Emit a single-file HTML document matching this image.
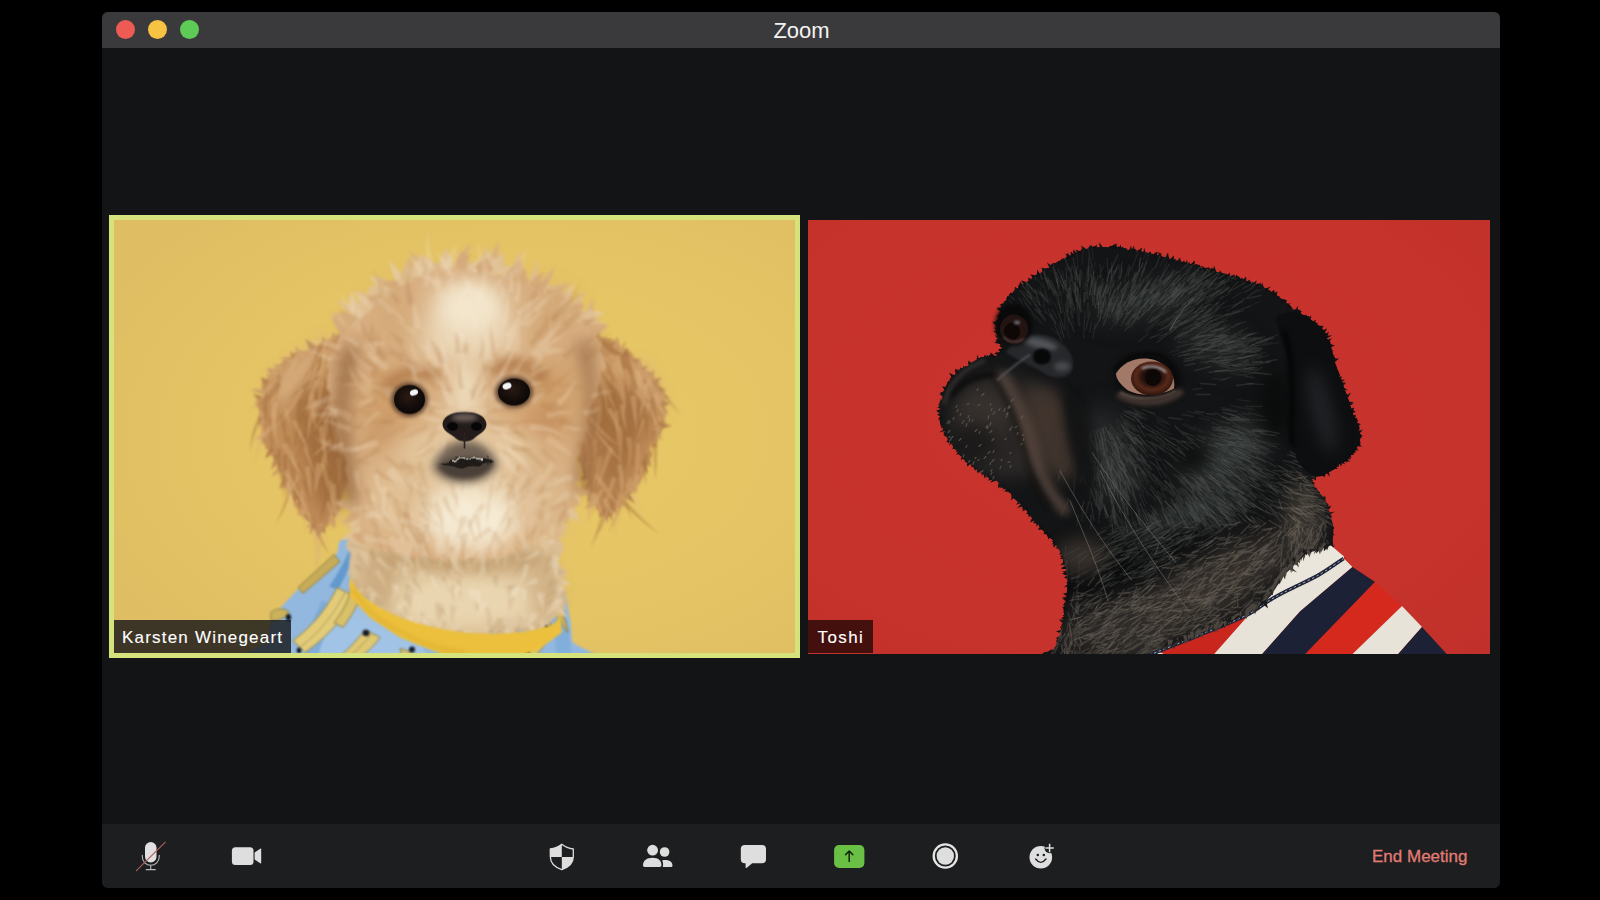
<!DOCTYPE html>
<html lang="en">
<head>
<meta charset="utf-8">
<title>Zoom</title>
<style>
*{margin:0;padding:0;box-sizing:border-box}
html,body{width:1600px;height:900px;overflow:hidden;background:#000}
body{font-family:"Liberation Sans",sans-serif;position:relative}
#win{position:absolute;left:102px;top:12px;width:1398px;height:876px;background:#131415;border-radius:6px;overflow:hidden}
#titlebar{position:absolute;left:0;top:0;width:100%;height:36px;background:#3a3a3c}
#titlebar .t{position:absolute;left:0;right:0;top:0;height:36px;line-height:37px;text-align:center;color:#f2f2f2;font-size:22px;padding-left:1px;}
.tl{position:absolute;top:8.2px;width:19px;height:19px;border-radius:50%}
#tile1{position:absolute;left:7px;top:202.5px;width:691px;height:443px;background:#d6e27c;}
#tile1 .ph{position:absolute;left:5px;top:5px;width:681px;height:433px;background:#e9c35b;overflow:hidden}
#tile2{position:absolute;left:706px;top:207.5px;width:682px;height:434px;background:#c8332c;overflow:hidden}
.nm{position:absolute;height:33px;line-height:35px;-webkit-text-stroke:0.12px #fff;color:#fff;font-size:17px;letter-spacing:1.2px;padding:0 8px 0 8px;white-space:nowrap}
#bar{position:absolute;left:0;top:812px;width:100%;height:64px;background:#1c1e1f}
#end{position:absolute;left:1270px;top:0;height:64px;line-height:66px;color:#e27c74;-webkit-text-stroke:0.3px #e27c74;font-size:17px;white-space:nowrap}
.ic{position:absolute;overflow:visible}
</style>
</head>
<body>
<div id="win">
  <div id="titlebar">
    <div class="tl" style="left:14px;background:#ee5b54"></div>
    <div class="tl" style="left:46px;background:#f6c343"></div>
    <div class="tl" style="left:78px;background:#5fcb57"></div>
    <div class="t">Zoom</div>
  </div>
  <div id="tile1">
    <div class="ph">
      <!--DOG1-START-->
<svg class="ic" style="left:0;top:0" width="681" height="433" viewBox="114 219.5 681 433">
  <defs>
    <radialGradient id="bg1" cx="60%" cy="50%" r="75%">
      <stop offset="0" stop-color="#e8c865"/>
      <stop offset="0.55" stop-color="#e5c465"/>
      <stop offset="1" stop-color="#debd63"/>
    </radialGradient>
    <filter id="fur" color-interpolation-filters="sRGB" filterUnits="userSpaceOnUse" x="114" y="219.5" width="681" height="433">
      <feTurbulence type="fractalNoise" baseFrequency="0.05 0.06" numOctaves="2" seed="7" result="n"/>
      <feDisplacementMap in="SourceGraphic" in2="n" scale="14" xChannelSelector="R" yChannelSelector="G" result="d"/>
      <feGaussianBlur in="d" stdDeviation="1.5"/>
    </filter>
    <filter id="furfine" color-interpolation-filters="sRGB" filterUnits="userSpaceOnUse" x="114" y="219.5" width="681" height="433">
      <feTurbulence type="fractalNoise" baseFrequency="0.09 0.12" numOctaves="2" seed="3" result="n"/>
      <feDisplacementMap in="SourceGraphic" in2="n" scale="10" xChannelSelector="R" yChannelSelector="G" result="d"/>
      <feGaussianBlur in="d" stdDeviation="0.7"/>
    </filter>
    <filter id="b05" color-interpolation-filters="sRGB" filterUnits="userSpaceOnUse" x="114" y="219.5" width="681" height="433"><feGaussianBlur stdDeviation="0.7"/></filter>
    <filter id="b15" color-interpolation-filters="sRGB" filterUnits="userSpaceOnUse" x="114" y="219.5" width="681" height="433"><feGaussianBlur stdDeviation="1.4"/></filter>
    <filter id="b1" color-interpolation-filters="sRGB" filterUnits="userSpaceOnUse" x="114" y="219.5" width="681" height="433"><feGaussianBlur stdDeviation="1"/></filter>
    <filter id="b2" color-interpolation-filters="sRGB" filterUnits="userSpaceOnUse" x="114" y="219.5" width="681" height="433"><feGaussianBlur stdDeviation="2"/></filter>
    <filter id="b4" color-interpolation-filters="sRGB" filterUnits="userSpaceOnUse" x="114" y="219.5" width="681" height="433"><feGaussianBlur stdDeviation="4"/></filter>
    <filter id="b8" color-interpolation-filters="sRGB" filterUnits="userSpaceOnUse" x="114" y="219.5" width="681" height="433"><feGaussianBlur stdDeviation="8"/></filter>
    <filter id="b14" color-interpolation-filters="sRGB" filterUnits="userSpaceOnUse" x="114" y="219.5" width="681" height="433"><feGaussianBlur stdDeviation="13"/></filter>
    <radialGradient id="eyeg" cx="45%" cy="40%" r="60%">
      <stop offset="0" stop-color="#2a1a12"/>
      <stop offset="0.7" stop-color="#120c0a"/>
      <stop offset="1" stop-color="#0a0706"/>
    </radialGradient>
    <clipPath id="c1"><rect x="114" y="219.5" width="681" height="433"/></clipPath>
  </defs>
  <rect x="114" y="219.5" width="681" height="433" fill="url(#bg1)"/>
  <g clip-path="url(#c1)">
  <!-- shirt -->
  <g filter="url(#b1)">
    <path d="M352.0 538.0 C331.2 537.2 343.3 547.2 335.0 555.0 C326.7 562.8 312.0 575.0 302.0 585.0 C292.0 595.0 280.8 605.8 275.0 615.0 C269.2 624.2 268.5 632.2 267.0 640.0 C265.5 647.8 214.8 658.3 266.0 662.0 C317.2 665.7 523.0 665.7 574.0 662.0 C625.0 658.3 572.7 647.3 572.0 640.0 C571.3 632.7 571.7 626.3 570.0 618.0 C568.3 609.7 567.0 597.2 562.0 590.0 C557.0 582.8 557.0 580.0 540.0 575.0 C523.0 570.0 491.3 566.2 460.0 560.0 C428.7 553.8 372.8 538.8 352.0 538.0 Z" fill="#93b8df"/>
    <path d="M300 640 C330 620 352 604 372 600 L420 640 L430 662 H290 Z" fill="#a4c5e7" opacity=".8"/>
    <path d="M353 541 C347 556 339 572 329 586 L338 589 C346 575 353 559 358 546 Z" fill="#6399cd"/>
    <path d="M322 600 C314 616 306 636 304 656 L318 656 C322 640 330 622 338 606 Z" fill="#79a8d8" opacity=".8"/>
    <path d="M560 596 C566 612 570 634 572 656 L556 656 C556 636 552 616 548 604 Z" fill="#7eabd9" opacity=".8"/>
    <g stroke="#8a8044" stroke-width="1">
      <path d="M334 554 C322 565 310 576 298 587 L303 593 C316 582 329 571 340 561 Z" fill="#c6ab58"/>
      <path d="M337 587 C329 604 315 624 293 640 L305 652 C328 636 347 614 355 596 Z" fill="#e3cb78"/>
      <path d="M352 586 C349 598 343 612 334 622 L343 627 C352 615 360 601 362 590 Z" fill="#d9c06a"/>
      <path d="M365 629 C358 639 349 648 340 656 L359 658 C368 651 376 643 380 637 Z" fill="#e0c873"/>
      <path d="M271 612 C276 608 283 607 289 611 C287 617 278 621 271 620 Z" fill="#cdb25c"/>
      <path d="M522 648 C530 638 540 628 548 624 C550 636 542 650 532 660 Z" fill="#dcc36c"/>
      <path d="M557 602 C562 610 566 620 568 632 C562 626 556 614 554 606 Z" fill="#cdb25c"/>
      <path d="M400 648 C408 650 416 654 422 660 L404 662 Z" fill="#d9c06a"/>
    </g>
    <g fill="none" stroke="#8a8044" stroke-width=".8" opacity=".8">
      <path d="M345 592 C336 610 322 630 301 646"/>
      <path d="M372 633 C365 642 357 650 349 656"/>
    </g>
    <g fill="#151b28">
      <ellipse cx="366" cy="632.5" rx="3.4" ry="3.2"/>
      <ellipse cx="288.5" cy="617" rx="2.6" ry="3.4"/>
      <ellipse cx="299" cy="650" rx="2.4" ry="3"/>
      <ellipse cx="548" cy="626" rx="3" ry="4"/>
      <ellipse cx="527" cy="651" rx="3" ry="3"/>
      <ellipse cx="412" cy="649" rx="3" ry="3"/>
    </g>
  </g>
  <!-- neck fur -->
  <path d="M356.0 535.0 C337.7 541.7 350.7 552.5 350.0 560.0 C349.3 567.5 348.3 573.0 352.0 580.0 C355.7 587.0 363.7 595.3 372.0 602.0 C380.3 608.7 391.5 615.3 402.0 620.0 C412.5 624.7 423.7 627.7 435.0 630.0 C446.3 632.3 457.5 633.5 470.0 634.0 C482.5 634.5 497.5 634.5 510.0 633.0 C522.5 631.5 536.7 628.8 545.0 625.0 C553.3 621.2 556.8 616.7 560.0 610.0 C563.2 603.3 564.0 593.3 564.0 585.0 C564.0 576.7 561.5 568.3 560.0 560.0 C558.5 551.7 571.7 541.7 555.0 535.0 C538.3 528.3 493.2 520.0 460.0 520.0 C426.8 520.0 374.3 528.3 356.0 535.0 Z" fill="#dcc097" filter="url(#fur)"/>
  <g filter="url(#b1)"><path d="M353 576Q351 578 351 583Q355 582 358 580ZM367 589Q363 589 359 590Q363 594 366 594ZM374 599Q373 603 375 609Q377 605 379 602ZM384 604Q380 607 377 611Q384 612 388 609ZM392 609Q387 613 382 617Q390 616 395 613ZM440 625Q435 628 432 634Q437 632 443 629ZM449 628Q448 632 449 637Q453 633 454 630ZM451 626Q448 629 446 633Q452 633 455 631ZM473 632Q476 636 480 640Q482 634 480 629ZM481 630Q481 636 481 641Q484 636 485 630ZM477 631Q480 634 482 637Q483 632 481 629ZM536 623Q537 628 539 633Q544 627 544 622ZM542 619Q541 622 541 627Q546 625 548 622ZM544 620Q546 625 551 629Q550 624 550 619ZM554 612Q561 615 568 617Q564 609 558 606ZM558 591Q562 594 566 597Q566 590 562 586Z" fill="#dcc097" opacity="0.95"/><path d="M362 587Q357 590 353 595Q359 593 364 590ZM396 614Q396 618 398 623Q403 619 404 615ZM401 616Q401 620 403 625Q406 621 406 617ZM413 621Q413 625 416 629Q418 625 419 621ZM422 624Q423 628 424 633Q427 628 426 623ZM464 629Q463 633 466 637Q467 634 468 630ZM505 629Q505 634 507 639Q508 634 509 629ZM511 630Q512 634 518 638Q518 632 517 627ZM529 624Q529 629 532 634Q535 630 536 626ZM555 610Q561 613 565 616Q563 608 558 606ZM559 584Q564 585 571 584Q566 580 561 578Z" fill="#e6d0aa" opacity="0.95"/><path d="M353 577Q352 581 354 586Q356 583 358 580ZM358 581Q353 583 348 586Q355 589 361 587ZM369 595Q367 600 369 606Q371 601 373 597ZM380 602Q377 604 374 606Q379 607 382 605ZM408 618Q405 623 403 631Q410 626 414 621ZM425 622Q422 626 422 630Q428 630 430 627ZM428 626Q431 631 439 634Q436 629 433 624ZM460 630Q460 635 459 641Q464 635 464 629ZM487 632Q492 634 497 633Q493 630 489 628ZM488 628Q484 634 482 640Q489 637 493 632ZM498 628Q496 633 498 640Q502 636 505 632ZM514 628Q515 633 516 637Q519 632 518 628ZM522 628Q525 633 529 637Q529 631 527 625ZM534 622Q534 626 535 629Q540 627 541 624ZM558 600Q565 603 572 603Q566 599 560 596ZM560 597Q563 596 567 592Q563 591 559 591ZM560 595Q564 594 567 592Q563 589 559 590ZM559 575Q563 573 567 571Q562 569 557 570Z" fill="#d2b58a" opacity="0.95"/></g>
  <ellipse cx="465" cy="600" rx="75" ry="26" fill="#e9d5b0" filter="url(#b8)"/>
  <ellipse cx="378" cy="585" rx="18" ry="26" fill="#c9a87c" filter="url(#b8)" opacity=".8"/>
  <ellipse cx="545" cy="590" rx="16" ry="30" fill="#d0b084" filter="url(#b8)" opacity=".8"/>
  <ellipse cx="460" cy="558" rx="92" ry="12" fill="#bd9868" filter="url(#b8)" opacity=".8"/>
  <g filter="url(#b15)"><path d="M402 617Q402 627 404 636Q405 627 405 617ZM515 583Q509 587 501 586Q511 590 517 587ZM549 556Q545 565 544 576Q550 568 555 559ZM498 617Q494 626 486 634Q500 629 504 619ZM508 618Q507 626 512 635Q513 627 515 619ZM443 576Q443 585 451 594Q446 585 446 576ZM517 626Q514 635 507 642Q518 637 522 628ZM391 615Q393 621 401 624Q398 619 396 614ZM437 523Q439 530 439 537Q443 529 441 522ZM420 612Q421 619 421 625Q424 618 424 612ZM550 579Q549 585 546 590Q555 586 556 580ZM410 579Q417 585 422 593Q420 582 413 575ZM422 553Q425 562 429 570Q431 560 429 552ZM399 612Q399 618 398 624Q405 618 405 612ZM519 615Q519 624 512 632Q523 625 524 616ZM514 536Q513 541 518 548Q517 542 518 537ZM435 603Q436 611 437 618Q441 610 439 602ZM365 549Q371 554 375 562Q375 550 369 545ZM457 556Q456 565 453 573Q459 565 461 557ZM466 632Q464 639 467 648Q467 640 470 633ZM354 565Q357 570 362 573Q361 568 359 563ZM483 561Q483 568 491 576Q488 568 488 561ZM456 543Q456 552 466 561Q461 552 460 542ZM455 629Q455 637 464 646Q460 637 461 629ZM443 620Q440 630 440 641Q443 631 446 621ZM402 595Q404 601 412 605Q408 600 407 593ZM399 608Q403 617 404 627Q409 615 406 606ZM406 584Q406 590 404 595Q411 590 411 584ZM440 608Q438 617 437 627Q441 618 444 609ZM441 576Q442 581 447 586Q445 581 446 575ZM493 575Q492 581 498 588Q497 582 498 575Z" fill="#a88458" opacity="0.25"/><path d="M355 558Q365 564 370 576Q368 559 359 553ZM537 557Q532 565 526 572Q534 566 540 558ZM473 528Q468 537 458 543Q471 539 476 530ZM348 545Q358 550 371 548Q359 547 350 542ZM385 560Q391 567 401 572Q395 564 389 557ZM487 613Q486 619 492 626Q490 620 491 614ZM406 586Q411 591 417 595Q413 589 408 583ZM406 593Q410 602 407 614Q415 600 411 591ZM451 584Q449 593 455 604Q453 594 455 585ZM508 585Q507 595 508 606Q511 596 513 585ZM368 549Q372 555 374 562Q376 552 373 546ZM443 553Q449 561 456 567Q451 559 445 551ZM474 603Q475 608 479 613Q479 608 479 603ZM486 607Q485 612 491 618Q489 613 490 608ZM502 622Q496 630 492 640Q500 633 507 627ZM554 587Q548 590 545 599Q550 595 556 593ZM473 563Q474 568 477 574Q479 568 479 562ZM438 605Q441 612 448 618Q445 610 442 603ZM387 572Q387 579 389 585Q390 578 390 572ZM504 536Q499 544 496 554Q504 547 510 539ZM552 598Q546 600 542 608Q548 605 554 603ZM488 618Q486 627 495 639Q490 628 492 618ZM455 579Q460 589 460 601Q464 587 460 577ZM431 630Q436 639 442 648Q440 637 436 628ZM451 604Q448 612 453 623Q453 614 457 607ZM521 554Q520 565 513 575Q526 566 528 555ZM511 596Q508 603 509 612Q512 605 515 597ZM476 551Q468 556 462 563Q472 561 479 556ZM427 542Q428 548 435 554Q432 548 432 541Z" fill="#b8946a" opacity="0.25"/><path d="M454 549Q452 555 451 561Q457 557 460 552ZM396 607Q401 614 408 620Q405 611 401 603ZM370 592Q369 600 370 608Q375 600 376 593ZM393 586Q396 591 398 595Q400 588 398 584ZM448 530Q449 540 450 549Q454 539 454 530ZM475 590Q475 600 482 610Q480 600 481 590ZM514 585Q512 593 505 600Q518 595 521 587ZM554 537Q548 541 542 545Q550 545 556 541ZM419 618Q423 624 432 628Q427 622 423 615ZM406 617Q407 625 411 633Q414 625 413 616ZM416 556Q415 565 422 576Q418 566 420 556ZM537 549Q530 556 519 560Q534 559 540 552ZM426 529Q429 535 435 539Q433 533 431 527ZM473 527Q473 534 473 540Q478 534 479 528ZM376 559Q382 566 392 570Q385 563 379 556ZM531 612Q530 620 524 627Q536 621 538 613ZM392 540Q395 544 404 544Q398 542 395 538ZM509 618Q507 627 510 638Q512 629 515 619ZM468 590Q470 595 472 600Q476 593 475 588ZM397 528Q403 535 406 544Q407 532 402 525ZM521 531Q519 541 525 552Q523 542 526 532ZM553 555Q551 561 547 567Q557 563 560 557ZM558 584Q557 590 558 596Q563 592 565 587ZM556 598Q553 607 544 615Q558 610 563 600ZM429 576Q432 584 439 592Q436 583 433 574ZM522 588Q521 595 525 603Q525 596 527 590ZM534 577Q531 581 526 584Q535 585 539 581ZM480 554Q483 562 481 572Q488 561 486 552ZM553 560Q551 570 560 581Q556 571 559 562ZM458 584Q455 588 453 593Q459 591 463 588ZM485 600Q478 607 476 618Q481 610 487 603ZM402 566Q402 572 407 578Q409 571 409 565ZM524 564Q524 574 518 585Q529 574 529 564ZM537 592Q537 601 545 610Q543 601 544 592Z" fill="#f7ecd4" opacity="0.35"/><path d="M435 621Q439 631 450 639Q444 630 441 619ZM523 611Q517 619 513 630Q522 623 529 615ZM445 606Q444 612 448 619Q448 613 449 607ZM469 632Q468 640 468 648Q472 641 474 633ZM416 607Q414 618 416 629Q420 619 423 609ZM457 620Q456 628 453 636Q461 629 463 621ZM451 559Q454 569 466 577Q459 568 458 557ZM378 534Q381 544 387 552Q386 542 384 533ZM418 570Q419 576 426 582Q426 576 426 570ZM485 626Q484 637 484 648Q488 638 490 627ZM453 563Q451 573 445 582Q455 574 458 565ZM466 630Q466 635 467 640Q472 635 472 630ZM427 608Q426 614 432 622Q432 616 434 610ZM385 536Q387 544 383 553Q391 543 390 535ZM561 595Q552 600 546 609Q555 604 564 600ZM483 566Q481 574 475 581Q485 575 487 567ZM443 581Q443 587 442 594Q450 587 450 581ZM499 545Q495 555 496 566Q501 557 506 548ZM392 584Q394 594 389 606Q400 593 398 582ZM440 554Q441 561 438 568Q446 561 445 554ZM361 551Q361 560 368 569Q369 560 369 551ZM376 534Q381 543 397 546Q387 540 381 530ZM433 529Q435 536 445 541Q442 534 441 527ZM376 605Q378 615 380 625Q382 615 381 605ZM419 570Q417 576 418 583Q421 578 424 572ZM404 552Q407 562 412 572Q413 560 410 550ZM512 533Q506 542 495 546Q511 545 518 537ZM365 589Q372 596 384 598Q376 592 370 585ZM397 561Q398 569 393 578Q402 569 402 561ZM414 598Q418 605 427 608Q422 602 418 595ZM541 619Q540 628 544 637Q544 628 545 620ZM459 526Q458 534 454 540Q464 535 466 528ZM452 624Q450 628 449 634Q456 632 459 628ZM410 576Q408 586 408 596Q411 587 414 577ZM374 572Q380 579 386 588Q384 576 378 568ZM501 535Q502 542 506 548Q506 541 506 535Z" fill="#ecdab8" opacity="0.35"/></g>
  <!-- collar -->
  <path d="M350.0 575.0 C351.3 577.5 353.0 584.7 358.0 590.0 C363.0 595.3 370.5 601.7 380.0 607.0 C389.5 612.3 400.8 617.8 415.0 622.0 C429.2 626.2 448.3 630.3 465.0 632.0 C481.7 633.7 500.5 633.3 515.0 632.0 C529.5 630.7 544.5 627.3 552.0 624.0 C559.5 620.7 558.7 614.0 560.0 612.0 L562.0 632.0 L540.0 648.0 L510.0 660.0 L465.0 662.0 L430.0 649.0 L400.0 637.0 L370.0 617.0 L350.0 596.0 Z" fill="#ecc03c" filter="url(#b1)"/>
  <path d="M352.0 588.0 C355.3 592.2 363.7 605.7 372.0 613.0 C380.3 620.3 392.0 626.7 402.0 632.0 C412.0 637.3 421.5 641.7 432.0 645.0 C442.5 648.3 459.5 650.8 465.0 652.0" stroke="#d9a92c" stroke-width="3" fill="none" filter="url(#b2)" opacity=".7"/>

  <!-- ears -->
  <g filter="url(#fur)">
    <path d="M344.7 332.4 C336.1 332.0 316.4 344.0 305.3 349.6 C294.2 355.2 285.7 358.9 278.2 365.9 C270.6 372.9 262.8 381.5 259.9 391.6 C257.0 401.6 258.5 414.6 260.9 426.1 C263.3 437.6 268.7 448.4 274.2 460.6 C279.7 472.8 287.9 488.6 293.9 499.1 C299.9 509.6 305.7 518.5 310.2 523.7 C314.7 529.0 317.0 532.1 321.1 530.7 C325.2 529.2 330.5 523.3 334.9 514.9 C339.2 506.5 343.5 493.5 347.2 480.3 C350.9 467.2 354.6 451.6 357.1 436.0 C359.5 420.3 362.0 400.6 362.0 386.6 C362.0 372.7 360.0 361.1 357.1 352.1 C354.2 343.1 353.4 332.8 344.7 332.4 Z" fill="#c08d59"/>
    <path d="M579.0 328.4 C587.7 323.7 609.4 341.2 621.0 348.2 C632.5 355.1 640.9 361.9 648.1 370.4 C655.3 378.8 662.3 388.8 664.4 399.0 C666.4 409.1 663.7 419.5 660.4 431.0 C657.1 442.5 650.6 456.7 644.6 468.0 C638.7 479.4 631.7 491.3 624.9 499.1 C618.1 506.9 609.4 515.1 603.7 514.9 C597.9 514.6 594.2 506.6 590.4 497.6 C586.5 488.6 583.6 473.4 580.5 460.6 C577.4 447.9 573.5 435.1 571.6 421.2 C569.7 407.2 567.9 392.2 569.2 376.8 C570.4 361.3 570.4 333.2 579.0 328.4 Z" fill="#c08d59"/>
  </g>
  <g filter="url(#b1)"><path d="M328 342Q326 339 322 336Q322 341 323 345ZM316 349Q313 344 307 341Q308 347 310 352ZM300 356Q298 354 295 351Q294 356 295 359ZM269 441Q266 443 265 449Q269 448 273 446ZM275 457Q272 462 271 469Q277 465 280 461ZM284 476Q280 482 279 489Q286 486 290 480ZM299 502Q299 506 300 509Q302 506 303 503ZM306 518Q309 522 315 524Q315 519 313 515ZM315 522Q311 524 306 526Q312 528 317 527ZM335 497Q336 501 338 505Q340 501 340 497Z" fill="#c08d59" opacity="0.95"/><path d="M317 348Q314 342 305 339Q309 344 311 351ZM298 357Q295 354 290 351Q291 356 294 360ZM270 381Q266 378 261 377Q262 383 266 386ZM263 396Q258 395 253 393Q257 400 262 401ZM271 446Q267 451 265 458Q271 455 275 450ZM272 454Q273 457 276 461Q279 457 279 454ZM293 496Q294 501 299 507Q300 501 300 495ZM305 514Q305 518 310 522Q311 518 311 514ZM313 522Q310 527 310 534Q313 529 317 525ZM317 526Q316 531 318 537Q322 532 323 527ZM318 528Q321 531 326 533Q325 529 323 525ZM330 513Q333 515 336 516Q336 513 334 510Z" fill="#b37f4e" opacity="0.95"/><path d="M337 338Q335 335 333 331Q331 336 332 340ZM305 353Q300 350 295 346Q297 354 301 358ZM293 359Q286 357 279 357Q285 360 292 363ZM283 365Q278 364 273 364Q277 369 282 370ZM278 369Q273 368 267 367Q271 373 277 375ZM278 369Q272 369 266 369Q271 375 277 376ZM274 377Q271 374 266 373Q268 377 269 380ZM265 390Q258 388 250 389Q257 392 264 394ZM261 411Q258 415 259 423Q262 418 265 414ZM262 418Q260 421 258 425Q263 424 266 422ZM266 432Q260 436 254 438Q263 439 268 436ZM279 465Q275 470 271 476Q279 473 284 468ZM286 480Q285 483 287 487Q289 485 291 483ZM291 484Q288 484 284 487Q288 489 292 489ZM296 497Q294 502 294 507Q298 504 300 500ZM304 508Q300 510 297 514Q304 515 307 513ZM327 517Q330 523 335 528Q336 520 333 514ZM334 506Q339 508 345 507Q341 503 336 501Z" fill="#cb9c68" opacity="0.95"/><path d="M605 344Q609 342 614 339Q607 337 602 339ZM634 364Q638 362 642 359Q636 357 632 359ZM646 379Q650 379 654 375Q651 372 647 371ZM652 380Q654 376 654 369Q650 373 647 377ZM657 393Q662 393 666 389Q661 386 657 386ZM659 405Q662 410 668 414Q666 408 663 403ZM650 445Q652 447 657 447Q656 443 654 441ZM646 452Q647 455 652 457Q651 453 651 450ZM643 460Q647 464 651 467Q651 459 648 455ZM629 487Q633 490 638 492Q635 487 631 484ZM626 493Q631 494 637 491Q632 489 627 488ZM603 511Q604 517 608 523Q608 517 608 510Z" fill="#c08d59" opacity="0.95"/><path d="M597 337Q599 332 599 325Q595 330 592 335ZM613 348Q616 344 618 338Q612 341 609 345ZM627 356Q628 352 628 347Q623 350 621 354ZM644 371Q646 368 648 365Q643 366 640 368ZM653 384Q658 382 662 377Q657 378 651 380ZM660 406Q665 407 670 403Q666 401 661 399ZM657 427Q663 429 672 425Q665 424 659 421ZM641 461Q642 468 648 474Q647 467 646 460ZM636 472Q637 479 639 485Q641 478 640 471ZM623 496Q629 499 635 503Q632 495 626 491ZM614 502Q616 505 619 507Q622 503 621 500ZM610 508Q613 511 617 512Q616 507 614 504ZM607 509Q609 515 612 521Q612 514 612 508ZM600 510Q599 513 599 517Q604 515 605 511ZM588 480Q586 484 587 489Q590 485 591 482ZM586 473Q583 476 579 479Q586 480 590 478Z" fill="#b37f4e" opacity="0.95"/><path d="M619 351Q621 344 617 336Q614 342 612 348ZM623 354Q625 347 626 340Q621 346 619 352ZM641 367Q641 362 640 358Q637 362 637 367ZM657 395Q662 399 670 398Q665 395 660 391ZM657 399Q659 401 662 402Q664 396 662 394ZM657 414Q655 420 652 425Q661 422 663 417ZM654 427Q656 431 658 435Q662 430 661 425ZM654 435Q657 438 662 439Q660 435 657 432ZM652 438Q653 441 658 443Q658 439 657 436ZM634 474Q634 480 636 485Q640 480 640 474ZM629 484Q633 488 638 489Q638 484 635 480ZM617 502Q621 506 629 507Q624 503 620 499ZM594 498Q589 504 584 508Q593 507 598 502ZM593 494Q589 496 587 501Q592 501 596 500ZM591 491Q588 496 587 502Q591 498 594 494ZM590 488Q587 491 583 493Q590 494 593 491Z" fill="#cb9c68" opacity="0.95"/></g>
  <g filter="url(#b8)" opacity=".9">
    <path d="M296 385 C296 440 310 485 326 520 C344 480 350 440 354 380 Z" fill="#9f6b3d"/>
    <path d="M592 375 C598 430 602 470 604 505 C624 480 642 440 654 395 Z" fill="#a26e40"/>
    <path d="M270 384 C286 364 310 347 334 334 C324 362 300 390 282 410 Z" fill="#d9b080"/>
    <path d="M640 360 C655 378 664 396 662 416 C650 400 640 384 630 372 Z" fill="#d7ac7c"/>
  </g>
  <g filter="url(#b1)"><path d="M343 470Q346 481 347 493Q349 480 346 469ZM298 399Q296 414 295 429Q300 415 303 399ZM318 446Q317 461 321 475Q321 461 322 447ZM290 478Q295 490 304 500Q299 488 295 476ZM279 415Q285 431 285 449Q288 430 283 414ZM355 417Q358 431 356 445Q361 430 359 416ZM313 445Q312 458 319 472Q315 458 316 445ZM289 484Q295 497 303 509Q299 495 292 483ZM336 412Q335 427 336 443Q337 428 339 412ZM259 416Q250 431 250 452Q253 433 262 418ZM314 412Q313 433 314 453Q316 433 317 413ZM339 462Q346 482 354 501Q349 481 343 461ZM316 411Q313 426 311 441Q318 427 322 412ZM308 517Q316 537 329 554Q320 535 313 516ZM341 391Q333 401 322 408Q336 404 345 394ZM328 482Q322 503 319 525Q326 504 333 484ZM298 410Q296 430 293 449Q301 430 304 411ZM306 408Q304 427 310 446Q310 427 312 409ZM321 355Q313 372 311 392Q316 374 324 357ZM285 436Q285 454 293 472Q290 454 290 436ZM277 448Q277 465 281 483Q281 465 281 448ZM276 381Q268 394 262 409Q272 397 281 384ZM269 417Q271 434 271 452Q275 434 274 417ZM320 341Q313 359 310 378Q317 360 324 342ZM334 478Q337 492 339 507Q341 491 337 477ZM343 477Q351 490 358 504Q355 488 347 474ZM348 347Q348 363 344 379Q353 363 353 347ZM325 466Q334 484 342 502Q336 482 328 465ZM283 454Q282 476 283 498Q286 476 287 454ZM330 446Q346 460 359 478Q349 457 333 442ZM308 428Q300 438 292 449Q302 440 311 430ZM314 420Q322 443 325 468Q325 442 318 419ZM264 392Q263 409 266 426Q267 409 268 392ZM295 464Q305 484 311 506Q309 482 299 462ZM321 372Q303 385 287 399Q305 387 323 375Z" fill="#9c6838" opacity="0.38"/><path d="M290 466Q291 487 296 507Q296 487 296 466ZM277 374Q276 389 275 403Q280 389 282 375ZM337 399Q332 417 337 439Q337 419 342 400ZM354 369Q345 383 331 394Q349 386 359 372ZM327 356Q318 367 310 379Q320 369 330 358ZM287 490Q284 507 275 524Q287 508 291 490ZM284 456Q286 476 285 497Q289 476 287 455ZM316 455Q322 470 334 483Q327 468 321 453ZM347 363Q337 383 332 405Q341 385 352 366ZM344 445Q341 457 345 472Q344 458 348 446ZM301 442Q296 455 291 468Q299 456 304 443ZM325 357Q317 378 318 402Q322 380 330 359ZM324 426Q329 450 346 471Q333 449 329 425ZM326 354Q325 377 334 401Q329 377 329 354ZM276 462Q282 477 295 490Q284 476 279 461ZM311 449Q326 469 346 484Q330 466 316 446ZM355 389Q347 402 337 413Q351 405 360 393ZM351 348Q352 366 351 384Q357 366 356 348ZM314 459Q304 475 303 498Q307 477 318 461ZM337 449Q341 464 354 477Q346 463 343 448ZM303 405Q304 420 311 434Q308 420 307 405ZM320 349Q314 369 309 389Q318 370 325 351ZM332 444Q329 456 326 468Q333 457 336 445ZM324 344Q310 361 302 382Q314 364 328 347ZM334 401Q335 417 334 433Q340 417 340 400Z" fill="#a9743f" opacity="0.38"/><path d="M583 467Q582 483 580 499Q586 483 587 467ZM637 415Q638 430 635 445Q641 430 641 414ZM613 366Q616 379 621 393Q622 378 618 364ZM644 454Q641 469 646 485Q645 470 648 455ZM595 400Q605 419 616 437Q609 416 601 397ZM627 428Q628 451 631 474Q632 451 631 428ZM587 434Q588 448 585 461Q590 448 591 434ZM592 355Q601 364 616 369Q605 361 596 351ZM576 406Q584 419 597 430Q587 417 579 404ZM595 344Q606 363 625 378Q610 361 599 341ZM573 378Q578 395 589 410Q581 394 578 377ZM617 434Q626 451 635 468Q631 449 622 432ZM589 393Q589 409 590 426Q592 409 592 393ZM648 399Q649 414 653 428Q653 413 652 399ZM595 393Q598 406 607 419Q603 405 600 391ZM596 410Q595 423 592 436Q599 424 600 411ZM599 420Q602 432 612 442Q607 431 604 419ZM590 478Q585 499 590 523Q587 499 593 479ZM604 508Q597 528 591 547Q601 529 608 510ZM622 426Q619 448 617 471Q623 449 627 426ZM642 380Q651 395 656 412Q655 393 645 378ZM624 458Q619 474 609 488Q622 475 627 459ZM610 379Q612 393 615 407Q615 393 614 379ZM618 353Q626 373 628 395Q629 372 621 352ZM587 464Q586 478 592 492Q589 478 591 465ZM583 468Q590 491 592 516Q595 490 588 466ZM614 494Q604 512 599 533Q608 514 618 496ZM644 415Q646 428 646 443Q650 428 648 414ZM623 353Q628 374 638 394Q633 373 628 352ZM600 343Q617 358 643 364Q620 355 603 339ZM621 501Q637 519 659 533Q640 517 624 498Z" fill="#9c6838" opacity="0.38"/><path d="M579 460Q584 476 594 492Q588 475 584 458ZM606 397Q614 412 618 429Q617 410 610 395ZM587 383Q600 402 614 419Q602 400 590 381ZM610 441Q617 455 626 469Q620 454 615 439ZM618 405Q620 418 630 430Q623 418 621 405ZM597 411Q607 428 626 441Q611 426 601 409ZM599 406Q601 425 597 445Q604 425 603 406ZM612 377Q621 387 633 394Q623 385 615 375ZM619 435Q604 449 588 461Q607 452 622 438ZM609 459Q608 483 618 508Q612 484 613 459ZM582 370Q577 393 584 418Q582 394 587 372ZM594 487Q599 504 606 520Q602 503 598 486ZM602 414Q610 437 629 457Q615 435 607 412ZM586 399Q590 411 601 421Q594 410 590 398ZM570 384Q584 402 607 413Q587 400 574 382ZM649 406Q657 422 662 440Q660 421 653 405ZM596 379Q598 396 606 412Q603 395 601 378ZM619 359Q627 370 638 378Q630 368 622 357ZM621 495Q626 507 632 520Q629 506 624 493ZM577 446Q576 461 571 475Q580 461 582 447ZM614 459Q612 475 619 492Q615 476 617 460ZM650 431Q654 455 655 480Q659 454 656 430ZM612 467Q610 492 604 516Q614 492 617 468ZM612 418Q604 434 595 449Q607 435 615 419ZM629 489Q622 504 611 517Q624 505 632 490ZM624 487Q617 510 609 532Q622 511 628 488ZM597 402Q595 418 593 435Q598 418 600 402ZM633 435Q630 450 631 465Q633 450 636 436ZM653 383Q666 400 681 415Q669 398 657 381Z" fill="#a9743f" opacity="0.38"/><path d="M292 421Q299 437 310 452Q303 436 296 419ZM337 395Q329 411 322 429Q332 413 340 396ZM326 502Q329 514 335 527Q332 514 329 501ZM345 345Q347 362 349 380Q352 362 351 345ZM343 425Q342 441 338 457Q347 442 349 426ZM303 447Q308 462 316 476Q311 461 306 446ZM316 462Q314 477 315 493Q320 478 321 463ZM330 345Q324 365 321 386Q328 366 334 347ZM312 400Q315 412 314 424Q319 411 317 399ZM331 483Q332 505 330 528Q337 505 336 483ZM282 472Q296 492 309 513Q300 490 287 469ZM323 453Q320 471 314 489Q324 472 327 454ZM314 379Q306 396 307 417Q311 398 320 381ZM331 341Q322 359 319 380Q326 361 336 344ZM323 361Q321 374 313 387Q325 375 327 362ZM311 406Q306 422 308 441Q310 424 316 408ZM330 406Q331 430 338 454Q334 430 333 406ZM286 481Q287 502 293 522Q292 502 292 481ZM282 444Q291 464 305 481Q296 462 287 442ZM284 408Q287 420 293 431Q289 419 287 408ZM323 345Q321 367 321 390Q324 368 326 346ZM305 466Q307 482 311 498Q311 482 310 466ZM328 361Q319 371 309 381Q322 374 331 364ZM295 354Q291 367 284 379Q295 368 299 356ZM272 401Q270 421 273 441Q275 422 278 402ZM331 510Q343 527 361 540Q348 524 336 506ZM306 513Q308 530 319 546Q312 529 310 513ZM316 363Q312 378 306 393Q315 379 319 363ZM318 426Q321 448 328 469Q326 447 324 425ZM273 422Q262 434 248 443Q265 437 277 425Z" fill="#e2bb8a" opacity="0.38"/><path d="M329 337Q317 357 303 375Q320 359 332 339ZM329 399Q322 419 308 436Q325 420 332 400ZM338 388Q337 403 335 418Q340 403 342 388ZM352 391Q343 408 341 430Q346 410 356 393ZM321 464Q325 486 336 507Q329 485 325 463ZM323 340Q321 363 318 386Q326 364 328 340ZM328 480Q328 493 334 507Q332 493 332 480ZM309 394Q308 412 317 432Q313 413 315 394ZM271 410Q270 429 280 450Q275 430 276 410ZM318 380Q317 397 318 413Q322 397 324 381ZM347 461Q348 483 345 505Q353 483 353 460ZM347 392Q336 410 326 429Q339 412 350 394ZM357 380Q358 396 366 411Q361 395 361 380ZM296 474Q292 485 288 497Q295 487 300 476ZM269 382Q261 399 246 413Q264 401 273 384ZM296 375Q283 390 267 403Q286 394 300 379ZM340 450Q340 463 339 477Q343 464 343 450ZM300 489Q301 513 305 537Q304 513 304 489ZM318 523Q318 548 315 573Q323 548 324 523ZM356 361Q354 379 349 397Q357 379 360 361ZM324 419Q325 433 323 448Q329 433 328 419ZM358 384Q356 403 354 421Q360 403 363 385ZM301 501Q310 524 329 542Q312 522 304 500ZM260 424Q259 444 253 465Q263 445 264 424ZM336 458Q339 473 338 488Q343 472 341 458ZM300 387Q290 409 274 428Q294 411 304 389ZM330 437Q320 447 311 457Q323 450 333 440ZM335 421Q337 437 333 453Q340 437 340 421ZM313 527Q315 545 315 563Q320 544 318 526ZM339 340Q335 355 336 371Q339 356 343 341Z" fill="#d9ae7a" opacity="0.38"/><path d="M582 435Q588 450 588 468Q592 449 586 433ZM573 411Q583 430 601 445Q585 429 576 409ZM583 414Q598 433 619 446Q602 430 587 411ZM579 461Q573 483 560 503Q576 484 583 462ZM634 390Q643 406 657 418Q647 404 638 388ZM595 372Q599 386 606 398Q603 384 600 371ZM635 372Q643 385 645 401Q645 384 638 370ZM602 499Q607 512 621 522Q611 511 607 497ZM600 488Q594 499 591 512Q598 501 604 490ZM590 341Q601 352 615 359Q604 349 593 338ZM607 506Q603 519 599 532Q606 520 610 507ZM615 356Q619 372 622 389Q624 371 620 354ZM576 343Q579 365 582 388Q584 364 582 342ZM600 346Q606 365 621 381Q609 364 604 345ZM620 404Q621 419 628 434Q624 419 625 404ZM647 403Q651 419 662 433Q655 418 650 402ZM617 464Q620 480 622 495Q625 479 622 464ZM652 393Q657 408 667 421Q661 406 657 392ZM578 337Q586 348 592 362Q590 346 582 334ZM611 364Q622 384 625 409Q627 382 616 362ZM636 370Q637 385 645 400Q640 385 640 370ZM644 383Q641 403 638 424Q645 404 649 383ZM568 402Q566 423 559 443Q571 423 573 402ZM630 396Q632 413 637 430Q637 413 636 395ZM594 476Q606 495 623 510Q610 492 598 473ZM593 431Q608 450 626 466Q611 448 596 429ZM612 476Q607 490 605 505Q612 492 617 478ZM629 488Q637 505 642 523Q640 504 633 487ZM607 409Q614 421 619 435Q618 419 611 407ZM593 437Q591 454 597 471Q595 454 597 438ZM591 492Q587 508 586 524Q592 509 597 493ZM616 361Q616 384 627 407Q619 384 619 361Z" fill="#e2bb8a" opacity="0.38"/><path d="M596 399Q599 412 599 426Q603 411 601 398ZM641 465Q636 485 631 506Q639 486 644 465ZM594 494Q596 509 606 522Q601 508 599 494ZM642 419Q638 432 634 446Q641 433 645 419ZM619 492Q612 513 615 539Q616 515 624 493ZM602 384Q605 401 608 419Q608 401 605 383ZM646 378Q649 396 647 416Q654 396 651 377ZM633 370Q636 385 642 399Q641 384 639 369ZM629 477Q626 495 624 513Q629 496 633 478ZM628 358Q640 379 653 399Q642 377 631 357ZM598 367Q613 386 630 404Q616 384 601 364ZM612 367Q614 389 627 411Q619 389 618 367ZM627 481Q621 502 617 523Q624 503 630 482ZM626 437Q629 452 629 468Q634 451 631 436ZM590 352Q601 364 608 379Q603 362 593 350ZM584 462Q586 480 590 498Q590 480 588 462ZM617 426Q620 446 619 467Q624 446 622 426ZM594 398Q595 416 598 434Q600 416 599 397ZM602 357Q615 371 636 379Q618 369 605 354ZM636 443Q637 468 632 493Q641 468 640 443ZM583 424Q588 439 599 452Q591 438 586 423ZM621 371Q626 381 629 393Q631 379 626 368ZM609 446Q600 469 595 494Q605 471 614 448ZM614 411Q617 431 618 450Q620 430 618 410ZM599 376Q606 395 617 412Q610 393 603 375ZM607 357Q620 371 630 388Q624 368 612 353ZM645 380Q647 393 644 407Q651 392 650 379ZM598 456Q597 472 591 488Q601 472 602 456Z" fill="#d9ae7a" opacity="0.38"/></g>
  <!-- head -->
  <path d="M453.3 263.3 C465.6 263.5 483.7 265.8 497.7 269.2 C511.6 272.7 525.6 278.0 537.1 284.0 C548.6 290.0 557.2 297.6 566.7 305.2 C576.2 312.9 587.7 320.5 593.8 329.9 C600.0 339.4 603.7 350.0 603.7 362.0 C603.7 373.9 597.1 389.1 593.8 401.4 C590.5 413.8 586.7 424.4 584.0 436.0 C581.3 447.5 580.0 459.0 577.6 470.5 C575.1 482.0 573.9 494.3 569.2 505.0 C564.5 515.7 560.5 526.4 549.4 534.6 C538.3 542.8 518.6 550.2 502.6 554.3 C486.6 558.4 469.7 559.3 453.3 559.3 C436.8 559.3 418.7 557.2 403.9 554.3 C389.1 551.5 373.1 549.4 364.5 542.0 C355.8 534.6 355.3 521.9 352.1 509.9 C349.0 498.0 348.2 482.8 345.7 470.5 C343.3 458.1 340.0 447.5 337.4 436.0 C334.7 424.4 331.6 413.8 330.0 401.4 C328.3 389.1 325.4 373.9 327.5 362.0 C329.5 350.0 335.7 339.4 342.3 329.9 C348.9 320.5 358.3 312.9 366.9 305.2 C375.6 297.6 384.6 290.2 394.1 284.0 C403.5 277.9 413.8 271.7 423.7 268.3 C433.5 264.8 440.9 263.2 453.3 263.3 Z" fill="#d9b083" filter="url(#fur)"/>
  <g filter="url(#b15)"><path d="M468 268Q467 258 457 249Q459 259 460 268ZM484 272Q487 263 487 253Q477 259 473 267ZM489 271Q489 257 487 244Q480 257 480 271ZM504 275Q506 263 502 250Q496 261 493 272ZM513 279Q520 265 522 248Q514 262 507 275ZM533 286Q538 273 539 259Q532 271 527 284ZM549 299Q558 292 566 285Q551 283 542 289ZM574 316Q581 304 585 290Q575 299 566 310ZM580 315Q578 306 569 298Q568 308 568 317ZM593 336Q600 330 606 322Q596 324 588 329ZM364 310Q350 304 335 299Q346 311 360 319ZM369 307Q357 302 346 295Q354 308 366 313ZM378 301Q369 292 353 290Q362 298 370 308ZM434 266Q426 259 418 253Q419 268 426 275ZM451 268Q451 258 446 248Q443 257 441 267Z" fill="#dfbe93" opacity="0.95"/><path d="M474 273Q486 266 493 251Q482 258 470 264ZM560 305Q569 295 576 283Q564 291 555 301ZM584 326Q593 318 605 312Q587 309 577 316ZM356 317Q344 315 331 314Q343 323 355 325ZM364 315Q357 303 351 291Q348 308 354 321ZM380 303Q381 293 375 281Q372 292 371 303ZM396 286Q386 277 369 276Q379 285 388 294ZM406 282Q399 270 389 259Q392 273 398 286Z" fill="#e6cba3" opacity="0.95"/><path d="M460 269Q466 255 473 242Q459 252 453 266ZM497 273Q498 257 499 241Q488 256 486 271ZM523 281Q525 270 521 259Q518 269 516 280ZM542 292Q551 281 555 266Q545 276 535 287ZM553 299Q561 289 573 282Q556 284 547 294ZM554 302Q563 295 567 281Q559 289 549 295ZM569 315Q577 310 586 305Q573 301 564 305ZM590 328Q595 314 593 297Q587 310 581 324ZM350 329Q344 320 330 315Q336 325 341 335ZM354 321Q344 315 332 311Q338 323 347 330ZM414 280Q413 266 412 253Q404 266 403 280ZM424 274Q421 264 416 254Q412 265 414 276ZM427 270Q417 261 410 249Q413 266 422 275ZM438 266Q432 259 423 254Q426 264 431 272Z" fill="#d8b080" opacity="0.95"/><path d="M467 269Q468 262 466 256Q456 261 454 267ZM480 272Q485 264 488 256Q479 260 474 267ZM498 271Q496 262 493 253Q485 263 485 273ZM559 305Q564 299 569 294Q557 292 551 297ZM563 308Q569 301 568 289Q561 295 555 301ZM573 312Q574 304 568 295Q564 303 562 310ZM577 323Q584 320 590 310Q581 309 573 311ZM584 326Q591 322 597 314Q588 315 580 319ZM595 336Q600 329 600 317Q591 320 585 327ZM569 495Q580 495 590 493Q580 487 570 486ZM550 526Q554 533 564 537Q564 528 561 521ZM545 529Q548 537 560 543Q559 534 558 526ZM553 529Q560 531 568 529Q563 521 557 518ZM532 540Q536 546 546 549Q544 542 541 536ZM363 537Q361 544 366 554Q371 548 374 542ZM361 531Q355 537 349 541Q360 542 366 538ZM357 519Q352 523 347 528Q356 530 362 528ZM356 500Q345 500 334 501Q344 510 355 511ZM353 322Q346 318 339 316Q340 328 346 333ZM364 314Q361 309 355 306Q353 314 355 319ZM384 298Q381 291 376 286Q374 295 376 301ZM397 283Q386 280 376 276Q382 290 392 295ZM411 282Q412 272 407 261Q401 271 400 281ZM414 279Q413 272 412 265Q405 273 405 280ZM416 274Q411 269 401 270Q404 277 409 282ZM433 274Q436 269 430 259Q425 263 422 268ZM442 271Q448 264 454 255Q443 258 435 265Z" fill="#dcb98d" opacity="0.95"/><path d="M469 272Q474 269 477 263Q471 262 466 264ZM493 275Q499 266 502 256Q489 259 483 267ZM507 278Q513 271 518 263Q506 265 499 271ZM501 272Q499 266 497 259Q492 267 493 274ZM540 293Q546 287 550 277Q541 280 534 284ZM549 295Q551 290 548 283Q540 285 538 290ZM568 308Q570 299 573 290Q560 296 557 305ZM591 329Q595 321 591 307Q585 315 580 322ZM567 505Q574 504 582 500Q575 492 568 491ZM561 515Q570 518 580 521Q575 507 566 502ZM549 536Q555 535 561 528Q555 524 549 523ZM537 536Q540 546 548 554Q549 543 547 533ZM358 526Q350 532 341 538Q356 541 365 536ZM354 512Q349 518 351 530Q356 524 361 519ZM370 312Q367 306 356 303Q355 310 357 316ZM373 306Q367 299 358 296Q359 305 364 312ZM375 301Q366 297 357 293Q362 306 370 311ZM388 288Q378 286 365 292Q374 297 384 301ZM391 288Q381 283 367 287Q376 292 386 298ZM421 276Q421 266 421 255Q412 265 412 276ZM425 270Q421 266 415 265Q413 274 416 278ZM436 267Q430 260 423 253Q424 265 429 272ZM452 265Q448 259 443 253Q438 263 441 270ZM453 267Q453 257 445 247Q445 257 444 267Z" fill="#e2c49a" opacity="0.95"/><path d="M462 271Q467 263 471 253Q459 257 453 264ZM467 269Q468 260 463 250Q456 258 453 266ZM487 272Q489 265 487 257Q478 261 475 268ZM494 271Q493 265 486 259Q483 266 483 272ZM513 280Q517 274 517 266Q510 269 506 274ZM516 280Q520 270 523 259Q511 265 505 275ZM520 281Q522 276 520 268Q514 272 511 277ZM526 283Q528 276 525 267Q521 273 518 280ZM530 281Q523 274 512 269Q517 279 524 286ZM536 288Q540 279 545 271Q533 276 529 285ZM542 293Q547 286 550 277Q540 280 534 285ZM549 302Q556 299 562 294Q553 288 546 289ZM557 302Q559 297 560 290Q550 290 546 294ZM556 306Q562 304 566 296Q560 295 554 296ZM578 319Q582 311 583 302Q573 306 568 312ZM587 328Q591 323 595 319Q585 317 580 321ZM592 337Q601 334 609 324Q598 323 588 325ZM568 492Q578 495 589 495Q581 486 572 482ZM564 502Q571 506 580 505Q577 497 571 492ZM562 505Q566 509 576 507Q574 501 571 497ZM560 515Q565 517 570 518Q568 510 564 508ZM557 518Q561 522 569 523Q567 517 564 512ZM366 531Q359 531 351 534Q358 543 365 544ZM355 510Q347 515 342 524Q351 522 359 518ZM349 329Q342 322 332 316Q335 328 342 336ZM358 318Q350 312 339 309Q342 321 349 328ZM381 295Q375 293 367 297Q370 304 375 307ZM399 281Q390 280 380 281Q389 289 398 290Z" fill="#d4aa7a" opacity="0.95"/></g>
  <!-- ear/face shadows -->
  <path d="M352 345 C338 400 340 450 352 505" stroke="#8a5a34" stroke-width="16" fill="none" filter="url(#b8)" opacity=".8"/>
  <path d="M582 340 C594 395 592 440 580 488" stroke="#90603a" stroke-width="15" fill="none" filter="url(#b8)" opacity=".75"/>
  <!-- forehead light -->
  <ellipse cx="466" cy="325" rx="52" ry="40" fill="#ecd8b8" filter="url(#b14)"/>
  <ellipse cx="470" cy="306" rx="30" ry="24" fill="#f3e6cc" filter="url(#b8)"/>
  <!-- darker zones -->
  <ellipse cx="384" cy="405" rx="26" ry="44" fill="#cf9f6b" filter="url(#b14)"/>
  <ellipse cx="556" cy="398" rx="24" ry="44" fill="#cf9f6b" filter="url(#b14)"/>
  <ellipse cx="412" cy="428" rx="30" ry="13" fill="#d3a06c" filter="url(#b8)" opacity=".85"/>
  <ellipse cx="522" cy="420" rx="30" ry="13" fill="#d3a06c" filter="url(#b8)" opacity=".85"/>
  <ellipse cx="398" cy="315" rx="26" ry="26" fill="#d3a876" filter="url(#b14)" opacity=".8"/>
  <ellipse cx="545" cy="315" rx="26" ry="26" fill="#d3a876" filter="url(#b14)" opacity=".8"/>
  <path d="M384 392 C396 372 420 366 440 378" stroke="#b57f4f" stroke-width="14" fill="none" filter="url(#b4)" opacity=".85"/>
  <path d="M490 372 C508 360 532 362 546 382" stroke="#b57f4f" stroke-width="14" fill="none" filter="url(#b4)" opacity=".85"/>
  <ellipse cx="545" cy="420" rx="18" ry="14" fill="#c48e5e" filter="url(#b8)" opacity=".7"/>
  <ellipse cx="385" cy="432" rx="16" ry="12" fill="#c9976a" filter="url(#b8)" opacity=".6"/>
  <!-- muzzle light -->
  <ellipse cx="466" cy="392" rx="17" ry="30" fill="#ecd8b8" filter="url(#b8)"/>
  <ellipse cx="465" cy="452" rx="70" ry="36" fill="#e4c79e" filter="url(#b14)"/>
  <!-- beard light -->
  <ellipse cx="468" cy="512" rx="56" ry="34" fill="#f0e1c3" filter="url(#b14)"/>
  <ellipse cx="470" cy="520" rx="38" ry="24" fill="#f6ecd6" filter="url(#b8)"/>
  <ellipse cx="392" cy="500" rx="22" ry="34" fill="#e2c398" filter="url(#b14)"/>
  <ellipse cx="546" cy="500" rx="18" ry="34" fill="#ddbc90" filter="url(#b14)"/>
  <g filter="url(#b15)"><path d="M374 471Q387 482 405 486Q390 479 377 468ZM387 356Q378 352 372 343Q376 357 385 361ZM376 398Q368 401 361 410Q369 406 377 404ZM566 505Q555 518 556 541Q558 521 569 508ZM373 340Q365 326 356 314Q361 329 368 342ZM559 422Q567 426 577 426Q570 420 562 416ZM513 432Q523 436 533 439Q524 433 515 428ZM412 414Q397 413 381 423Q397 416 412 417ZM493 535Q490 544 485 552Q493 545 497 537ZM352 363Q338 360 322 360Q337 365 351 369ZM517 465Q515 476 511 487Q518 477 521 465ZM510 450Q522 452 534 450Q523 447 512 444ZM420 501Q426 516 442 527Q429 515 423 500ZM344 410Q329 411 315 421Q330 415 345 414ZM467 519Q468 533 479 545Q472 532 471 519ZM482 358Q486 347 481 332Q483 346 479 357ZM400 301Q396 294 388 289Q392 295 396 303ZM381 364Q369 359 356 355Q366 365 378 370ZM490 483Q489 494 488 505Q493 494 493 483ZM445 362Q442 349 429 338Q436 350 439 363ZM455 450Q455 462 453 475Q460 462 460 449ZM414 364Q404 353 398 337Q402 355 412 366ZM433 503Q442 517 442 538Q446 515 437 501ZM461 352Q460 340 456 329Q455 341 455 353ZM418 532Q417 549 418 566Q423 549 425 532ZM405 342Q399 335 389 331Q395 338 400 345ZM482 273Q481 263 483 253Q477 264 478 273ZM532 346Q544 336 548 317Q541 333 529 341ZM361 378Q347 374 330 378Q345 380 359 384ZM562 311Q572 298 589 291Q569 296 559 309ZM372 503Q381 517 394 528Q384 514 376 501ZM502 367Q511 359 513 343Q508 356 499 365ZM487 424Q499 428 514 420Q501 422 489 418ZM459 535Q462 552 464 570Q466 552 463 534ZM444 406Q426 406 409 400Q426 409 444 409ZM340 399Q326 398 312 400Q326 403 339 404ZM604 357Q615 352 624 343Q613 349 602 353ZM587 343Q597 340 605 329Q596 337 586 339ZM537 338Q544 331 547 321Q541 328 534 334ZM586 361Q600 353 613 345Q598 350 584 357ZM555 322Q559 313 564 304Q555 311 550 319ZM516 466Q511 480 500 491Q514 480 519 467ZM524 393Q531 388 534 377Q528 383 521 388ZM542 485Q540 492 533 498Q544 494 547 486ZM487 413Q503 408 521 413Q501 403 485 406ZM492 532Q495 542 507 549Q499 541 497 531ZM503 452Q510 457 518 461Q512 455 505 449ZM508 516Q508 526 503 535Q511 526 512 517ZM528 479Q519 493 506 502Q524 496 533 483ZM379 371Q363 365 350 352Q361 371 376 378ZM400 386Q387 385 373 391Q386 389 399 390ZM461 460Q462 478 462 496Q465 478 464 460ZM593 358Q604 350 614 339Q601 345 589 352ZM475 422Q488 429 502 435Q490 425 477 418ZM384 494Q392 501 403 506Q396 497 388 490ZM489 526Q478 534 469 543Q481 538 492 530ZM362 510Q375 521 390 529Q377 518 364 507ZM365 425Q355 425 346 424Q355 429 365 429ZM453 389Q444 384 430 386Q441 388 450 393ZM386 351Q372 343 357 336Q370 345 384 354ZM542 336Q544 328 550 321Q541 327 539 335ZM441 555Q448 569 464 578Q452 567 445 553ZM364 488Q368 500 372 513Q372 499 369 487ZM402 513Q409 530 427 541Q415 527 408 510ZM536 398Q546 394 554 389Q544 388 534 391ZM341 352Q329 346 315 345Q327 349 339 356ZM355 410Q343 413 332 417Q345 419 356 416ZM450 546Q447 557 448 569Q451 558 454 547ZM539 406Q549 409 557 414Q551 404 542 401ZM421 535Q423 550 436 563Q427 549 425 534ZM412 532Q420 545 424 560Q425 543 418 529ZM385 458Q397 467 410 476Q399 464 387 455ZM496 356Q494 338 491 320Q489 338 491 356ZM378 446Q365 455 352 465Q367 459 381 451ZM377 340Q374 331 372 321Q368 332 371 342ZM376 364Q368 360 356 364Q366 364 374 368ZM473 400Q479 384 491 370Q476 383 470 398ZM404 353Q394 351 386 344Q393 356 403 359ZM432 437Q424 444 415 451Q426 447 435 440ZM576 445Q590 453 598 469Q593 449 580 440ZM424 524Q427 538 440 551Q431 538 429 523ZM566 328Q574 321 581 312Q571 316 562 323ZM394 418Q385 418 375 424Q384 422 393 424ZM548 330Q547 320 549 311Q543 321 543 330ZM364 382Q350 380 336 379Q350 385 364 387ZM503 379Q510 365 521 354Q507 364 500 377ZM464 456Q464 470 471 484Q468 470 469 457ZM418 369Q405 357 387 350Q401 361 414 373ZM524 484Q517 493 516 508Q521 497 529 489ZM468 354Q470 345 466 335Q464 343 462 352ZM335 411Q326 410 318 405Q325 414 334 416ZM487 379Q487 369 482 359Q484 369 484 379ZM415 303Q409 289 408 273Q403 291 409 306ZM394 467Q404 470 415 466Q405 466 396 463ZM450 480Q450 494 460 509Q454 494 455 480ZM464 388Q460 375 460 362Q456 377 460 389ZM419 513Q427 522 441 527Q429 520 421 510ZM566 359Q572 354 576 345Q569 349 562 354ZM442 497Q447 513 462 526Q451 512 446 496ZM545 390Q562 384 574 366Q560 380 544 386ZM435 408Q421 405 405 412Q420 410 434 413ZM536 382Q546 375 554 364Q544 371 533 378Z" fill="#a8733f" opacity="0.22"/><path d="M510 487Q505 495 508 507Q508 497 513 489ZM521 371Q527 363 534 354Q524 360 517 368ZM470 420Q481 422 492 413Q481 417 471 415ZM436 426Q426 436 424 454Q429 439 440 430ZM460 516Q459 529 454 541Q465 529 467 516ZM406 406Q392 410 380 421Q393 413 407 409ZM404 403Q387 399 373 386Q386 403 402 408ZM475 455Q481 463 489 469Q485 460 479 452ZM403 502Q407 517 410 533Q412 516 408 501ZM548 406Q557 410 569 408Q560 405 551 400ZM387 420Q371 418 353 429Q371 421 387 423ZM539 517Q534 529 524 540Q540 532 545 520ZM393 352Q378 351 363 356Q378 354 393 355ZM390 503Q405 513 417 528Q407 511 392 500ZM475 512Q476 529 484 547Q479 529 479 512ZM485 457Q481 468 479 480Q486 470 491 460ZM487 502Q486 513 487 525Q489 514 490 503ZM511 432Q523 436 531 447Q524 432 513 428ZM409 554Q405 562 404 571Q411 564 415 557ZM406 424Q391 431 377 441Q392 434 407 427ZM564 499Q551 506 540 515Q554 510 567 504ZM446 441Q444 451 449 462Q449 452 451 442ZM375 341Q365 333 350 333Q363 336 373 344ZM361 349Q352 344 342 339Q348 349 357 355ZM356 462Q364 466 375 463Q366 461 358 458ZM482 461Q479 472 473 482Q483 473 486 462ZM474 396Q482 386 482 369Q477 382 469 392ZM344 407Q329 408 315 416Q329 411 344 410ZM373 532Q378 545 385 559Q383 544 378 530ZM557 422Q567 428 575 439Q569 424 559 418ZM451 390Q447 381 446 370Q444 382 448 392ZM511 374Q517 367 524 361Q514 363 507 370ZM502 474Q500 484 493 492Q504 485 507 475ZM590 356Q601 343 612 330Q596 339 585 352ZM369 519Q376 531 383 544Q380 529 374 516ZM346 433Q337 439 327 444Q339 442 348 436ZM502 380Q513 367 526 355Q508 363 497 376ZM389 391Q374 387 359 383Q373 392 388 396ZM385 299Q384 283 372 268Q379 283 379 299ZM435 375Q423 367 411 359Q420 371 432 379ZM358 408Q348 409 338 413Q348 413 358 413ZM584 406Q597 403 609 392Q596 397 582 400ZM508 483Q508 494 519 506Q514 495 514 484ZM368 392Q352 394 336 391Q353 400 369 399ZM566 309Q577 297 581 279Q574 294 563 305ZM553 321Q567 311 581 301Q565 308 550 317ZM546 397Q556 389 563 376Q554 386 544 394ZM523 423Q539 424 555 423Q539 421 524 419ZM524 323Q525 313 526 303Q522 313 521 323ZM372 432Q361 442 347 447Q365 446 377 437ZM490 402Q495 387 508 374Q492 386 486 401ZM526 390Q541 388 555 381Q541 384 526 385ZM455 414Q444 416 434 424Q445 420 455 418ZM558 336Q566 328 577 323Q563 325 555 333ZM543 497Q537 510 527 520Q541 512 548 500ZM481 397Q489 386 494 373Q486 384 477 394ZM404 478Q407 486 413 494Q412 485 410 476ZM521 449Q533 461 549 470Q537 457 525 445ZM454 494Q456 504 454 514Q459 503 458 494ZM415 484Q419 497 427 508Q424 495 421 482ZM395 509Q400 522 404 534Q403 520 399 508ZM417 461Q418 477 431 493Q423 477 423 461ZM400 463Q411 471 427 471Q414 467 403 459ZM510 430Q518 428 525 418Q517 422 509 423ZM420 494Q427 508 441 518Q432 505 426 491ZM533 314Q538 301 550 291Q533 299 528 312ZM463 531Q460 547 462 564Q465 548 469 533ZM385 544Q392 553 393 565Q394 551 388 542ZM361 359Q353 353 345 347Q351 356 358 362ZM382 352Q381 339 378 327Q376 340 377 352ZM558 387Q572 385 588 391Q572 380 557 382ZM398 514Q409 525 424 533Q411 523 401 511ZM490 396Q494 388 491 376Q491 386 487 395ZM586 326Q594 320 601 314Q591 317 583 322ZM429 370Q422 361 410 355Q417 364 425 374ZM407 467Q412 483 408 502Q418 481 413 465ZM426 423Q413 430 400 439Q415 435 429 428ZM558 397Q567 393 575 387Q566 390 556 394ZM534 301Q538 293 540 283Q534 290 529 298ZM537 510Q540 527 536 545Q545 527 543 510ZM515 546Q512 554 512 563Q516 556 519 548ZM482 502Q471 514 468 531Q475 517 486 506ZM371 412Q355 405 337 403Q354 409 370 416ZM540 450Q546 459 558 463Q550 456 544 447ZM486 371Q494 359 509 353Q491 357 483 369ZM432 445Q425 453 415 458Q428 456 435 448ZM438 556Q445 568 452 581Q450 566 443 553ZM553 471Q549 484 544 497Q554 486 559 473ZM527 475Q524 485 529 497Q528 486 531 477ZM509 503Q504 517 497 530Q508 518 512 505ZM404 518Q408 533 422 544Q411 532 407 517ZM403 515Q403 525 401 534Q407 525 407 515ZM337 368Q329 364 322 358Q326 370 334 374ZM444 535Q447 548 444 561Q451 547 449 534ZM491 367Q496 354 506 343Q493 353 487 365ZM370 393Q359 385 346 381Q356 389 366 397ZM391 381Q378 370 366 359Q376 372 389 383ZM516 373Q527 367 540 364Q524 362 513 367Z" fill="#b88250" opacity="0.22"/><path d="M448 420Q441 426 432 430Q445 431 452 425ZM518 392Q530 386 545 382Q528 380 515 386ZM443 439Q439 456 433 472Q443 457 448 440ZM456 410Q443 410 429 407Q442 416 456 416ZM456 544Q450 561 459 583Q454 562 461 546ZM406 541Q405 560 400 578Q412 560 413 541ZM430 406Q420 402 409 398Q417 408 427 413ZM444 405Q429 401 414 394Q428 405 443 409ZM468 489Q473 504 480 519Q479 503 476 487ZM432 508Q431 524 424 540Q437 524 438 508ZM401 389Q390 386 379 386Q388 391 398 395ZM473 463Q466 477 458 490Q471 480 479 467ZM449 463Q449 478 456 493Q453 478 453 463ZM520 316Q533 303 549 293Q530 299 516 311ZM498 410Q510 404 518 390Q508 400 496 406ZM548 418Q561 412 576 412Q559 408 546 414ZM395 547Q407 558 416 571Q410 554 398 543ZM534 357Q547 346 553 325Q544 342 530 352ZM496 453Q503 467 521 477Q508 465 502 451ZM524 327Q534 310 549 296Q527 306 518 323ZM425 270Q419 261 409 255Q414 265 420 274ZM530 430Q550 429 569 438Q549 423 530 423ZM364 516Q376 519 391 515Q378 513 367 509ZM329 394Q315 401 301 410Q318 407 332 400ZM450 374Q448 355 439 336Q442 355 444 375ZM450 550Q452 562 459 574Q456 562 454 550ZM441 366Q436 351 417 342Q429 354 434 368ZM456 482Q451 501 457 523Q456 503 463 484ZM479 326Q477 312 464 299Q471 312 473 327ZM434 549Q438 558 449 565Q444 556 441 546ZM443 282Q431 273 414 272Q427 279 438 288ZM500 435Q511 445 532 445Q514 442 503 431ZM516 518Q506 533 497 548Q511 537 522 522ZM470 341Q462 329 449 322Q458 332 464 344ZM464 438Q468 450 478 460Q472 449 468 437ZM388 538Q394 551 406 562Q400 549 394 535ZM456 498Q451 513 443 527Q457 515 463 500ZM501 382Q511 366 514 345Q506 363 496 379ZM480 395Q481 380 492 367Q476 380 474 394ZM509 500Q505 509 502 518Q510 511 514 503ZM507 450Q522 463 536 477Q525 460 510 446ZM536 353Q553 346 567 331Q552 342 534 348ZM466 498Q455 515 453 537Q458 517 469 500ZM376 539Q388 548 408 548Q391 546 379 536ZM467 470Q463 489 463 509Q467 490 472 471ZM528 327Q537 318 545 308Q534 315 525 324ZM380 358Q373 352 364 348Q369 356 375 362ZM343 441Q333 445 325 453Q334 448 344 445ZM359 344Q353 337 340 335Q350 340 356 347ZM500 478Q502 488 502 497Q507 487 505 477ZM539 359Q546 349 555 341Q542 346 534 356ZM528 480Q520 496 508 508Q524 497 532 482ZM516 337Q520 326 521 314Q516 325 512 335ZM490 541Q490 551 497 561Q495 551 496 542ZM369 495Q379 511 381 532Q382 509 373 492ZM387 471Q397 482 409 490Q402 477 393 466ZM502 487Q499 496 495 504Q504 497 507 489ZM489 457Q491 470 487 485Q497 469 495 456ZM387 472Q392 484 408 493Q396 483 391 470ZM506 325Q511 307 508 286Q507 306 502 324ZM480 531Q480 550 481 568Q484 550 485 531ZM455 403Q448 393 441 382Q442 396 449 407ZM584 415Q593 414 602 407Q593 409 583 410ZM399 522Q411 525 423 527Q413 520 401 516ZM362 539Q375 543 388 544Q377 537 364 533ZM399 537Q404 549 407 561Q408 547 404 535ZM433 543Q440 554 449 565Q446 551 439 539ZM514 292Q515 281 510 269Q510 280 509 291ZM502 457Q511 466 520 477Q515 463 506 453ZM381 486Q383 503 382 519Q388 502 387 486ZM506 297Q505 287 497 277Q502 287 502 297ZM408 475Q411 484 420 491Q415 482 413 473ZM389 365Q379 359 367 355Q376 363 386 370ZM459 537Q462 556 473 574Q465 556 463 537ZM540 348Q554 339 562 319Q551 334 537 343ZM337 408Q323 412 310 415Q325 418 338 415ZM471 484Q473 504 478 522Q479 503 478 484ZM481 541Q470 553 457 562Q474 556 485 544ZM377 439Q362 443 349 452Q364 449 378 445ZM473 293Q473 283 462 271Q466 282 465 293ZM405 480Q412 489 427 492Q417 484 410 475ZM421 328Q419 313 413 298Q412 313 414 329ZM434 265Q428 249 428 230Q424 250 429 267ZM436 543Q447 554 455 567Q451 550 441 539ZM572 473Q557 477 544 490Q558 482 573 479ZM454 274Q450 262 436 252Q445 263 447 275ZM519 303Q523 289 518 273Q518 288 513 301ZM495 387Q510 377 533 378Q509 374 492 383ZM403 531Q415 542 419 561Q418 539 407 527ZM421 370Q414 362 400 361Q409 367 415 375ZM433 357Q429 347 428 335Q424 349 427 359ZM518 491Q503 504 491 520Q507 508 522 497ZM415 545Q421 558 431 570Q428 556 423 542ZM482 428Q499 430 516 431Q499 426 482 424ZM475 420Q486 426 499 429Q488 422 477 416ZM462 452Q464 463 461 474Q468 462 467 451ZM511 351Q518 334 520 314Q512 331 504 348ZM395 540Q399 553 407 564Q404 551 400 539ZM384 364Q377 358 368 354Q373 363 380 368ZM481 302Q482 293 485 284Q476 292 475 302ZM332 358Q320 351 305 349Q318 354 330 361ZM466 480Q461 494 452 507Q466 496 472 482ZM511 339Q520 326 522 308Q515 322 505 335ZM451 273Q450 256 460 240Q445 256 444 272ZM374 473Q373 485 384 497Q378 485 379 473ZM489 537Q485 546 484 557Q488 548 493 539ZM442 418Q429 417 415 413Q428 422 442 423ZM546 355Q555 352 565 350Q553 346 544 348ZM560 406Q571 394 577 377Q568 391 556 402ZM449 472Q453 491 454 510Q457 490 454 471ZM555 474Q549 482 543 490Q552 484 558 477ZM512 521Q517 538 531 553Q523 537 520 519Z" fill="#fbefd8" opacity="0.24"/><path d="M545 441Q559 449 574 457Q563 443 549 434ZM428 537Q437 545 441 558Q439 542 431 534ZM420 383Q415 372 412 361Q410 375 415 385ZM407 509Q411 526 419 542Q415 525 412 508ZM362 328Q359 316 359 302Q355 317 358 329ZM513 278Q516 269 522 261Q512 267 508 276ZM451 452Q453 466 461 479Q459 465 458 451ZM537 501Q530 516 530 535Q535 519 542 504ZM384 341Q371 341 359 348Q372 345 385 345ZM508 539Q510 553 524 566Q515 552 513 538ZM483 542Q478 558 465 572Q482 559 487 543ZM563 429Q575 430 586 430Q575 426 564 424ZM440 485Q441 502 434 520Q446 502 446 485ZM492 456Q484 471 474 484Q490 474 499 460ZM441 290Q440 276 435 263Q435 277 435 290ZM373 380Q362 374 355 363Q360 378 370 384ZM373 396Q364 397 356 407Q365 403 374 403ZM592 398Q604 393 616 390Q602 389 591 394ZM507 530Q494 538 477 542Q497 544 511 536ZM522 513Q520 525 525 539Q525 526 527 514ZM472 463Q470 476 462 487Q473 477 476 464ZM518 277Q525 264 527 248Q519 261 512 274ZM418 333Q409 323 392 321Q406 326 415 336ZM527 491Q525 504 526 518Q531 505 534 492ZM461 522Q464 531 468 540Q470 529 467 520ZM514 469Q509 477 502 485Q515 481 520 472ZM533 376Q542 369 555 365Q540 366 530 373ZM487 289Q489 274 486 259Q482 274 480 288ZM446 452Q448 468 458 482Q455 467 454 452ZM451 289Q452 278 461 267Q447 277 445 289ZM500 446Q509 455 518 464Q512 452 503 443ZM364 313Q349 304 337 290Q346 309 361 318ZM466 375Q468 356 455 335Q464 355 461 374ZM533 404Q541 398 547 390Q537 393 529 398ZM376 303Q364 296 352 290Q361 302 372 309ZM441 298Q441 287 441 275Q436 286 434 298ZM456 268Q457 258 456 248Q453 258 452 267ZM532 493Q528 510 529 529Q534 512 539 494ZM515 482Q513 497 519 513Q520 498 522 483ZM378 410Q365 419 357 435Q367 422 381 413ZM468 490Q471 499 479 508Q475 498 472 489ZM487 360Q493 343 498 325Q489 341 483 358ZM566 490Q558 496 552 506Q562 502 571 495ZM351 426Q336 422 321 417Q334 426 350 432ZM354 470Q353 481 361 492Q359 481 360 471ZM505 537Q501 554 506 573Q506 555 511 538ZM502 448Q516 460 535 466Q519 456 506 444ZM514 525Q507 538 509 556Q511 540 519 527ZM520 352Q521 340 520 327Q515 339 513 351ZM500 335Q491 320 488 303Q486 323 493 338ZM489 302Q496 285 509 271Q492 283 484 300ZM446 521Q451 536 449 552Q455 535 451 520ZM423 499Q433 512 448 521Q437 509 428 496ZM388 509Q393 520 392 532Q396 518 391 508ZM540 472Q532 485 520 496Q538 489 546 476ZM429 287Q430 277 430 267Q424 276 422 286ZM467 412Q463 401 460 389Q457 403 461 414ZM450 498Q451 513 460 527Q457 513 457 498ZM458 349Q451 335 439 324Q447 337 455 351ZM495 367Q496 348 482 328Q489 347 487 366ZM479 474Q477 487 481 502Q481 488 484 475ZM547 507Q542 516 546 529Q547 519 552 510ZM455 379Q452 370 444 362Q446 371 449 381ZM489 269Q482 256 478 242Q476 259 482 273ZM434 499Q441 518 450 536Q448 516 441 497ZM530 505Q529 516 527 527Q533 516 534 506ZM538 313Q546 299 561 290Q542 297 534 311ZM384 511Q393 528 406 543Q397 526 389 509ZM389 516Q398 528 403 544Q403 525 394 512ZM358 444Q344 448 331 450Q346 453 359 450ZM401 398Q387 387 365 384Q383 391 396 403ZM431 523Q429 534 426 544Q434 535 437 524ZM486 528Q484 540 477 550Q488 541 491 529ZM394 311Q385 301 374 293Q382 303 390 314ZM489 402Q501 394 515 389Q499 391 487 398ZM475 441Q486 448 496 456Q490 442 479 435ZM537 518Q535 532 535 545Q541 533 544 519ZM499 535Q495 549 489 562Q500 550 504 537ZM516 396Q524 388 531 379Q520 384 512 391ZM477 418Q492 411 506 400Q489 405 474 411ZM482 310Q477 299 473 288Q473 300 478 311ZM483 484Q487 493 487 504Q493 490 489 481ZM431 508Q433 528 421 549Q437 528 435 508ZM491 399Q504 385 505 361Q501 382 487 396ZM406 321Q395 305 373 296Q392 307 402 323ZM456 303Q459 283 444 261Q454 283 451 302ZM471 498Q474 514 487 529Q480 513 477 497ZM481 533Q481 552 473 570Q486 552 486 533ZM450 297Q442 285 427 278Q437 289 444 301ZM445 543Q452 556 453 572Q455 554 449 541ZM431 437Q423 446 416 456Q426 449 435 440ZM390 495Q389 510 389 524Q393 510 394 495ZM443 382Q436 369 421 360Q430 372 437 385ZM444 526Q445 541 450 556Q449 541 448 526ZM514 503Q507 515 499 526Q510 517 518 506ZM421 500Q431 508 443 512Q436 502 426 494ZM367 517Q381 523 393 532Q384 517 370 510ZM468 522Q472 535 469 550Q476 534 473 521ZM353 511Q366 510 378 504Q366 506 353 507ZM465 461Q462 474 465 488Q467 475 471 463ZM438 534Q439 545 437 556Q443 545 443 534ZM523 472Q517 484 509 495Q523 487 530 475ZM470 326Q473 316 477 307Q467 315 464 324ZM427 368Q417 355 409 340Q411 360 421 373ZM371 392Q355 381 347 360Q352 386 367 397ZM468 300Q474 291 472 275Q471 288 464 298ZM447 514Q451 533 461 550Q458 531 455 512ZM534 371Q541 363 546 352Q537 359 529 367ZM341 345Q323 338 301 342Q321 342 339 349ZM538 504Q530 513 530 530Q534 517 542 507ZM433 370Q425 360 408 357Q421 363 429 373ZM517 375Q522 362 532 350Q519 360 512 373ZM551 461Q544 470 542 483Q548 473 555 465ZM495 473Q493 488 503 504Q497 488 499 474ZM377 349Q371 342 364 335Q367 345 374 353ZM487 482Q488 494 491 506Q493 494 493 481ZM449 268Q442 260 439 249Q439 263 446 271ZM377 510Q386 519 396 527Q390 516 381 506ZM474 325Q480 316 488 308Q476 313 470 322ZM370 383Q359 381 347 383Q358 387 369 389ZM494 445Q502 451 515 451Q506 447 498 440ZM484 399Q493 393 500 386Q489 388 481 394ZM550 489Q532 498 513 505Q535 504 553 496ZM374 385Q359 379 339 385Q357 384 372 390ZM353 414Q338 405 316 406Q334 411 349 421ZM451 392Q444 381 427 376Q440 384 446 395ZM343 444Q327 444 311 434Q327 450 343 451ZM373 367Q358 359 347 341Q354 365 370 374Z" fill="#f1dfbf" opacity="0.24"/></g>

  <!-- mouth -->
  <path d="M432 466 C440 448 452 440 465 440 C480 440 492 448 498 464 C492 476 480 482 464 482 C450 482 438 478 432 466 Z" fill="#6e6053" filter="url(#b4)"/>
  <path d="M438 466 C448 456 480 454 494 462 C488 474 476 478 464 478 C452 478 444 474 438 466 Z" fill="#4a4038" filter="url(#b2)"/>
  <path d="M440 463 C452 457 478 455 492 459 C484 468 454 470 440 463 Z" fill="#1f1b19" filter="url(#furfine)"/>
  <path d="M452 460.5 C460 458.5 474 457.5 484 458.5" stroke="#d4cdc0" stroke-width="1.6" fill="none" filter="url(#furfine)"/>

  <!-- eyes -->
  <ellipse cx="409.5" cy="399" rx="18.5" ry="17" fill="#4f3423" filter="url(#b2)" opacity=".85"/>
  <ellipse cx="409.5" cy="399" rx="15.5" ry="14.5" fill="url(#eyeg)"/>
  <ellipse cx="414" cy="392" rx="4.2" ry="3" fill="#f4f4f4" transform="rotate(-20 414 392)"/>
  <ellipse cx="514" cy="391.5" rx="19" ry="16" fill="#4f3423" filter="url(#b2)" opacity=".85"/>
  <ellipse cx="514" cy="391.5" rx="16" ry="13.5" fill="url(#eyeg)"/>
  <ellipse cx="507" cy="385.5" rx="4.6" ry="3.2" fill="#f4f4f4" transform="rotate(-20 507 385.5)"/>

  <!-- nose -->
  <path d="M442.5 423 C444 414 454 411.5 464.5 411.5 C475 411.5 485 414 486.5 423 C487 431 478 434 474 438 C470 442 460 442 456 438 C452 434 442 431 442.5 423 Z" fill="#231c1b"/>
  <ellipse cx="464.5" cy="417" rx="13" ry="4" fill="#6a5c57" filter="url(#b2)"/>
  <ellipse cx="452.5" cy="426" rx="5.5" ry="4.2" fill="#070606" filter="url(#b05)"/>
  <ellipse cx="476.5" cy="426" rx="5.5" ry="4.2" fill="#070606" filter="url(#b05)"/>
  <path d="M464.5 432 V448" stroke="#2a2220" stroke-width="1.6"/>
  </g>
</svg>
<!--DOG1-END-->
      <div class="nm" style="left:0;top:400px;background:rgba(20,20,22,.8)">Karsten Winegeart</div>
    </div>
  </div>
  <div id="tile2">
    <!--DOG2-START-->
<svg class="ic" style="left:0;top:0" width="682" height="434" viewBox="808 219.5 682 434">
  <defs>
    <radialGradient id="bg2" cx="45%" cy="45%" r="80%">
      <stop offset="0" stop-color="#c9342d"/>
      <stop offset="0.7" stop-color="#c6322c"/>
      <stop offset="1" stop-color="#c0302a"/>
    </radialGradient>
    <filter id="pfur" color-interpolation-filters="sRGB" filterUnits="userSpaceOnUse" x="808" y="219.5" width="682" height="434">
      <feTurbulence type="fractalNoise" baseFrequency="0.16 0.18" numOctaves="2" seed="4" result="n"/>
      <feDisplacementMap in="SourceGraphic" in2="n" scale="4" xChannelSelector="R" yChannelSelector="G" result="d"/>
      <feGaussianBlur in="d" stdDeviation="0.7"/>
    </filter>
    <filter id="p05" color-interpolation-filters="sRGB" filterUnits="userSpaceOnUse" x="808" y="219.5" width="682" height="434"><feGaussianBlur stdDeviation="0.6"/></filter>
    <filter id="p1" color-interpolation-filters="sRGB" filterUnits="userSpaceOnUse" x="808" y="219.5" width="682" height="434"><feGaussianBlur stdDeviation="1"/></filter>
    <filter id="p2" color-interpolation-filters="sRGB" filterUnits="userSpaceOnUse" x="808" y="219.5" width="682" height="434"><feGaussianBlur stdDeviation="2"/></filter>
    <filter id="p4" color-interpolation-filters="sRGB" filterUnits="userSpaceOnUse" x="808" y="219.5" width="682" height="434"><feGaussianBlur stdDeviation="4"/></filter>
    <filter id="p8" color-interpolation-filters="sRGB" filterUnits="userSpaceOnUse" x="808" y="219.5" width="682" height="434"><feGaussianBlur stdDeviation="8"/></filter>
    <filter id="p14" color-interpolation-filters="sRGB" filterUnits="userSpaceOnUse" x="808" y="219.5" width="682" height="434"><feGaussianBlur stdDeviation="13"/></filter>
    <clipPath id="c2"><rect x="808" y="219.5" width="682" height="434"/></clipPath>
    <clipPath id="csil"><path d="M1002.0 306.0 C1005.2 299.3 1010.0 294.7 1015.0 290.0 C1020.0 285.3 1024.5 283.0 1032.0 278.0 C1039.5 273.0 1049.5 265.3 1060.0 260.0 C1070.5 254.7 1083.0 247.8 1095.0 246.0 C1107.0 244.2 1119.5 247.0 1132.0 249.0 C1144.5 251.0 1157.5 254.8 1170.0 258.0 C1182.5 261.2 1194.5 264.3 1207.0 268.0 C1219.5 271.7 1234.5 276.3 1245.0 280.0 C1255.5 283.7 1262.5 285.8 1270.0 290.0 C1277.5 294.2 1283.0 300.0 1290.0 305.0 C1297.0 310.0 1305.8 315.0 1312.0 320.0 C1318.2 325.0 1323.0 327.5 1327.0 335.0 C1331.0 342.5 1332.5 354.5 1336.0 365.0 C1339.5 375.5 1344.0 386.5 1348.0 398.0 C1352.0 409.5 1359.0 425.0 1360.0 434.0 C1361.0 443.0 1358.0 446.5 1354.0 452.0 C1350.0 457.5 1342.0 463.0 1336.0 467.0 C1330.0 471.0 1322.0 473.5 1318.0 476.0 C1314.0 478.5 1310.8 478.0 1312.0 482.0 C1313.2 486.0 1321.5 492.8 1325.0 500.0 C1328.5 507.2 1331.5 517.0 1333.0 525.0 C1334.5 533.0 1331.2 538.8 1334.0 548.0 C1336.8 557.2 1342.3 568.0 1350.0 580.0 C1357.7 592.0 1371.7 605.0 1380.0 620.0 C1388.3 635.0 1455.0 661.7 1400.0 670.0 C1345.0 678.3 1107.3 674.2 1050.0 670.0 C992.7 665.8 1053.8 653.3 1056.0 645.0 C1058.2 636.7 1061.2 629.2 1063.0 620.0 C1064.8 610.8 1066.5 598.3 1067.0 590.0 C1067.5 581.7 1067.3 576.8 1066.0 570.0 C1064.7 563.2 1063.2 556.0 1059.0 549.0 C1054.8 542.0 1047.5 535.5 1041.0 528.0 C1034.5 520.5 1027.0 511.5 1020.0 504.0 C1013.0 496.5 1006.5 489.0 999.0 483.0 C991.5 477.0 982.5 474.0 975.0 468.0 C967.5 462.0 959.5 454.0 954.0 447.0 C948.5 440.0 944.3 433.5 942.0 426.0 C939.7 418.5 938.5 410.0 940.0 402.0 C941.5 394.0 945.2 385.0 951.0 378.0 C956.8 371.0 966.8 364.5 975.0 360.0 C983.2 355.5 996.5 356.0 1000.0 351.0 C1003.5 346.0 995.7 337.5 996.0 330.0 C996.3 322.5 998.8 312.7 1002.0 306.0 Z"/></clipPath>
    <radialGradient id="iris" cx="50%" cy="45%" r="55%">
      <stop offset="0" stop-color="#140a08"/>
      <stop offset="0.4" stop-color="#24100b"/>
      <stop offset="0.7" stop-color="#57291a"/>
      <stop offset="1" stop-color="#2e140d"/>
    </radialGradient>
  </defs>
  <rect x="808" y="219.5" width="682" height="434" fill="url(#bg2)"/>
  <g clip-path="url(#c2)">
  <!-- body silhouette -->
  <path d="M1002.0 306.0 C1005.2 299.3 1010.0 294.7 1015.0 290.0 C1020.0 285.3 1024.5 283.0 1032.0 278.0 C1039.5 273.0 1049.5 265.3 1060.0 260.0 C1070.5 254.7 1083.0 247.8 1095.0 246.0 C1107.0 244.2 1119.5 247.0 1132.0 249.0 C1144.5 251.0 1157.5 254.8 1170.0 258.0 C1182.5 261.2 1194.5 264.3 1207.0 268.0 C1219.5 271.7 1234.5 276.3 1245.0 280.0 C1255.5 283.7 1262.5 285.8 1270.0 290.0 C1277.5 294.2 1283.0 300.0 1290.0 305.0 C1297.0 310.0 1305.8 315.0 1312.0 320.0 C1318.2 325.0 1323.0 327.5 1327.0 335.0 C1331.0 342.5 1332.5 354.5 1336.0 365.0 C1339.5 375.5 1344.0 386.5 1348.0 398.0 C1352.0 409.5 1359.0 425.0 1360.0 434.0 C1361.0 443.0 1358.0 446.5 1354.0 452.0 C1350.0 457.5 1342.0 463.0 1336.0 467.0 C1330.0 471.0 1322.0 473.5 1318.0 476.0 C1314.0 478.5 1310.8 478.0 1312.0 482.0 C1313.2 486.0 1321.5 492.8 1325.0 500.0 C1328.5 507.2 1331.5 517.0 1333.0 525.0 C1334.5 533.0 1331.2 538.8 1334.0 548.0 C1336.8 557.2 1342.3 568.0 1350.0 580.0 C1357.7 592.0 1371.7 605.0 1380.0 620.0 C1388.3 635.0 1455.0 661.7 1400.0 670.0 C1345.0 678.3 1107.3 674.2 1050.0 670.0 C992.7 665.8 1053.8 653.3 1056.0 645.0 C1058.2 636.7 1061.2 629.2 1063.0 620.0 C1064.8 610.8 1066.5 598.3 1067.0 590.0 C1067.5 581.7 1067.3 576.8 1066.0 570.0 C1064.7 563.2 1063.2 556.0 1059.0 549.0 C1054.8 542.0 1047.5 535.5 1041.0 528.0 C1034.5 520.5 1027.0 511.5 1020.0 504.0 C1013.0 496.5 1006.5 489.0 999.0 483.0 C991.5 477.0 982.5 474.0 975.0 468.0 C967.5 462.0 959.5 454.0 954.0 447.0 C948.5 440.0 944.3 433.5 942.0 426.0 C939.7 418.5 938.5 410.0 940.0 402.0 C941.5 394.0 945.2 385.0 951.0 378.0 C956.8 371.0 966.8 364.5 975.0 360.0 C983.2 355.5 996.5 356.0 1000.0 351.0 C1003.5 346.0 995.7 337.5 996.0 330.0 C996.3 322.5 998.8 312.7 1002.0 306.0 Z" fill="#131415" filter="url(#pfur)"/>
  <g filter="url(#p05)"><path d="M1005 305Q1003 303 1000 304Q1001 306 1003 308ZM1005 302Q1003 303 1000 304Q1003 305 1006 305ZM1016 292Q1015 291 1014 289Q1013 292 1014 294ZM1018 290Q1017 288 1015 286Q1014 290 1016 292ZM1024 286Q1022 283 1020 281Q1019 285 1021 288ZM1028 282Q1026 282 1024 284Q1026 285 1028 285ZM1032 280Q1031 278 1028 277Q1028 280 1030 282ZM1034 280Q1034 278 1033 275Q1031 278 1031 280ZM1044 272Q1044 270 1042 269Q1042 271 1042 273ZM1047 268Q1044 268 1041 267Q1043 271 1046 272ZM1047 268Q1045 269 1043 270Q1046 271 1048 271ZM1053 266Q1052 265 1049 264Q1050 266 1051 268ZM1052 266Q1050 264 1047 262Q1048 266 1051 268ZM1057 265Q1058 264 1058 262Q1056 262 1055 264ZM1067 260Q1068 258 1067 256Q1064 258 1064 259ZM1064 260Q1063 259 1061 258Q1061 260 1061 262ZM1071 256Q1069 254 1065 253Q1067 256 1069 258ZM1077 254Q1076 251 1073 249Q1073 252 1074 255ZM1087 250Q1085 247 1081 245Q1082 248 1084 251ZM1089 251Q1091 248 1092 244Q1089 246 1087 249ZM1094 246Q1091 246 1089 245Q1090 249 1093 250ZM1100 248Q1101 247 1102 245Q1099 246 1099 247ZM1103 247Q1101 244 1099 242Q1099 246 1101 248ZM1120 250Q1122 249 1123 247Q1119 246 1118 247ZM1125 249Q1125 248 1122 246Q1123 248 1123 250ZM1132 251Q1132 248 1131 245Q1130 248 1129 251ZM1140 253Q1142 251 1142 247Q1139 249 1137 251ZM1145 254Q1146 251 1144 247Q1144 250 1143 253ZM1151 255Q1151 253 1151 251Q1148 252 1147 254ZM1160 257Q1161 255 1159 251Q1158 254 1158 257ZM1162 257Q1161 254 1161 252Q1158 255 1158 257ZM1168 260Q1169 256 1168 252Q1166 255 1165 259ZM1170 259Q1169 257 1168 254Q1167 257 1168 260ZM1181 262Q1181 260 1180 257Q1177 260 1177 263ZM1180 262Q1180 260 1180 258Q1177 260 1176 262ZM1189 265Q1190 263 1190 261Q1189 262 1187 264ZM1206 269Q1204 266 1201 265Q1202 268 1204 270ZM1213 270Q1211 268 1208 267Q1208 270 1209 272ZM1216 272Q1216 269 1214 265Q1213 269 1213 272ZM1229 277Q1230 275 1230 272Q1228 274 1226 275ZM1238 279Q1237 276 1233 274Q1234 277 1235 280ZM1245 280Q1243 278 1241 277Q1240 281 1242 283ZM1245 283Q1247 281 1246 276Q1244 278 1242 281ZM1253 286Q1256 284 1257 280Q1254 282 1251 283ZM1264 288Q1263 286 1260 284Q1259 287 1260 289ZM1264 291Q1266 290 1268 288Q1266 288 1264 288ZM1264 289Q1264 286 1262 282Q1261 285 1260 288ZM1273 294Q1274 292 1274 289Q1272 291 1271 293ZM1285 304Q1286 302 1287 300Q1284 300 1282 302ZM1286 306Q1288 305 1291 303Q1288 303 1286 303ZM1297 312Q1298 309 1298 305Q1296 308 1295 311ZM1304 318Q1306 318 1308 317Q1306 315 1304 315ZM1308 318Q1308 316 1306 314Q1304 316 1304 318ZM1326 338Q1329 337 1332 335Q1328 335 1325 335ZM1329 352Q1330 353 1332 353Q1332 350 1331 349ZM1331 356Q1333 356 1335 355Q1333 354 1331 354ZM1334 363Q1335 362 1336 359Q1334 360 1332 361ZM1335 367Q1336 364 1335 361Q1334 363 1333 365ZM1337 374Q1339 374 1339 371Q1337 371 1336 371ZM1339 380Q1341 379 1342 376Q1339 376 1338 376ZM1342 386Q1344 385 1346 382Q1343 382 1340 383ZM1341 384Q1343 383 1344 382Q1341 381 1340 382ZM1346 398Q1348 398 1349 396Q1347 396 1345 396ZM1347 398Q1349 396 1351 392Q1347 394 1345 396ZM1348 404Q1351 403 1354 402Q1350 401 1347 401ZM1348 405Q1351 405 1354 403Q1351 402 1348 401ZM1351 413Q1353 413 1356 411Q1354 410 1351 410ZM1353 417Q1354 417 1356 416Q1354 414 1352 414ZM1354 418Q1356 417 1356 414Q1354 415 1352 417ZM1358 434Q1361 432 1363 429Q1360 430 1357 431ZM1358 444Q1359 444 1361 442Q1358 441 1357 441ZM1354 449Q1356 450 1359 450Q1357 448 1355 446ZM1351 454Q1353 453 1355 451Q1352 451 1350 452ZM1343 459Q1344 461 1347 462Q1347 459 1347 457ZM1346 457Q1349 459 1351 459Q1350 457 1348 455ZM1344 461Q1347 461 1350 461Q1348 458 1345 457ZM1339 461Q1339 463 1341 466Q1342 464 1342 462ZM1332 468Q1334 469 1338 468Q1336 467 1333 465ZM1313 487Q1314 485 1315 484Q1312 484 1311 485ZM1316 490Q1317 489 1317 487Q1315 488 1314 489ZM1322 499Q1324 499 1326 497Q1323 496 1321 496ZM1325 502Q1326 499 1325 495Q1323 498 1322 500ZM1326 506Q1327 506 1329 504Q1326 504 1325 504ZM1328 514Q1331 514 1335 511Q1331 512 1328 512ZM1061 638Q1060 637 1056 637Q1057 639 1058 641ZM1064 625Q1063 624 1061 624Q1062 626 1063 627ZM1065 621Q1063 621 1062 622Q1063 623 1065 623ZM1065 620Q1062 619 1059 619Q1061 622 1064 623ZM1067 615Q1066 613 1065 611Q1064 614 1065 616ZM1067 604Q1064 606 1063 609Q1066 608 1068 607ZM1067 600Q1064 602 1063 605Q1067 605 1069 603ZM1069 581Q1068 581 1066 582Q1068 583 1069 583ZM1069 575Q1066 575 1064 577Q1067 579 1069 578ZM1069 571Q1065 570 1062 571Q1065 572 1068 573ZM1066 562Q1064 563 1063 564Q1066 565 1067 564ZM1059 546Q1057 547 1055 547Q1058 549 1060 548ZM1038 522Q1037 523 1036 526Q1038 525 1040 523ZM1036 519Q1034 520 1033 523Q1035 522 1037 520ZM1034 516Q1031 518 1030 522Q1033 521 1036 519ZM1033 516Q1032 517 1032 519Q1034 519 1035 518ZM1028 512Q1028 514 1029 517Q1032 514 1031 511ZM1026 507Q1023 508 1022 511Q1024 510 1027 509ZM1022 503Q1020 504 1017 508Q1020 506 1023 506ZM1019 500Q1018 502 1016 504Q1019 504 1021 502ZM1013 496Q1014 498 1015 499Q1017 497 1016 495ZM1014 494Q1011 496 1011 500Q1013 498 1016 496ZM1014 493Q1012 494 1011 496Q1014 497 1015 497ZM1008 488Q1006 489 1004 491Q1007 491 1009 491ZM1005 486Q1004 487 1002 489Q1005 489 1007 487ZM999 481Q998 484 998 488Q1000 485 1002 483ZM999 481Q998 485 1000 488Q1001 485 1002 482ZM996 477Q993 478 990 482Q994 481 997 480ZM992 475Q990 477 988 480Q992 480 994 478ZM992 477Q992 479 995 481Q995 479 995 476ZM984 472Q983 475 985 478Q986 475 987 473ZM981 470Q981 472 982 475Q984 473 985 471ZM977 468Q977 470 977 473Q979 470 979 468ZM966 456Q964 456 962 457Q964 459 966 458ZM964 458Q965 460 967 462Q968 460 968 457ZM956 445Q954 446 952 448Q955 449 957 449ZM954 445Q953 446 954 448Q956 446 956 445ZM951 440Q950 442 949 445Q951 443 953 442ZM948 437Q947 439 948 443Q950 441 952 439ZM947 432Q945 433 943 434Q946 436 948 436ZM946 431Q945 431 943 432Q945 433 946 433ZM943 421Q941 421 940 423Q942 424 943 424ZM942 418Q940 418 939 420Q941 421 943 421ZM942 413Q939 413 937 414Q939 416 942 416ZM942 409Q939 409 936 410Q938 412 941 413ZM942 406Q940 406 937 407Q939 408 941 408ZM942 404Q940 404 938 406Q940 406 942 407ZM941 402Q940 403 938 404Q940 406 942 406ZM945 390Q943 391 941 393Q943 393 945 393ZM960 374Q960 372 959 369Q958 371 958 373ZM963 369Q960 369 957 369Q959 371 962 372ZM966 369Q965 367 963 365Q963 367 963 369ZM971 365Q970 362 968 360Q968 363 969 366ZM971 364Q970 363 968 363Q969 364 970 366ZM973 363Q971 362 969 360Q970 363 971 365ZM986 359Q987 357 985 354Q984 356 983 358ZM986 357Q983 356 980 357Q982 359 985 360ZM989 358Q989 356 987 354Q986 356 986 358ZM1002 340Q999 339 995 340Q998 343 1001 344ZM999 337Q997 338 996 340Q999 341 1001 340ZM998 330Q996 330 993 331Q995 332 998 332ZM999 328Q996 327 994 327Q996 331 998 331ZM999 319Q996 320 993 323Q996 323 999 323Z" fill="#141516" opacity="1"/><path d="M1010 300Q1009 297 1007 295Q1007 298 1007 300ZM1012 297Q1011 295 1010 294Q1008 296 1009 298ZM1014 292Q1013 292 1010 293Q1012 295 1013 295ZM1022 288Q1020 285 1019 283Q1018 286 1019 289ZM1027 283Q1026 281 1021 280Q1023 283 1025 285ZM1037 276Q1034 274 1030 274Q1033 277 1035 279ZM1040 276Q1040 272 1037 269Q1037 273 1037 276ZM1040 274Q1038 274 1036 275Q1037 277 1039 277ZM1046 270Q1045 269 1043 269Q1043 271 1044 272ZM1070 258Q1069 255 1068 252Q1066 255 1067 259ZM1074 255Q1073 253 1071 251Q1070 255 1072 257ZM1081 251Q1078 250 1075 249Q1077 252 1080 254ZM1084 251Q1083 249 1082 247Q1081 250 1081 252ZM1095 249Q1097 247 1097 244Q1095 246 1093 247ZM1114 249Q1116 246 1117 243Q1112 244 1111 247ZM1112 249Q1113 247 1113 245Q1110 245 1109 247ZM1118 248Q1117 246 1116 244Q1114 247 1114 249ZM1121 249Q1121 246 1121 244Q1119 246 1119 249ZM1135 251Q1134 248 1134 245Q1132 248 1132 251ZM1133 252Q1135 251 1135 249Q1133 249 1132 250ZM1142 252Q1141 251 1139 250Q1139 252 1140 253ZM1154 256Q1155 254 1157 251Q1154 253 1152 255ZM1156 257Q1157 254 1158 251Q1154 253 1153 256ZM1173 261Q1174 258 1174 255Q1171 257 1170 260ZM1174 261Q1174 259 1172 258Q1171 259 1171 261ZM1187 265Q1188 263 1187 259Q1186 262 1185 264ZM1186 263Q1185 262 1184 260Q1182 262 1182 264ZM1193 267Q1195 264 1195 260Q1192 262 1190 265ZM1199 268Q1200 267 1200 264Q1198 265 1197 267ZM1201 268Q1201 266 1199 265Q1198 266 1197 268ZM1204 270Q1207 269 1210 267Q1206 267 1203 268ZM1214 272Q1214 269 1212 267Q1210 269 1210 271ZM1216 272Q1216 270 1214 268Q1213 270 1213 272ZM1225 276Q1226 275 1226 273Q1224 273 1223 275ZM1222 274Q1222 272 1220 270Q1219 272 1219 274ZM1230 278Q1233 277 1235 274Q1232 275 1229 276ZM1241 279Q1239 276 1236 274Q1236 277 1237 281ZM1248 285Q1250 284 1251 282Q1249 281 1247 281ZM1248 284Q1250 282 1250 279Q1248 280 1246 282ZM1256 287Q1258 285 1260 283Q1256 283 1254 284ZM1259 287Q1261 285 1261 282Q1259 284 1257 286ZM1267 291Q1268 288 1271 286Q1267 287 1265 289ZM1273 294Q1274 293 1275 290Q1272 291 1270 292ZM1275 296Q1277 293 1278 291Q1274 292 1273 294ZM1278 299Q1279 298 1280 296Q1278 296 1277 296ZM1282 303Q1285 302 1287 300Q1284 298 1281 299ZM1292 307Q1291 305 1287 304Q1287 306 1288 308ZM1296 313Q1299 312 1302 311Q1298 308 1295 309ZM1301 314Q1301 312 1300 310Q1299 312 1299 314ZM1308 320Q1310 318 1312 316Q1309 317 1307 318ZM1310 321Q1311 318 1311 315Q1309 317 1307 319ZM1314 324Q1315 322 1316 319Q1314 320 1312 322ZM1318 325Q1317 323 1314 322Q1314 325 1315 327ZM1317 329Q1321 328 1324 326Q1321 325 1317 325ZM1321 330Q1323 328 1323 325Q1321 326 1319 328ZM1324 333Q1326 331 1327 328Q1324 329 1321 331ZM1326 337Q1328 335 1329 331Q1326 333 1324 335ZM1324 336Q1326 337 1328 337Q1327 335 1325 334ZM1327 337Q1328 335 1327 333Q1325 334 1324 336ZM1326 343Q1328 343 1331 343Q1330 340 1328 339ZM1328 342Q1330 340 1332 338Q1329 338 1327 340ZM1329 347Q1330 347 1332 346Q1331 345 1329 345ZM1328 347Q1331 347 1335 345Q1332 344 1329 343ZM1333 362Q1336 360 1338 359Q1334 357 1332 358ZM1333 362Q1336 361 1339 358Q1335 358 1332 358ZM1337 371Q1338 368 1335 364Q1335 367 1334 371ZM1340 382Q1343 381 1345 379Q1342 379 1339 380ZM1342 389Q1345 389 1348 390Q1345 387 1342 387ZM1352 413Q1354 411 1354 407Q1351 408 1349 410ZM1354 421Q1356 421 1357 418Q1355 418 1353 418ZM1355 425Q1358 425 1361 424Q1358 422 1355 422ZM1357 427Q1359 426 1360 423Q1357 423 1355 425ZM1359 430Q1360 428 1359 425Q1357 426 1355 429ZM1359 438Q1361 437 1363 435Q1360 434 1357 436ZM1357 441Q1359 443 1360 444Q1361 441 1359 439ZM1356 445Q1358 446 1362 446Q1360 444 1358 442ZM1352 452Q1354 452 1356 452Q1355 449 1353 449ZM1350 454Q1352 455 1354 454Q1353 452 1352 451ZM1347 457Q1350 457 1352 457Q1350 455 1348 455ZM1341 462Q1343 463 1345 464Q1344 461 1342 459ZM1336 465Q1337 466 1339 466Q1339 464 1339 463ZM1328 470Q1329 471 1331 471Q1331 469 1330 468ZM1326 470Q1326 473 1330 476Q1329 473 1328 469ZM1323 471Q1324 474 1325 476Q1326 473 1325 470ZM1320 473Q1322 475 1325 477Q1324 473 1323 471ZM1312 477Q1314 479 1316 480Q1316 477 1315 475ZM1309 483Q1311 484 1315 483Q1313 481 1311 480ZM1320 493Q1319 490 1315 488Q1316 491 1316 494ZM1323 502Q1325 502 1327 502Q1325 500 1323 500ZM1327 509Q1329 507 1328 504Q1327 506 1325 507ZM1327 510Q1330 509 1331 505Q1328 506 1326 508ZM1330 519Q1331 518 1332 515Q1330 515 1328 515ZM1061 635Q1059 635 1057 638Q1059 638 1061 638ZM1062 629Q1059 630 1056 631Q1060 633 1063 632ZM1066 616Q1063 616 1061 618Q1063 619 1065 619ZM1067 611Q1065 611 1063 611Q1064 613 1065 614ZM1068 608Q1065 607 1062 606Q1064 609 1066 611ZM1069 599Q1066 598 1062 598Q1065 600 1067 602ZM1069 596Q1066 596 1062 597Q1065 598 1068 599ZM1069 593Q1066 592 1063 593Q1065 595 1068 596ZM1070 586Q1069 584 1067 582Q1067 585 1068 587ZM1069 583Q1066 584 1064 587Q1067 586 1070 585ZM1069 571Q1065 571 1062 573Q1065 575 1068 575ZM1067 565Q1064 565 1061 568Q1064 569 1068 568ZM1065 560Q1063 562 1060 565Q1064 564 1067 563ZM1065 556Q1062 556 1060 558Q1063 559 1065 559ZM1064 554Q1062 554 1060 556Q1062 557 1065 557ZM1062 551Q1060 552 1059 554Q1062 554 1063 552ZM1055 541Q1053 543 1053 547Q1056 545 1057 543ZM1055 540Q1053 542 1052 544Q1054 543 1056 542ZM1053 536Q1050 535 1048 535Q1050 538 1052 539ZM1049 534Q1048 535 1048 539Q1050 537 1051 536ZM1047 531Q1045 532 1043 533Q1046 534 1048 534ZM1042 525Q1039 527 1038 529Q1041 530 1044 528ZM1044 527Q1042 527 1040 528Q1042 529 1044 529ZM1041 525Q1040 527 1040 529Q1042 529 1044 527ZM1030 511Q1028 512 1026 513Q1028 514 1030 513ZM1029 509Q1027 507 1025 506Q1026 509 1027 510ZM1023 505Q1022 507 1023 509Q1025 508 1026 506ZM1009 488Q1007 489 1005 490Q1008 492 1010 491ZM1003 484Q1002 485 1000 487Q1004 488 1006 486ZM988 473Q987 475 986 477Q989 477 990 475ZM979 468Q978 470 978 472Q981 472 982 471ZM975 466Q974 467 975 470Q977 469 978 467ZM971 464Q971 465 972 467Q975 465 975 464ZM968 460Q967 463 967 466Q970 464 972 462ZM971 461Q969 462 966 462Q969 464 972 463ZM963 454Q961 456 961 460Q963 458 965 456ZM959 450Q958 452 956 454Q960 454 961 452ZM951 439Q948 440 946 441Q949 442 952 441ZM945 428Q942 430 939 432Q943 431 946 430ZM941 415Q939 417 938 419Q941 419 943 418ZM942 399Q941 400 939 402Q941 402 942 402ZM945 393Q943 392 940 392Q941 395 943 396ZM945 392Q942 392 939 394Q942 394 945 394ZM948 387Q948 384 948 381Q946 384 946 388ZM947 387Q945 386 942 386Q944 389 946 390ZM951 382Q949 381 948 380Q948 383 949 384ZM953 379Q952 378 951 377Q950 379 951 381ZM955 375Q952 374 949 372Q951 377 954 379ZM960 373Q959 370 955 368Q955 371 956 374ZM964 369Q963 368 960 367Q960 369 961 371ZM979 361Q978 358 978 354Q976 358 977 361ZM995 356Q993 353 990 352Q991 355 992 358ZM999 355Q999 353 996 351Q996 353 997 355ZM1001 352Q998 351 994 353Q996 354 999 355ZM1003 348Q1000 348 998 349Q1000 352 1002 352ZM1003 345Q1001 345 999 345Q1001 347 1003 347ZM1001 340Q998 341 994 342Q999 344 1002 343ZM999 332Q998 331 995 331Q996 333 997 334ZM999 322Q996 322 992 321Q995 325 999 326ZM1001 314Q998 314 996 316Q999 316 1001 316ZM1003 309Q1000 308 996 308Q999 310 1002 312ZM1003 307Q1000 307 997 307Q1000 310 1003 311Z" fill="#0f1011" opacity="1"/></g>
  <g clip-path="url(#csil)">
    <!-- sheen highlights -->
    <ellipse cx="1225" cy="455" rx="50" ry="22" fill="#353938" filter="url(#p14)" transform="rotate(-35 1225 455)" opacity=".9"/>
    <ellipse cx="1185" cy="520" rx="70" ry="16" fill="#303433" filter="url(#p14)" transform="rotate(-30 1185 520)" opacity=".9"/>
    <ellipse cx="1150" cy="300" rx="60" ry="16" fill="#2a2d2d" filter="url(#p14)" transform="rotate(-12 1150 300)" opacity=".9"/>
    <ellipse cx="1215" cy="345" rx="40" ry="18" fill="#272a2a" filter="url(#p14)" transform="rotate(25 1215 345)" opacity=".9"/>
    <ellipse cx="1110" cy="455" rx="22" ry="50" fill="#2c2f2f" filter="url(#p14)" transform="rotate(-15 1110 455)" opacity=".9"/>
    <ellipse cx="1192" cy="456" rx="18" ry="13" fill="#0c0d0d" filter="url(#p8)" opacity=".9"/>
    <ellipse cx="1275" cy="405" rx="16" ry="34" fill="#0a0b0b" filter="url(#p8)" opacity=".9"/>
    <!-- neck brownish -->
    <ellipse cx="1200" cy="592" rx="110" ry="28" fill="#38332e" filter="url(#p14)" transform="rotate(-28 1200 592)" opacity=".95"/>
    <ellipse cx="1120" cy="632" rx="60" ry="26" fill="#2f2c29" filter="url(#p14)" opacity=".9"/>
    <ellipse cx="1302" cy="520" rx="20" ry="40" fill="#38342f" filter="url(#p8)" opacity=".9"/>
    <!-- dark band under jaw -->
    <ellipse cx="1130" cy="560" rx="90" ry="16" fill="#0b0c0d" filter="url(#p8)" transform="rotate(-20 1130 560)"/>
    <ellipse cx="1082" cy="556" rx="26" ry="18" fill="#3b332e" filter="url(#p8)" opacity=".9"/>
    <g fill="none" stroke-linecap="round" filter="url(#p05)"><path d="M1230 514l6 9M1200 481l14 12M1145 424l13 8M1121 497l2 11M1164 537l-7 4M1117 515l7 14M1146 300l8 -12M1213 494l10 8M1239 535l-16 11M1212 471l13 6M1227 484l9 5M1070 288l-1 -10M1160 542l-9 10M1194 501l11 14M1126 455l10 13M1165 513l9 16M1148 323l6 -7M1170 489l9 9M1064 283l-6 -15M1066 546l-1 10M1242 435l7 4M1209 315l15 -13M1232 298l9 -6M1167 553l-19 6M1161 488l5 10M1087 298l0 -18M1156 524l-16 12M1218 515l18 7M1196 282l12 -7M1139 341l9 -8M1241 505l13 7M1122 413l12 7M1086 445l2 9M1237 372l14 -5M1145 553l-8 6M1167 462l14 12M1245 352l9 -2M1262 478l17 9M1130 520l-7 4M1111 491l2 12M1167 507l8 16M1200 480l13 8M1127 555l-8 5M1080 306l-1 -10M1087 467l-4 11M1251 345l17 -6M1194 287l13 -7M1219 352l12 -6M1136 521l-12 5M1178 340l10 -7M1117 489l5 10M1088 291l-1 -11M1185 489l5 7M1128 518l4 10M1139 459l12 14M1192 307l12 -10M1122 498l6 9M1220 298l10 -5M1188 292l10 -8M1052 317l-4 -9M1171 307l7 -3M1107 281l3 -11M1147 491l9 9M1113 491l1 10M1157 490l6 6M1144 467l9 13M1107 293l0 -14M1225 461l8 2M1159 550l-10 5M1108 273l-1 -15M1103 297l3 -14M1276 490l17 8M1238 438l18 5M1123 426l6 5M1109 487l5 12M1130 528l-17 9M1099 465l2 9M1113 524l-11 4M1153 474l14 13M1255 451l11 3M1214 469l7 5M1098 308l6 -17M1128 543l-13 7M1107 530l-10 4M1161 325l14 -10M1221 503l8 6M1093 290l-2 -16M1189 354l15 -2M1215 456l18 6M1156 523l-8 4M1221 460l12 4M1177 543l-15 7M1201 502l13 11M1174 339l14 -7M1229 291l9 -10M1155 563l-16 4M1125 422l15 10M1243 352l18 -3M1110 482l3 8M1218 347l13 -5M1103 304l3 -8M1101 432l3 18M1215 329l10 -2M1219 440l17 6M1192 496l14 11M1191 501l12 13M1182 304l14 -8M1108 457l4 18M1114 314l5 -12M1202 487l14 12M1110 555l-15 7M1128 476l2 16M1222 358l15 -3M1122 323l6 -11M1204 289l12 -7M1113 298l3 -11M1178 532l-11 8M1159 545l-17 8M1199 503l12 14M1132 305l8 -13M1016 310l-7 -11M1101 464l4 12M1194 358l9 -2M1179 533l-13 6M1124 524l-12 7M1154 489l8 13M1099 443l3 12M1195 338l8 -2M1057 282l-2 -13M1178 284l16 -12M1138 464l7 9M1241 363l8 -1M1140 545l-13 7M1110 473l4 9M1112 474l6 15M1128 526l-9 2M1165 500l10 13M1097 472l-0 14M1232 360l8 -3M1216 336l13 -1M1137 277l6 -15M1089 439l1 17M1152 474l12 15M1255 372l17 2M1135 411l11 9M1249 476l8 4M1105 305l1 -9M1199 522l-15 13M1226 349l9 -1M1245 406l17 0M1227 503l8 10M1189 509l7 10M1134 529l-10 8M1115 273l4 -8M1235 487l15 9M1165 539l-16 8M1229 441l13 4M1082 311l-4 -19M1143 375l19 -3M1119 481l5 17M1242 357l20 -2M1111 278l1 -16M1112 476l3 14M1199 503l6 5M1169 531l-16 11M1126 479l4 14M1217 442l14 10M1139 266l2 -9M1228 457l8 4M1218 365l11 1M1222 416l8 2M1173 318l13 -10M1092 287l2 -15M1200 475l5 7M1209 474l7 5M1109 318l7 -15M1075 437l-0 11M1231 452l11 6M1176 347l16 -4M1243 447l16 4M1245 356l12 -2M1133 478l5 12M1194 474l11 8M1186 519l8 9M1251 464l16 10M1235 366l15 -2M1249 493l7 6M1110 311l4 -10M1049 304l-6 -10M1149 310l8 -13M1133 490l3 11M1179 497l14 12M1199 509l7 10M1243 496l12 8M1089 501l-3 12M1112 454l10 16M1118 307l8 -16M1156 544l-14 5M1215 497l16 12M1238 462l13 7M1193 281l14 -11M1069 498l-8 17M1335 457l17 4M1123 466l5 19M1030 309l-7 -11M1078 282l-6 -17M1245 376l9 1M1195 322l13 -8M1080 547l-13 7M1170 546l-13 6M1134 300l7 -9M1173 304l13 -14M1180 309l6 -6M1178 504l11 13M1208 450l11 5M1183 424l12 6M1107 485l3 11M1101 464l2 16M1189 280l10 -10M1196 529l-7 8M1150 301l9 -8M1110 578l-9 6M1263 481l14 6M1251 455l14 6M1159 552l-9 5M1197 492l11 15M1172 298l12 -9M1237 499l9 11M1221 457l10 7M1180 558l-13 10M1244 441l10 1M1190 329l10 -4M1092 294l2 -17M1256 364l15 -3M1111 511l3 12M1222 488l14 8M1250 351l8 -3M1175 560l-12 8M1268 445l8 1M1219 443l10 4M1224 350l13 -3M1255 438l13 6M1251 447l17 7M1157 468l5 9M1165 488l9 8M1065 330l-0 -17M1170 292l6 -6M1169 551l-12 10M1193 389l9 -1M1100 313l-2 -12M1116 433l7 11M1064 292l-2 -8M1157 299l6 -9M1113 507l10 16M1169 453l8 8M1075 294l-7 -18M1187 497l15 11M1104 507l5 10M1080 284l1 -14M1107 466l2 10M1151 534l-13 9M1127 432l5 7M1175 503l8 13M1057 318l-5 -9M1168 555l-18 8M1241 475l16 10M1098 477l4 19M1099 277l4 -11M1130 530l-8 4M1093 292l-0 -11M1190 560l-16 11M1126 313l8 -17M1221 366l18 3M1112 467l7 15M1203 516l8 13M1204 454l9 5M1192 494l9 8M1185 521l-10 4M1233 535l-8 4M1210 537l-13 9M1222 459l9 4M1198 500l10 10M1060 468l-2 10M1124 297l4 -14M1174 291l7 -6M1232 494l8 10M1170 482l10 12M1042 296l-4 -7M1058 282l-5 -19M1233 311l17 -5M1219 433l9 2M1099 513l0 9M1129 475l10 13M1110 581l-10 10M1094 452l1 11M1150 488l12 15M1164 559l-15 2M1222 436l14 3M1214 524l-15 9M1187 510l6 7M1226 344l8 -3M1121 538l-14 7M1062 341l-8 -18M1187 506l10 15M1201 477l13 8M1176 557l-7 5M1132 280l11 -15M1219 445l9 3M1144 300l9 -16M1166 474l10 15M1192 347l13 -4M1129 457l9 17M1304 441l19 4M1218 507l10 10M1160 526l-14 13M1206 475l13 9M1235 324l11 -3M1186 511l8 13M1129 434l8 14M1118 469l8 14M1201 490l13 10M1084 330l1 -19M1208 325l15 -4M1127 443l10 11M1208 518l12 12M1236 489l7 5M1114 443l5 10M1135 512l6 13M1157 419l13 5M1154 566l-9 8M1152 430l13 14M1094 294l4 -19M1251 439l9 3M1224 502l6 6M1136 574l-12 9M1252 516l8 6M1050 287l-8 -18M1218 351l15 -1M1150 338l13 -7M1141 297l8 -8M1247 297l11 -8M1039 294l-13 -12M1074 433l-3 12M1126 326l7 -12M1177 342l10 -1M1102 569l-9 7M1212 422l17 7M1211 321l11 -6M1037 302l-7 -10M1090 295l1 -14M1195 481l15 12M1206 511l12 10M1146 543l-19 7M1252 429l12 3M1175 312l7 -5M1121 467l4 8M1243 511l8 11M1231 441l12 5M1085 452l1 16M1159 338l16 -12M1107 462l2 8M1170 505l4 7M1266 480l15 4M1215 468l8 5M1094 467l1 12M1196 542l-9 5M1153 513l5 8M1226 463l10 6M1123 548l-15 6M1171 437l11 5M1252 503l15 10M1254 371l8 -4M1106 568l-10 2M1211 472l9 7M1111 494l3 9M1238 478l16 8M1271 491l7 5M1201 329l16 -5M1298 486l11 10M1258 358l10 -3M1149 551l-9 6M1112 305l3 -9M1224 284l8 -9M1217 362l10 -3M1105 461l3 20M1190 521l-14 7M1113 481l2 14M1184 355l9 -1M1066 311l0 -10M1097 304l1 -17M1209 275l10 -7M1079 325l-2 -18M1188 537l-10 5M1167 524l-13 7M1115 532l-11 7M1134 297l4 -7M1158 280l6 -6M1097 472l4 16M1165 516l6 10M1143 297l3 -11M1101 570l-10 5M1178 521l-7 7M1151 547l-9 4M1182 476l6 6M1171 498l5 10M1176 505l7 7M1216 363l12 -1M1130 476l6 12M1178 508l9 11M1139 473l4 8M1320 390l20 -3M1112 497l2 11M1318 469l16 8M1313 442l10 2M1173 540l-6 6M1155 480l10 10M1225 499l10 9M1163 288l8 -9M1151 285l8 -10M1241 467l15 10M1217 486l8 7M1076 279l1 -13M1146 433l12 8M1294 460l12 3M1190 512l9 10M1113 572l-9 7M1213 486l10 8M1235 452l15 6M1241 363l13 -6M1146 281l7 -13M1210 514l10 6M1181 473l10 10M1176 502l6 11M1219 285l6 -6M1248 466l7 7M1122 420l11 9M1213 459l14 9M1202 490l11 12M1169 298l10 -11M1243 349l16 0M1181 295l12 -10M1064 328l-6 -17M1084 338l0 -15M1231 336l12 -7M1175 521l-8 2M1221 539l-16 10M1068 298l1 -10M1101 277l-1 -13M1230 490l11 11M1162 536l-16 11M1226 432l13 3M1120 466l10 15M1140 570l-17 10M1249 412l14 4M1113 574l-12 5M1096 448l3 11M1134 448l11 12M1071 303l-3 -14M1114 534l-15 5M1169 329l11 -9M1196 507l6 6M1159 316l10 -9M1242 413l8 1M1079 304l-5 -15M1248 470l13 7M1189 283l14 -13M1170 352l9 -3M1139 493l6 13M1176 497l6 6M1213 458l14 6M1228 486l9 4M1130 459l8 17M1100 436l4 12M1322 467l19 3M1189 496l10 8M1246 383l18 1M1156 290l6 -8M1239 358l17 -3M1223 499l9 3M1238 352l10 -1M1181 505l11 6M1133 317l10 -11M1091 454l0 9M1135 410l9 4M1103 453l1 9M1287 454l18 5M1105 314l4 -11M1113 320l6 -9M1153 526l-8 4M1214 529l-13 6M1156 317l12 -9M1244 365l13 -2M1104 295l3 -13M1165 509l5 7M1207 286l14 -14M1218 502l11 10M1248 372l15 1M1193 358l12 -3M1220 344l14 -4M1076 465l-1 12M1088 317l0 -15M1170 534l-8 6M1232 474l15 8M1182 414l11 2M1142 315l5 -9M1148 552l-17 7M1107 458l5 12M1262 494l11 8M1177 508l5 9M1331 398l16 -3M1188 483l11 10M1112 310l2 -10M1138 301l7 -8M1112 445l7 10M1248 446l10 4M1191 344l10 -4M1123 546l-14 7M1174 492l9 11M1171 437l13 5M1181 319l15 -8M1201 294l12 -7M1120 415l14 14M1151 288l9 -8M1093 338l2 -15M1214 332l12 -8M1190 524l-16 10M1068 310l-1 -11M1141 471l8 11M1215 320l13 -7M1086 329l4 -18M1220 499l7 4M1256 462l13 8M1191 288l11 -9M1236 450l8 3M1140 453l6 8M1112 317l8 -16M1107 610l-15 5M1103 318l7 -16M1169 305l11 -12M1238 493l9 7M1244 445l15 4M1092 267l-4 -19M1213 541l-13 7M1238 429l11 10M1114 507l4 19M1192 527l-8 6M1213 437l8 4M1232 458l9 4M1158 433l10 7M1139 509l1 14M1216 524l-10 5M1135 442l10 10M1121 460l8 14M1194 338l10 -4M1151 514l11 14M1131 270l7 -18M1088 299l-1 -11M1138 298l12 -16M1218 499l6 7M1222 331l12 -5M1144 292l8 -15M1087 555l-8 7M1219 331l8 -5M1169 278l9 -7M1142 528l-17 9M1222 508l15 13M1097 301l3 -16M1220 343l17 -7M1148 512l8 18M1184 310l11 -11M1118 471l2 9M1145 509l6 13M1203 469l8 6M1216 483l7 5M1229 413l15 6M1220 354l19 -3M1135 562l-12 10M1212 343l9 -3M1236 461l17 6M1069 307l-3 -15M1049 285l-5 -8M1238 413l10 6M1112 465l5 10M1187 542l-9 7M1183 315l11 -7M1136 286l13 -12M1122 550l-11 8M1125 324l10 -11M1243 446l15 7M1220 421l10 2M1176 490l8 12M1232 503l7 7M1305 481l16 4M1230 420l11 7M1237 363l14 1M1200 362l16 -2M1141 425l13 8M1265 469l16 6M1237 338l18 -5M1221 364l16 1M1194 344l8 -1M1152 312l14 -11M1123 296l6 -16M1176 303l7 -9M1115 450l7 10M1179 272l9 -10M1141 448l7 9M1176 498l13 15M1134 311l5 -9M1178 517l9 10M1193 503l7 5M1233 425l17 7M1265 339l14 -5M1079 574l-3 8M1267 461l9 5M1104 450l6 17M1140 293l11 -14M1136 414l12 4M1216 537l-14 9M1232 338l9 -5M1108 291l0 -14M1266 473l11 6M1170 529l-8 3M1089 442l1 19M1141 522l-13 5M1151 485l10 13M1152 298l11 -10M1209 358l18 0M1122 296l4 -9M1236 430l16 5M1215 371l10 0M1202 350l17 -7M1198 488l8 5M1221 446l8 5M1244 447l8 1M1204 496l10 2M1130 444l8 10M1230 508l12 15M1207 346l16 -8M1244 500l11 7M1100 440l5 12M1077 302l-2 -19M1108 440l6 12M1219 483l5 8M1126 474l7 15M1172 297l12 -15M1081 302l-4 -15M1165 551l-17 4M1243 338l19 -1M1222 460l13 7M1192 285l6 -7M1144 305l5 -9M1111 500l3 18M1178 488l5 7M1175 337l8 -6M1259 471l15 4M1216 291l10 -6M1024 307l-5 -10M1085 292l0 -10M1203 337l12 -5M1218 515l12 14M1183 328l15 -6M1031 298l-8 -7M1205 289l8 -8M1266 489l10 6M1115 484l3 13M1191 347l13 -5M1100 320l1 -10M1091 479l3 11M1122 485l3 11M1090 332l1 -10M1123 487l5 17M1025 337l-8 -8M1076 451l-3 12M1051 288l-4 -10M1205 504l9 8M1074 479l-0 16M1214 340l17 -5M1130 298l6 -13M1185 267l14 -14M1118 545l-10 14M1003 339l-14 -5M1200 509l7 6M1220 294l9 -8M1181 523l-14 9M1080 287l-0 -18M1210 318l9 -11M1125 421l10 10M1234 450l15 10M1162 315l8 -6M1230 327l13 -5M1132 490l3 8M1243 478l12 9M1194 536l-8 3M1197 299l9 -6M1130 431l13 14M1224 466l15 11M1200 280l6 -7M1238 440l14 11M1096 491l3 18M1162 308l10 -8M1222 343l13 -8M1188 473l12 12M1095 441l5 12M1159 524l-13 7M1220 466l13 9M1252 365l11 -3M1093 451l3 12M1103 460l3 13" stroke="#626866" stroke-width="1.3" opacity="0.2"/><path d="M1136 507l4 8M1121 498l7 14M1056 323l-10 -12M1143 558l-11 3M1157 561l-8 3M1206 493l7 6M1202 319l13 -13M1124 483l10 13M1134 416l7 6M1171 327l10 -7M1231 337l17 -10M1095 567l-15 7M1242 309l18 -8M1102 303l2 -8M1173 547l-16 6M1195 502l9 5M1171 518l5 8M1157 431l16 8M1201 486l11 8M1248 461l12 5M1114 562l-9 4M1122 486l5 10M1125 470l9 16M1136 504l7 8M1189 495l12 11M1242 514l13 8M1218 453l17 8M1230 437l8 1M1181 324l14 -11M1119 473l8 14M1224 364l9 -1M1159 312l12 -9M1221 479l9 8M1101 448l8 14M1238 407l16 2M1224 489l13 9M1156 522l-7 4M1233 327l7 -4M1183 539l-17 9M1104 317l6 -16M1257 419l10 1M1150 557l-17 6M1225 541l-12 10M1214 526l-15 6M1213 484l10 9M1124 410l16 4M1175 306l8 -3M1107 430l4 9M1120 543l-12 9M1157 421l12 8M1219 451l9 8M1098 307l2 -15M1150 412l17 10M1213 519l7 9M1246 336l12 -4M1233 460l15 9M1136 317l7 -8M1127 530l-9 4M1092 272l4 -11M1111 427l11 9M1190 316l16 -8M1237 472l17 8M1200 523l-8 4M1222 319l17 -8M1202 468l8 4M1254 438l11 5M1131 300l6 -13M1130 561l-11 6M1097 302l3 -12M1043 287l-9 -14M1189 468l15 10M1198 533l-9 10M1105 315l7 -18M1174 307l7 -6M1221 517l5 6M1182 487l7 8M1172 451l14 9M1235 334l8 -3M1165 485l9 10M1202 436l16 4M1183 280l7 -10M1207 509l13 15M1117 319l4 -13M1097 304l6 -19M1086 570l-15 9M1173 355l12 -5M1118 457l2 12M1133 322l11 -17M1112 584l-16 8M1132 518l6 15M1193 502l7 6M1058 288l-1 -10M1060 285l-3 -8M1110 568l-10 3M1194 535l-11 5M1167 318l15 -10M1113 503l2 10M1167 563l-12 5M1117 303l6 -12M1079 284l-3 -17M1215 442l12 4M1098 485l2 16M1146 332l13 -12M1233 447l13 6M1248 449l11 6M1181 516l6 8M1194 517l10 17M1252 360l9 -4M1135 470l6 16M1172 278l6 -7M1041 306l-6 -10M1179 509l6 7M1190 508l10 15M1206 340l17 -3M1255 493l13 8M1120 442l5 13M1229 281l13 -9M1114 513l7 17M1093 471l2 9M1106 453l5 14M1195 496l9 10M1098 457l0 15M1130 438l14 13M1230 342l16 -5M1128 551l-7 4M1087 573l-17 5M1122 474l9 18M1087 286l3 -11M1174 509l7 17M1151 586l-8 3M1248 457l13 7M1217 498l9 6M1215 370l19 1M1160 428l11 6M1109 456l3 10M1159 520l-17 9M1130 469l7 15M1226 360l18 -6M1204 533l-11 4M1157 303l11 -10M1042 323l-12 -14M1129 538l-14 9M1257 466l17 6M1106 553l-15 7M1252 474l10 8M1162 282l10 -9M1187 411l15 3M1230 449l14 6M1123 446l4 13M1220 524l-17 9M1210 463l6 5M1153 560l-8 11M1164 300l9 -11M1121 301l5 -19M1141 296l6 -7M1215 339l14 -7M1265 441l15 8M1150 563l-12 12M1104 458l6 13M1133 551l-7 5M1162 274l5 -13M1100 477l6 16M1241 371l11 -3M1165 547l-10 9M1210 290l14 -8M1190 476l10 10M1113 464l5 13M1216 469l13 5M1146 559l-18 8M1172 527l-11 7M1116 457l10 12M1211 440l14 6M1159 551l-15 10M1094 294l1 -13M1251 293l17 -6M1231 462l15 7M1139 485l5 7M1089 298l6 -17M1242 484l11 2M1097 467l3 17M1231 305l12 -4M1155 425l9 7M1167 320l10 -8M1228 469l16 6M1092 576l-16 6M1194 300l17 -9M1192 559l-9 3M1252 344l15 -3M1171 502l7 6M1205 294l8 -6M1141 492l6 11M1230 474l16 5M1245 475l11 5M1164 549l-15 12M1093 460l1 11M1114 514l2 19M1265 485l13 6M1034 303l-6 -8M1125 319l5 -7M1091 487l-1 12M1144 549l-15 8M1231 405l13 3M1166 532l-11 7M1049 301l-6 -18M1112 310l3 -10M1217 324l10 -4M1090 432l-2 12M1241 351l8 -3M1110 515l-0 9M1183 489l11 12M1185 423l17 9M1110 479l2 9M1225 351l17 -1M1026 331l-6 -6M1118 437l6 15M1145 533l-12 9M1111 329l6 -11M1182 323l16 -5M1117 418l11 13M1315 393l10 1M1222 338l13 -2M1123 456l8 15M1072 569l-0 13M1136 552l-14 8M1246 478l16 12M1111 283l1 -17M1085 478l7 15M1150 486l6 11M1120 460l6 6M1104 475l1 15M1161 285l12 -14M1131 395l17 4M1171 555l-8 5M1258 483l12 5M1112 552l-13 8M1109 423l12 14M1110 428l7 11M1113 480l5 14M1090 448l1 14M1109 577l-9 5M1119 279l3 -11M1058 309l-8 -12M1152 321l7 -5M1085 443l-1 11M1115 298l6 -16M1115 271l3 -7M1112 445l5 16M1114 317l4 -10M1240 455l17 10M1116 301l7 -13M1087 280l1 -13M1080 326l-1 -19M1058 304l-3 -13M1121 311l4 -10M1158 574l-11 9M1153 509l4 8M1133 497l8 17M1037 305l-10 -14M1254 511l11 7M1095 306l9 -17M1125 472l5 18M1138 291l3 -8M1208 465l12 5M1129 406l13 9M1085 434l0 11M1221 447l14 9M1151 535l-12 11M1226 451l12 12M1193 303l8 -5M1184 497l6 12M1211 289l9 -5M1216 309l14 -4M1253 361l16 1M1257 477l10 9M1119 491l4 11M1251 492l10 5M1186 299l13 -14M1215 333l15 -9M1196 510l4 10M1153 524l-10 8M1133 586l-16 11M1145 330l15 -12M1231 441l15 5M1144 301l8 -10M1105 530l-8 5M1147 447l14 11M1117 568l-10 9M1270 464l7 3M1173 289l8 -5M1130 447l6 6M1169 323l9 -9M1116 574l-10 6M1192 349l9 -2M1246 431l12 6M1216 308l11 -8M1225 464l14 9M1058 334l-6 -6M1160 265l10 -14M1081 443l-1 15M1221 316l18 -6M1111 443l3 10M1214 530l-13 6M1154 566l-14 8M1169 548l-8 4M1121 547l-12 3M1103 314l1 -11M1215 479l13 9M1097 294l4 -19M1274 488l15 10M1231 468l9 6M1203 471l7 5M1175 499l10 11M1222 477l7 5M1254 486l9 10M1194 504l11 8M1197 498l7 10M1118 281l2 -16M1262 484l12 2M1113 429l7 14M1101 447l4 9M1193 317l12 -4M1230 434l12 2M1096 547l-16 8M1125 532l-14 10M1128 287l5 -8M1118 552l-7 5M1117 494l4 13M1130 435l12 15M1108 542l-10 9M1194 541l-10 5M1103 428l6 15M1150 292l7 -13M1224 512l6 11M1234 535l-12 5M1167 566l-17 9M1223 488l10 7M1230 348l11 -5M1128 518l3 12M1106 458l2 20M1135 436l12 11M1117 426l10 15M1133 303l4 -18M1231 373l16 2M1190 504l8 7M1221 407l10 2M1199 326l18 -8M1213 523l-8 5M1138 548l-11 6M1116 457l6 12M1092 456l1 11M1235 485l15 8M1127 307l4 -9M1136 473l9 16M1097 458l4 10M1216 499l6 8M1202 517l11 13M1240 361l10 0M1185 271l6 -6M1109 541l-13 7M1261 441l18 3M1237 399l13 2M1059 287l-2 -10M1220 436l11 3M1241 463l8 3M1189 531l-17 4M1119 458l8 13M1124 282l5 -18M1258 451l16 1M1229 428l16 6M1257 462l9 4M1172 304l9 -16M1116 553l-14 5M1118 462l5 7M1132 517l5 11M1132 487l6 18M1109 450l6 18M1111 476l9 16M1209 442l10 4M1158 300l9 -7M1213 361l12 -2M1215 521l-10 3M1269 501l9 7M1161 510l10 16M1124 470l9 13M1230 360l13 -3M1284 463l18 7M1247 450l9 2M1151 320l15 -13M1220 282l14 -9M1148 514l6 12M1101 312l-0 -13M1132 568l-9 3M1037 318l-12 -15M1167 531l-9 6M1135 512l8 14M1194 533l-10 3M1237 449l7 4M1205 343l12 -3M1064 313l-3 -15M1160 298l12 -10M1137 305l4 -7M1222 341l16 -3M1235 459l13 7M1218 506l8 8M1195 524l-14 7M1129 306l7 -15M1232 485l16 12M1083 462l1 11M1217 357l9 -1M1221 509l14 12M1080 308l1 -19M1147 559l-12 6M1272 471l8 5M1156 439l9 6M1213 378l13 1M1181 527l-14 5M1196 325l11 -6M1166 450l14 11M1116 520l1 12M1233 366l12 1M1205 348l17 -4M1114 466l6 14M1190 332l7 -4M1250 493l9 5M1202 359l12 -5M1228 279l7 -10M1200 483l10 5M1114 511l5 18M1186 329l14 -12M1212 325l14 -6M1206 463l7 5M1243 519l14 9M1077 435l-2 9M1155 508l7 16M1187 505l7 8M1171 330l13 -7M1155 320l8 -9M1280 483l17 7M1143 311l13 -15M1238 487l7 4M1087 278l2 -12M1217 468l9 4M1160 514l8 13M1170 509l10 13M1085 286l2 -16M1251 469l14 6M1117 304l2 -12M1226 486l7 4M1160 286l9 -15M1218 465l8 5M1189 294l12 -7M1203 518l6 11M1194 325l14 -6M1260 469l13 6M1196 475l17 9M1237 450l13 8M1218 285l7 -5M1247 463l8 3M1138 271l5 -8M1159 539l-17 7M1078 514l-1 11M1147 310l6 -6M1098 443l3 8M1080 287l2 -17M1206 300l15 -9M1074 325l-4 -14M1154 538l-15 6M1061 334l-3 -10M1159 547l-8 2M1088 282l4 -19M1030 316l-6 -8M1218 430l13 0M1223 451l17 7M1125 472l8 15M1249 469l17 8M1207 276l7 -6M1243 497l8 6M1258 452l16 8M1147 320l5 -7M1200 479l11 15M1165 533l-9 7M1141 472l7 13M1244 369l13 -2M1156 554l-14 7M1253 447l19 4M1124 526l-16 8M1090 468l3 12M1120 479l4 19M1052 305l-7 -12M1143 271l6 -19M1214 340l9 -6M1189 506l11 16M1232 418l12 2M1111 496l4 15M1152 306l8 -12M1148 471l10 16M1253 372l15 2M1202 415l17 5M1226 311l12 -8M1195 312l15 -9M1107 458l5 17M1164 287l16 -11M1083 443l0 16M1115 543l-11 5M1062 303l-1 -12M1241 468l16 7M1097 298l-0 -17M1128 306l5 -19M1133 475l7 10M1196 514l5 7M1167 440l10 6M1066 564l-5 11M1240 504l8 5M1089 281l3 -18M1194 426l12 6M1103 326l3 -19M1124 320l4 -7M1226 419l15 2M1046 313l-3 -9M1171 538l-10 8M1103 440l4 16M1191 473l14 10M1223 495l8 10M1165 545l-11 5M1200 295l17 -8M1126 463l5 7M1169 295l11 -12M1111 457l1 13M1094 293l-3 -19M1069 324l-3 -13M1218 523l-14 5M1171 296l14 -12M1145 513l5 13M1196 483l12 14M1159 457l8 12M1222 481l9 8M1184 358l16 -1M1227 436l16 3M1214 280l16 -8M1174 323l14 -9M1248 369l10 0M1171 549l-14 8M1102 294l2 -13M1129 496l3 19M1178 304l10 -6M1216 516l9 10M1151 556l-12 4M1093 260l-1 -13M1105 309l2 -9M1138 505l6 18M1158 538l-8 5M1082 454l-0 15M1143 426l14 8M1211 295l15 -8M1185 473l15 12M1106 316l6 -16M1190 503l8 6M1185 337l8 -4M1192 340l10 -10M1107 447l1 11M1135 285l3 -13M1188 536l-10 7M1151 449l9 9M1160 437l13 14M1170 303l14 -14M1195 332l12 -5M1112 445l8 18M1103 295l3 -9M1249 466l16 3M1194 289l10 -6M1128 422l8 4M1121 452l11 16M1154 513l8 12M1132 298l4 -17M1243 366l8 -2M1224 524l-18 6M1171 499l7 9M1261 344l11 -2M1113 322l5 -11M1234 448l17 6M1244 509l11 4M1132 365l15 -7M1091 472l1 14M1248 419l19 1M1095 457l0 11M1145 487l3 9M1199 417l11 3M1126 419l12 12M1183 313l12 -6M1145 304l7 -9M1148 534l-11 8M1195 341l17 -7M1083 505l-1 16M1086 550l-15 10M1220 478l14 9M1331 397l17 0M1269 495l8 5M1150 299l9 -9M1177 307l9 -11M1084 305l3 -14M1233 487l12 6M1083 289l-0 -14M1228 480l15 9M1170 290l6 -9M1105 505l2 12M1238 436l12 6M1237 493l9 7M1128 295l8 -14M1172 539l-18 7M1088 571l-16 7M1069 338l-2 -12M1078 267l-1 -13M1278 507l9 4M1197 516l12 16M1143 259l9 -17M1164 480l10 7M1118 525l-8 5M1216 304l7 -8M1029 323l-10 -13M1263 345l16 -3M1205 475l13 4M1221 517l6 6M1213 354l15 -4M1174 534l-8 5M1244 500l8 4M1202 336l15 -7M1195 353l14 -5M1196 514l11 9M1082 264l1 -14M1198 318l16 -11M1314 415l12 4M1122 296l4 -8M1101 454l2 10M1248 470l17 5M1117 295l1 -11M1139 553l-9 4M1195 500l14 9M1045 305l-5 -18M1116 419l7 15M1121 326l10 -17M1239 421l12 1M1174 338l9 -3M1136 398l18 4M1099 296l4 -14M1079 554l0 19M1259 500l13 7M1253 285l16 -8M1072 317l-7 -13M1133 407l13 8M1164 545l-7 6M1138 296l11 -14M1084 302l0 -10M1183 333l19 -6M1260 496l9 7M1230 434l14 4M1119 506l4 16M1305 468l15 8M1126 502l3 12M1046 319l-8 -10M1189 505l7 13M1208 514l10 10M1208 313l11 -10M1223 447l10 4M1170 437l9 4M1125 415l18 8M1085 567l-18 8M1125 511l6 16M1217 480l9 4M1212 290l16 -10M1108 317l3 -9M1176 319l12 -9M1205 532l-17 7M1157 549l-11 7M1321 433l12 -0M1186 492l12 12M1228 481l14 8M1155 569l-7 5M1191 481l9 8M1114 479l9 16M1238 457l9 3M1192 317l12 -7M1148 291l8 -11M1213 501l10 13M1116 524l-17 8M1225 357l8 -1M1207 430l9 5M1188 511l12 15M1172 295l7 -10M1153 474l13 15M1066 288l-4 -18M1250 481l8 5M1109 295l6 -15M1248 467l12 11M1181 300l14 -12M1177 332l15 -7M1232 494l9 7M1105 508l6 18M1204 510l5 7M1140 297l9 -16M1194 282l15 -13M1241 344l19 -6M1115 442l8 17M1112 566l-17 6M1048 301l-4 -10M1127 431l10 10M1185 329l11 -5M1207 512l7 6M1240 361l8 -2M1165 302l12 -13M1165 285l8 -17M1201 301l11 -6M1207 530l-10 7M1136 437l8 7M1160 286l7 -10M1062 312l-6 -16M1165 330l8 -6M1179 324l16 -11M1177 494l6 6M1107 451l4 16M1087 278l1 -13M1247 356l18 -4M1151 337l16 -4M1239 335l18 -3M1189 303l8 -6M1216 517l9 9M1256 487l12 5M1158 530l-9 12M1157 544l-13 6M1248 457l11 5M1172 442l11 7M1163 530l-17 9M1139 434l6 9M1231 417l8 -0M1166 511l4 14M1065 281l-3 -11M1177 448l9 9M1121 576l-17 5M1275 487l17 6M1208 477l13 9M1146 556l-8 1M1108 463l8 14M1130 328l9 -12M1239 375l18 -3M1035 319l-4 -7M1102 478l1 19M1108 557l-7 6M1219 509l12 13M1172 284l8 -6M1197 358l13 -3" stroke="#4e5352" stroke-width="1.3" opacity="0.2"/><path d="M1149 514l7 10M1121 443l9 11M1157 342l14 -11M1078 593l-0 19M1149 454l11 6M1221 462l8 5M1103 451l6 16M1119 315l9 -10M1165 531l-12 5M1244 372l9 -3M1221 363l9 -2M1213 445l12 6M1096 499l4 15M1152 511l6 12M1235 305l7 -4M1105 441l2 10M1195 512l11 14M1227 370l10 0M1185 520l-11 6M1056 323l-5 -9M1182 431l12 5M1252 442l14 5M1215 285l8 -5M1111 564l-18 8M1150 461l10 8M1232 278l11 -7M1150 434l8 4M1208 272l7 -9M1160 280l9 -16M1211 345l16 -7M1091 502l3 18M1140 503l8 17M1126 538l-16 5M1098 428l5 11M1211 434l10 3M1154 527l-10 7M1107 312l5 -9M1168 443l14 10M1101 463l3 9M1081 312l-5 -17M1085 434l1 11M1215 443l16 2M1169 303l12 -14M1211 278l15 -12M1203 286l12 -6M1138 425l7 11M1221 429l18 5M1112 459l-1 12M1101 312l2 -9M1246 459l9 6M1130 436l6 7M1235 343l16 -4M1247 298l14 -3M1096 300l4 -14M1178 356l11 -3M1070 301l-4 -16M1150 322l8 -6M1197 477l10 6M1172 299l12 -12M1107 564l-9 6M1151 302l9 -9M1142 293l7 -13M1096 430l6 19M1067 567l-0 18M1250 431l19 0M1240 344l8 -4M1301 442l17 10M1196 438l8 4M1206 297l13 -7M1178 336l8 -4M1139 271l1 -13M1185 365l10 -2M1174 474l12 9M1135 437l7 6M1104 549l-12 9M1098 595l-16 10M1150 307l8 -15M1228 292l17 -10M1219 344l10 -6M1214 337l15 -8M1223 347l18 -1M1131 477l9 13M1126 528l-18 6M1069 320l-2 -11M1143 514l6 14M1155 268l6 -15M1183 441l10 7M1147 539l-12 6M1123 467l8 18M1034 292l-11 -15M1138 572l-18 2M1199 291l8 -9M1202 320l18 -6M1156 460l10 17M1186 289l9 -10M1113 459l6 13M1181 292l6 -6M1233 499l14 12M1220 380l10 -3M1115 452l7 10M1107 280l3 -12M1108 461l3 15M1216 428l13 2M1094 300l1 -17M1260 429l19 4M1185 291l7 -5M1182 538l-11 6M1252 505l10 3M1192 483l10 7M1239 485l11 6M1256 468l14 9M1133 288l3 -10M1130 449l10 11M1142 409l13 4M1147 561l-15 12M1124 423l5 6M1160 578l-11 5M1163 528l-10 5M1179 536l-15 11M1182 306l12 -10M1187 498l8 16M1241 358l11 -3M1235 501l8 4M1195 312l8 -8M1236 385l17 -2M1205 312l13 -10M1157 496l7 13M1240 350l16 2M1161 542l-9 3M1138 456l12 10M1137 315l4 -8M1124 411l15 8M1215 412l13 7M1149 542l-12 7M1066 289l-1 -9M1131 304l6 -7M1216 474l14 9M1163 285l9 -10M1212 494l9 14M1212 516l9 9M1067 286l-1 -19M1131 306l5 -10M1178 477l13 14M1128 313l14 -14M1181 313l10 -7M1118 473l6 11M1111 437l11 13M1095 465l0 13M1210 474l11 11M1196 394l14 0M1162 329l13 -7M1216 501l16 8M1166 544l-9 4M1120 278l2 -8M1080 576l-8 2M1246 454l18 6M1110 488l7 15M1074 331l-5 -14M1165 501l11 11M1234 486l10 7M1067 560l-5 13M1171 324l12 -12M1125 518l3 16M1176 550l-14 9M1128 275l2 -9M1231 417l16 2M1189 299l14 -8M1238 506l8 6M1198 326l14 -9M1265 498l16 5M1161 304l14 -11M1150 292l6 -7M1213 362l18 -3M1117 319l2 -16M1237 505l10 11M1086 445l1 9M1244 292l9 -5M1165 290l9 -7M1065 430l-4 10M1231 414l9 3M1091 433l0 18M1099 294l4 -16M1213 429l19 4M1228 491l17 8M1088 463l1 19M1139 458l13 11M1125 483l4 17M1238 349l16 -5M1107 484l5 19M1129 410l12 7M1192 490l5 9M1114 592l-16 9M1172 301l11 -11M1103 484l4 11M1226 481l10 8M1083 471l-2 10M1078 433l0 20M1112 434l4 8M1165 438l10 7M1237 466l8 3M1117 442l2 11M1111 574l-14 9M1071 280l0 -13M1098 304l4 -19M1179 543l-17 6M1238 482l14 10M1040 305l-5 -16M1217 536l-10 9M1196 289l6 -7M1169 530l-7 6M1281 478l16 7M1197 528l-10 4M1157 305l12 -8M1171 299l12 -14M1072 307l-3 -19M1191 535l-12 12M1190 509l10 12M1233 448l17 10M1247 494l7 6M1127 430l12 6M1243 288l15 -8M1243 441l13 7M1076 301l-2 -19M1064 337l-4 -15M1207 350l18 -1M1171 325l8 -5M1225 506l10 10M1101 428l5 12M1154 521l-7 7M1228 443l15 4M1076 274l-3 -17M1204 332l15 -8M1119 562l-11 7M1126 431l8 12M1231 503l5 8M1294 460l18 7M1146 440l13 7M1202 505l6 6M1129 433l9 9M1221 510l12 5M1225 470l15 6M1140 529l-18 8M1119 310l4 -16M1184 322l14 -7M1105 546l-11 6M1317 456l8 1M1141 455l9 13M1240 457l15 6M1226 517l5 7M1116 548l-9 4M1063 465l-5 16M1159 330l15 -9M1188 537l-11 2M1181 488l10 15M1097 469l-0 11M1136 464l11 12M1138 606l-15 7M1171 332l9 -8M1236 447l14 6M1129 303l5 -7M1145 312l13 -12M1172 299l6 -11M1174 504l7 12M1202 340l12 -5M1093 305l-1 -12M1197 325l13 -10M1139 281l6 -13M1073 317l-4 -15M1158 324l10 -6M1054 295l-5 -15M1189 293l7 -5M1120 471l5 11M1141 274l6 -13M1212 343l9 -4M1128 451l6 9M1192 533l-15 11M1200 504l8 10M1303 405l10 2M1078 300l-1 -15M1137 548l-9 2M1190 339l17 -10M1210 478l10 3M1153 297l8 -10M1169 291l6 -7M1103 307l3 -17M1113 505l3 19M1231 497l14 12M1123 490l5 11M1163 304l8 -9M1123 311l10 -16M1161 520l-12 5M1231 434l19 6M1061 313l-3 -18M1219 278l9 -7M1229 419l20 1M1168 304l7 -8M1175 425l9 10M1145 526l-12 6M1150 442l7 7M1208 328l8 -2M1184 476l10 15M1180 481l12 10M1110 473l4 11M1157 561l-17 11M1251 468l12 8M1182 333l17 -7M1166 327l8 -7M1193 503l10 16M1119 569l-10 5M1107 557l-12 5M1099 498l1 13M1229 469l15 13M1183 520l6 8M1089 435l9 16M1184 323l11 -6M1230 489l9 8M1075 310l-4 -15M1232 521l-11 8M1240 481l11 8M1257 456l9 6M1186 435l8 5M1112 509l3 14M1195 411l9 1M1208 288l9 -11M1135 543l-7 4M1177 293l8 -11M1235 279l16 -11M1118 455l8 16M1216 490l9 9M1195 294l8 -5M1193 349l16 0M1210 476l14 14M1088 275l1 -18M1236 441l16 3M1193 286l13 -14M1153 568l-14 8M1084 501l-3 8M1237 343l19 -5M1097 467l3 19M1126 534l-11 4M1114 577l-12 5M1222 529l-12 5M1123 455l10 9M1116 313l6 -12M1209 511l11 16M1181 575l-12 6M1079 581l-3 14M1243 427l16 9M1260 340l13 -3M1175 530l-12 9M1108 304l7 -15M1204 350l16 -6M1273 470l20 1M1111 515l2 17M1240 444l15 2M1219 294l10 -6M1238 358l9 -2M1239 351l10 -4M1178 447l7 8M1226 526l-11 8M1281 471l9 5M1229 345l18 -1M1203 497l16 11M1151 441l13 8M1221 512l12 9M1228 485l8 5M1077 447l-3 19M1041 311l-6 -7M1113 286l0 -12M1171 293l9 -9M1252 286l12 -5M1078 307l-2 -12M1127 411l15 7M1215 336l10 -2M1169 514l6 15M1124 508l1 10M1200 318l11 -9M1116 540l-17 9M1084 301l1 -9M1253 430l18 1M1116 324l5 -16M1089 294l4 -17M1215 289l10 -8M1129 555l-14 11M1230 452l14 6M1224 342l13 -2M1201 308l10 -4M1101 314l0 -9M1250 484l14 7M1100 491l2 17M1042 279l-4 -12M1078 279l-3 -11M1126 310l5 -18M1159 528l-8 4M1080 285l-1 -11M1211 331l12 -3M1106 471l7 17M1248 473l8 6M1131 458l6 15M1029 293l-7 -9M1204 486l6 5M1058 295l-7 -15M1251 444l18 5M1090 457l1 16M1151 522l-10 3M1058 285l-5 -18M1186 273l10 -13M1188 349l18 -1M1252 362l10 -1M1112 453l11 12M1263 501l14 12M1058 296l-10 -16M1173 286l12 -13M1246 516l11 10M1064 288l-8 -16M1221 481l13 11M1119 464l10 16M1151 293l11 -13M1197 319l9 -4M1165 481l10 11M1076 290l-1 -14M1168 507l6 9M1256 428l9 3M1298 466l13 3M1222 456l6 6M1177 325l8 -3M1232 365l9 -1M1204 317l7 -4M1100 498l1 12M1244 458l12 5M1110 272l8 -18M1201 477l8 11M1197 489l10 16M1142 307l7 -9M1111 302l2 -9M1196 520l-13 7M1109 306l3 -9M1266 361l11 -2M1150 528l-16 7M1122 426l6 10M1206 282l13 -10M1036 280l-6 -12M1115 581l-15 7M1094 477l0 8M1174 327l7 -5M1031 304l-11 -14M1101 496l3 11M1214 297l15 -10M1069 270l-6 -19M1151 545l-10 4M1091 488l5 17M1101 304l-1 -18M1124 503l2 15M1113 277l4 -10M1101 461l3 10M1192 484l8 7M1256 476l15 9M1112 437l5 13M1230 276l10 -6M1169 287l11 -13M1176 558l-11 6M1134 437l13 14M1240 346l20 -1M1238 513l8 8M1071 301l-1 -15M1121 424l8 11M1190 512l9 9M1222 530l-12 7M1095 328l6 -12M1151 515l9 11M1195 534l-7 7M1140 537l-14 6M1190 284l5 -10M1186 359l14 -5M1199 534l-10 4M1196 482l5 7M1236 466l11 10M1219 438l16 6M1070 303l-1 -12M1226 345l12 -1M1196 344l12 -7M1186 501l9 14M1131 295l9 -11M1106 476l5 12M1167 556l-15 10M1092 281l2 -11M1125 488l3 12M1085 466l0 18M1139 288l5 -8M1074 286l-3 -10M1188 302l15 -10M1138 319l7 -7M1109 299l2 -14M1109 287l5 -17M1066 290l-5 -15M1190 506l7 7M1144 442l12 10M1124 432l10 10M1103 427l2 15M1186 535l-14 5M1187 437l12 10M1121 291l7 -9M1165 328l12 -12M1238 496l16 11M1250 469l10 6M1229 504l12 8M1118 320l5 -7M1184 361l10 -2M1225 343l15 -2M1200 383l16 1M1055 293l-7 -16M1191 329l9 -7M1231 454l11 8M1157 520l6 8M1187 281l13 -14M1222 409l15 2M1205 363l16 -7M1340 402l15 5M1199 345l16 -4M1163 309l7 -9M1163 537l-12 5M1137 547l-12 8M1088 281l1 -14M1180 310l14 -10M1122 498l4 17M1102 494l1 11M1114 452l11 13M1210 340l8 -2M1191 505l10 16M1077 305l1 -17M1198 435l7 4M1019 324l-10 -13M1198 283l12 -10M1309 435l10 2M1129 556l-12 8M1042 316l-7 -8M1172 538l-15 6M1321 363l14 -1M1110 431l7 16M1124 306l5 -11M1108 486l3 11M1222 474l10 11M1158 568l-16 8M1177 441l11 8M1203 327l9 -7M1177 313l9 -8M1238 369l16 -2M1162 508l7 17M1141 296l6 -7M1169 417l13 2M1179 325l15 -9M1107 293l3 -9M1150 303l9 -11M1174 298l6 -9M1182 440l10 3M1209 502l13 7M1206 413l9 1M1094 431l4 18M1182 552l-14 7M1127 507l1 9M1201 514l5 11M1073 278l-5 -13M1217 458l8 3M1096 489l5 14M1142 549l-13 12M1093 460l0 9M1114 496l6 16M1248 342l17 -6M1227 474l16 11M1193 317l9 -7M1299 477l19 6M1224 439l12 4M1119 558l-18 8M1132 285l5 -13M1170 548l-13 5M1131 443l7 13M1032 298l-7 -17M1200 343l13 -9M1096 295l-1 -18M1241 354l15 -7M1104 504l2 14M1246 347l16 1M1156 565l-14 8M1223 412l15 4M1197 304l8 -8M1181 516l6 11M1164 459l8 7M1208 507l9 8M1320 423l18 5M1091 514l0 14M1134 530l-15 10M1193 515l6 16M1181 296l6 -9M1198 353l17 -9M1112 312l6 -16M1060 295l-2 -11M1097 466l4 12M1108 463l3 11M1208 300l11 -6M1266 484l17 8M1123 557l-8 5M1257 474l16 4M1178 335l13 -5M1126 542l-17 6M1108 431l8 10M1256 342l17 -4M1137 546l-10 5M1159 301l9 -7M1225 315l18 -5M1213 339l14 -4M1152 525l-10 7M1113 483l2 8M1171 328l15 -8M1120 481l1 20M1125 330l13 -14M1118 312l7 -11M1284 485l11 9M1168 299l9 -11M1175 327l14 -6M1095 487l2 19M1233 307l12 -9M1117 461l6 15M1162 533l-15 7M1172 536l-14 9M1180 480l14 14M1209 372l19 -3M1160 304l9 -8M1112 472l5 15M1210 513l10 12M1151 561l-7 6M1138 435l8 9M1128 324l6 -9M1047 301l-7 -9M1102 438l3 17M1014 299l-11 -10M1182 352l16 -4M1151 505l6 9M1098 317l1 -15M1203 285l5 -6M1131 448l7 12M1121 270l1 -8M1211 296l11 -7M1136 513l4 11M1202 311l6 -6M1127 453l9 9M1252 465l10 4M1232 484l11 9M1123 443l8 8M1074 312l-7 -17M1049 289l-5 -19M1104 324l4 -11M1234 342l18 -9M1120 448l8 14M1154 443l12 9M1045 320l-7 -10M1196 324l10 -4M1181 516l6 9M1218 473l11 8M1072 306l-1 -18M1218 469l13 6M1128 451l3 13M1176 427l11 8M1159 302l8 -12M1203 287l8 -8M1205 303l9 -4M1102 600l-7 10M1096 308l-3 -11M1283 460l10 2M1195 370l16 -4M1179 475l15 13M1105 426l6 13M1246 467l10 8M1206 350l11 0M1117 559l-12 7M1311 400l13 -0M1102 297l5 -12M1187 280l12 -13M1117 436l5 12M1229 443l13 4M1133 591l-8 2M1117 289l4 -7M1226 486l15 10M1209 340l17 -4M1235 341l11 -3M1193 339l11 -4M1138 551l-17 4M1180 532l-7 4M1163 284l6 -8M1189 482l14 13M1102 311l1 -9M1250 352l10 -2M1110 456l3 8M1134 317l6 -6M1245 486l11 11M1161 540l-10 6M1135 548l-16 4M1131 310l7 -10M1122 549l-9 5M1195 295l9 -6M1217 503l13 11M1198 484l14 7M1120 560l-18 6M1113 550l-8 6M1179 548l-15 5M1238 492l9 8M1126 528l-17 11M1131 291l4 -19M1165 480l8 8M1134 315l8 -16M1127 496l2 9M1135 416l9 11M1296 499l17 7M1144 307l10 -14M1212 463l13 10M1231 436l10 3M1196 336l19 -2M1105 507l3 9M1175 321l7 -7M1217 496l9 7M1160 444l14 8M1195 302l8 -10M1069 457l-5 14M1208 444l9 2M1111 464l10 16M1193 477l9 8M1125 483l4 16M1135 542l-7 4M1260 433l16 2M1212 427l10 -0M1234 435l13 4M1115 476l3 10M1163 282l12 -12M1179 318l14 -8M1259 501l14 11M1132 459l5 9M1237 347l11 -4M1115 443l5 14M1219 351l12 -3M1188 535l-12 8M1111 441l6 7M1225 426l18 7M1261 476l8 3" stroke="#7c817d" stroke-width="1.3" opacity="0.2"/><path d="M1197 591l-13 7M1203 582l-9 8M1136 631l-14 5M1168 651l-6 5M1288 555l-3 7M1249 592l-9 7M1203 557l-10 7M1289 506l10 8M1172 641l-13 9M1172 606l-13 4M1142 617l-10 7M1200 609l-8 3M1322 544l-5 13M1227 650l-10 7M1139 591l-10 3M1261 557l-15 3M1279 551l-9 10M1139 671l-9 -0M1097 606l-7 10M1188 567l-11 8M1108 651l-10 3M1299 509l6 5M1101 616l-7 2M1304 485l14 0M1159 664l-7 4M1306 496l7 3M1299 561l-10 11M1109 621l-7 13M1189 570l-10 8M1076 633l-2 7M1295 618l-4 14M1161 637l-11 6M1160 617l-8 2M1216 599l-15 4M1273 589l-14 3M1236 634l-15 6M1101 637l-9 10M1089 648l-7 3M1161 638l-14 4M1066 653l-4 13M1259 556l-7 3M1312 580l-3 11M1161 644l-9 9M1271 590l-12 3M1083 655l-8 6M1059 643l-4 9M1317 544l-6 5M1298 524l2 12M1228 584l-10 6M1195 557l-9 -1M1297 508l11 1M1063 656l0 7M1097 658l-8 1M1121 618l-14 5M1281 501l7 3M1166 653l-10 6M1134 630l-7 8M1039 668l3 7M1109 630l-11 10M1299 499l6 6M1164 537l-10 -0M1182 568l-7 2M1143 642l-11 7M1301 542l2 8M1079 626l-0 8M1215 599l-9 -1M1061 635l-7 14M1200 588l-7 8M1124 649l-11 6M1329 542l-5 6M1266 522l-10 8M1056 667l-1 12M1314 564l-2 16M1059 662l0 16M1148 624l-5 5M1184 617l-11 9M1181 602l-10 6M1238 575l-8 4M1295 577l-2 7M1103 632l-14 5M1121 604l-7 4M1065 650l-1 11M1152 643l-10 11M1082 616l-13 4M1136 668l-7 7M1107 629l-8 8M1240 537l-12 -0M1139 627l-8 5M1238 501l12 6M1303 514l14 7M1125 636l-7 4M1276 527l-14 2M1309 457l14 2M1311 539l-1 15M1227 637l-12 5M1209 621l-7 4M1307 576l-5 8M1250 477l10 9M1264 546l-12 9M1149 651l-13 5M1071 639l-3 10M1161 624l-3 15M1317 508l12 4M1136 646l-13 5M1230 564l-9 11M1312 543l-11 10M1285 559l-1 14M1203 541l-8 2M1162 618l-7 5M1305 462l8 2M1070 668l-2 14M1206 545l-14 7M1111 617l-9 7M1143 666l-9 2M1205 571l-10 4M1110 669l-11 9M1246 544l-7 2M1091 605l-11 5M1245 551l-12 7M1318 511l10 7M1161 664l-9 1M1313 502l9 5M1099 660l-13 7M1248 572l-12 4M1137 616l-12 6M1076 626l-1 14M1081 619l-5 9M1116 606l-9 0M1068 622l-1 9M1237 621l-15 4M1125 658l-8 6M1260 579l-10 10M1066 669l-3 9M1177 647l-5 6M1070 603l9 11M1075 653l-4 12M1185 596l-13 6M1211 603l-2 7M1290 565l-4 8M1150 652l-9 1M1172 595l-11 10M1242 593l-8 1M1258 529l-7 4M1320 526l3 11M1245 568l-14 6M1250 502l7 4M1187 564l-14 3M1258 561l-5 7M1110 621l-12 9M1059 637l-2 9M1089 624l-9 0M1220 613l-9 8M1307 489l15 2M1164 612l-8 4M1231 561l-11 6M1074 592l-3 13M1298 497l11 6M1326 516l7 3M1297 566l-4 14M1283 487l10 10M1267 554l-8 7M1083 624l-12 6M1317 551l2 13M1070 650l-5 8M1214 555l-7 3M1326 551l-4 12M1180 602l-10 4M1281 553l-7 9M1139 603l-13 7M1210 660l-8 7M1230 532l-5 13M1076 634l-2 16M1312 519l6 4M1156 634l-11 9M1287 551l4 12M1118 657l-5 11M1296 546l-1 11M1091 639l-10 -2M1143 648l-12 10M1285 521l-0 11M1111 597l-11 10M1206 599l-14 6M1112 626l-10 5M1309 528l-3 7M1067 644l-4 7M1245 587l-10 5M1299 506l13 -0M1070 629l-6 12M1120 641l-7 12M1094 626l-11 4M1310 499l15 5M1180 642l-9 10M1321 535l-5 12M1162 627l-9 7M1121 602l-8 1M1311 511l8 -1M1074 660l1 8M1259 508l14 6M1149 635l-13 0M1314 606l-4 15M1301 565l-9 9M1120 612l-12 8M1068 612l3 9M1263 563l-9 3M1259 575l-10 12M1086 619l-8 7M1116 612l-8 -3M1159 593l-8 5M1144 595l-10 7M1038 656l-4 10M1206 618l-11 4M1134 570l-10 5M1312 497l11 4M1255 627l-10 8M1147 639l-12 7M1301 473l9 11M1212 540l-13 6M1241 562l-7 4M1087 669l-12 1M1186 627l-8 5M1082 623l-7 2M1288 507l9 5M1055 670l2 12M1202 641l-8 4M1163 617l-15 1M1240 499l7 6M1215 607l-12 5M1302 538l-5 14M1190 578l-10 11M1091 669l-14 6M1150 597l-6 3M1154 626l-12 -2M1206 621l-14 8M1217 592l-4 6M1318 503l12 1M1186 642l-7 7M1199 616l-7 8M1152 642l-9 7M1255 552l-7 9M1072 638l-1 7M1287 472l14 6M1318 598l0 12M1262 598l-7 0M1314 598l-7 14M1119 630l-11 4M1180 589l-7 5M1286 599l-2 8M1297 530l-7 6M1106 622l-15 5M1248 518l7 4M1195 625l-11 6M1070 622l-0 15M1212 579l-4 8M1145 582l-10 2M1296 533l4 16M1086 627l-5 7M1184 606l-7 5M1031 663l-2 10M1182 670l-8 4M1176 646l-14 4M1309 516l7 11M1111 604l-14 6M1212 643l-8 -3M1218 568l-9 13M1194 573l-6 4M1111 659l-5 9M1304 545l-3 9M1112 659l-8 1M1270 616l-7 -3M1112 654l-8 5M1176 621l-15 -2M1151 600l-13 3M1052 652l2 8M1143 608l-7 3M1326 533l-4 14M1062 629l-6 14M1173 618l-12 11M1226 562l-9 7M1202 596l-15 1M1093 634l-9 1M1094 662l-4 11M1196 663l-4 6M1229 557l-10 2M1109 608l-12 6M1252 599l-9 6M1150 648l-8 3M1272 528l-5 5M1280 554l-8 11M1308 531l3 15M1144 596l-9 1M1155 585l-7 5M1182 583l-12 7M1170 610l-6 8M1220 567l-8 3M1213 599l-7 5M1217 572l-11 0M1280 514l8 8M1063 663l3 13M1292 462l9 4M1118 624l-12 6M1218 588l-11 7M1209 596l-5 7M1130 657l-9 8M1105 629l-14 8M1238 554l-9 3M1320 533l-4 8M1317 529l-5 6M1312 502l12 6M1237 525l-14 -1M1245 597l-14 5M1156 604l-8 4M1246 571l-11 4M1196 650l-7 3M1243 570l-5 7M1105 574l-10 12M1197 671l-8 3M1186 609l-12 2M1311 466l7 4M1297 471l6 5M1114 637l-11 3M1179 653l-9 3M1278 610l-9 3M1299 522l-5 11M1293 539l-5 7M1249 612l-13 4M1087 634l-14 6M1239 521l-10 8M1180 608l-15 3M1186 627l-15 3M1119 634l-9 11M1300 482l1 9M1308 519l13 8M1144 606l-12 4M1272 549l-11 8M1098 615l-14 3M1312 492l12 2M1271 532l-13 8M1260 557l-8 7M1180 631l-12 3M1229 552l-10 3M1234 583l-7 11M1069 656l-1 9M1197 651l-10 7M1090 663l-5 11M1220 520l5 6M1251 516l6 7M1085 628l-7 2M1202 566l-7 2M1321 401l7 -2M1272 540l-9 10M1159 609l-8 6M1295 533l2 11M1215 583l-7 4M1293 552l-4 12M1081 667l-9 8M1200 637l-12 8M1098 600l-7 8M1138 592l-9 8M1147 607l-7 4M1107 637l-6 5M1091 616l-7 1M1320 499l8 5M1298 520l8 4M1081 628l-10 7M1142 608l-8 5M1115 626l-5 5M1127 600l-11 5M1066 651l2 11M1069 619l4 6M1084 580l-10 8M1298 552l-8 10M1128 633l-5 11M1187 639l-13 8M1102 654l-13 3M1308 458l10 6M1154 641l-9 3M1236 576l-14 3M1273 548l-13 5M1226 633l-12 8M1134 648l-13 5M1170 640l-6 9M1090 628l-10 4M1141 603l-9 2M1291 530l-1 14M1307 528l2 9M1081 627l-5 6M1265 524l-9 3M1234 552l-13 3M1154 580l-8 8M1161 608l-14 3M1290 451l12 7M1127 614l-9 8M1279 545l-8 3M1156 641l-12 8M1195 642l-10 9M1132 607l-10 4M1319 516l8 11M1330 456l9 1M1198 551l-9 4M1202 659l-4 9M1266 550l-12 9M1177 628l-14 2M1295 492l10 5M1295 555l-3 13M1291 517l8 5M1108 644l-15 -3M1246 546l-8 0M1278 585l-10 3M1113 621l-10 1M1119 581l-9 5M1286 528l-8 8M1098 667l-8 -2M1304 559l1 16M1208 577l-10 2M1148 671l-9 11M1305 506l11 8M1248 586l-11 1M1184 617l-12 -0M1204 587l-9 9M1303 527l-2 13M1160 601l-8 5M1311 572l-5 13M1097 672l-7 -0M1167 642l-10 6M1122 628l-12 2M1124 650l-12 2M1162 653l-10 2M1301 564l2 14M1077 617l1 7M1263 586l-11 3M1034 664l2 15M1286 572l-4 9M1191 618l-9 9M1306 497l7 4M1220 614l-10 7M1205 618l-11 9M1180 659l-9 4M1251 605l-10 11M1157 591l-7 4M1216 592l-14 3M1236 573l-14 1M1291 546l-4 8M1303 480l14 6M1207 566l-10 4M1205 612l-11 7M1180 612l-7 4M1075 639l5 10M1196 589l-10 1M1201 597l-11 4M1294 534l-2 9M1254 575l-9 -1M1307 561l-2 10M1206 577l-12 6M1157 653l-8 6M1291 523l-3 13M1283 587l-10 12M1293 570l-4 13M1277 507l11 1M1185 567l-12 -1M1167 604l-12 3M1301 586l1 13M1262 575l-7 2M1113 656l-7 10M1250 568l-10 7M1133 657l-9 12M1325 555l2 10M1252 581l-6 7M1190 571l-14 3M1057 669l-3 12M1141 588l-8 5M1259 525l-10 2M1156 633l-7 4M1296 547l-4 10M1196 636l-13 8M1244 545l-9 2M1291 503l6 6M1317 531l1 9M1226 594l-9 1M1081 626l-13 9M1240 553l-9 8M1293 530l-7 5M1266 544l-8 11M1227 595l-10 9M1326 521l-2 9M1145 604l-12 6M1305 550l-11 10M1322 518l10 7M1302 456l9 -3M1166 623l-10 6M1114 642l-7 7M1092 595l-15 -3M1314 527l-7 6M1193 624l-11 6M1300 513l14 4M1278 595l-12 3M1200 599l-8 3M1210 623l-13 7M1120 667l-12 8M1319 538l-6 8M1113 590l-5 6M1184 667l-9 8M1301 498l14 1M1178 557l-11 -1M1066 662l-4 11M1216 626l-8 8M1155 649l-12 3" stroke="#7c7268" stroke-width="1.3" opacity="0.28"/><path d="M1236 576l-10 3M1302 522l-6 11M1295 576l-7 13M1119 639l-11 9M1177 617l-14 5M1176 593l-11 3M1140 615l-10 4M1101 633l-9 5M1149 584l-9 11M1233 549l-6 3M1302 495l14 1M1277 555l-8 6M1188 609l-9 2M1215 598l-8 9M1157 666l-4 6M1238 579l-8 9M1153 605l-9 6M1089 623l-12 4M1200 583l-9 5M1296 531l-4 15M1288 567l-5 9M1233 623l-10 4M1273 561l-8 12M1167 594l-11 7M1062 660l-4 15M1126 659l-6 5M1141 634l-7 8M1223 599l-6 3M1071 636l2 9M1197 564l-8 8M1087 663l-4 7M1091 625l-6 5M1154 627l-13 7M1152 648l-6 4M1261 599l-6 12M1177 548l-7 6M1235 551l-7 3M1079 638l4 6M1250 578l-12 10M1110 621l-8 9M1302 479l11 10M1156 624l-8 6M1301 532l-6 14M1281 551l-10 10M1215 559l-9 7M1103 613l-16 -0M1067 648l-0 8M1119 663l-3 8M1216 589l-8 10M1208 599l-9 -1M1054 648l-0 8M1321 543l-3 9M1313 533l1 14M1189 611l-5 5M1084 650l-6 7M1323 518l8 5M1183 621l-12 3M1181 557l-9 2M1168 592l-8 5M1225 596l-11 5M1186 620l-8 3M1228 567l-10 5M1136 586l-8 3M1244 613l-8 11M1228 548l-11 0M1121 610l-11 5M1255 589l-3 13M1191 584l-14 5M1274 560l-10 2M1311 524l-2 11M1310 556l-2 7M1185 580l-12 9M1289 573l-9 11M1096 623l-12 6M1116 631l-12 3M1233 635l-12 3M1303 508l10 8M1292 519l9 2M1141 617l-12 10M1323 523l-8 13M1302 569l-5 8M1284 507l8 3M1078 670l-5 12M1257 517l8 6M1198 578l-13 8M1309 510l6 4M1285 491l8 2M1141 594l-9 2M1263 530l-6 5M1298 539l-0 15M1291 507l13 2M1199 624l-6 5M1189 606l-9 6M1126 597l-9 1M1124 593l-10 7M1194 576l-12 10M1105 661l-10 3M1131 598l-15 2M1202 633l-9 9M1182 588l-8 7M1304 526l-7 13M1193 609l-8 2M1304 499l8 2M1250 575l-11 5M1198 651l-7 1M1312 534l0 14M1295 453l8 7M1090 606l-9 10M1171 656l-6 6M1127 620l-11 11M1145 608l-13 5M1254 584l-7 3M1214 617l-12 3M1098 611l-12 5M1263 583l-8 10M1250 603l-8 4M1281 611l-8 13M1252 617l-10 4M1091 603l-6 9M1306 519l11 7M1319 499l10 3M1164 635l-11 2M1266 623l-9 4M1255 585l-11 10M1281 591l-1 10M1115 607l-11 7M1263 560l-10 5M1278 512l11 9M1207 629l-9 7M1223 563l-15 2M1290 490l12 -1M1243 590l-9 4M1297 524l1 9M1290 516l11 2M1143 613l-11 11M1132 627l-6 6M1088 598l-10 8M1289 535l-1 9M1207 600l-5 12M1084 595l-12 3M1303 538l-4 6M1080 624l-6 7M1199 665l-7 4M1310 572l-2 9M1291 508l14 2M1173 612l-8 5M1214 602l-8 7M1312 581l-4 9M1249 541l-10 3M1091 668l-12 5M1080 649l-1 8M1138 643l-13 8M1178 579l-12 3M1303 550l1 13M1322 533l-9 13M1278 587l-4 5M1271 575l-10 5M1138 638l-9 8M1146 647l-9 7M1324 553l-3 10M1087 604l-6 7M1228 588l-11 1M1293 491l7 2M1294 478l6 9M1189 563l-13 2M1241 621l-9 7M1196 607l-12 7M1133 600l-9 6M1286 514l2 14M1230 539l-11 0M1171 619l-12 8M1224 565l-6 4M1084 663l-11 3M1280 525l-0 10M1296 544l-1 15M1227 627l-7 4M1217 599l-7 7M1217 621l-7 8M1112 641l-7 14M1118 645l-8 12M1119 666l-8 6M1099 653l-7 13M1215 595l-5 8M1132 613l-12 5M1102 667l-11 2M1225 580l-9 9M1137 628l-7 -0M1100 617l-10 6M1170 664l-11 7M1319 564l-2 7M1086 641l-10 4M1173 629l-14 3M1116 638l-13 7M1199 561l-7 13M1211 599l-8 4M1157 607l-12 5M1228 565l-4 12M1271 555l-8 5M1325 524l1 12M1310 525l-5 9M1163 593l-15 4M1198 584l-13 -2M1140 606l-13 6M1082 658l-6 5M1210 627l-10 12M1107 644l-10 8M1253 535l-14 4M1236 600l-7 5M1113 625l-12 2M1273 513l8 8M1202 624l-15 2M1169 606l-10 9M1325 506l12 1M1147 666l-13 2M1190 654l-14 -1M1186 640l-3 15M1151 600l-9 8M1095 667l-4 8M1287 522l-6 10M1065 662l-3 15M1206 588l-15 5M1138 625l-6 8M1270 603l-12 7M1222 562l-10 9M1209 561l-8 12M1201 558l-6 3M1155 608l-8 10M1283 623l-3 9M1139 626l-9 5M1282 524l-2 8M1262 585l-7 9M1132 659l-12 4M1275 532l-12 9M1180 643l-6 6M1122 647l-14 5M1189 638l-9 7M1305 553l3 14M1312 507l13 6M1249 564l-11 7M1149 636l-7 4M1116 664l-6 4M1173 582l-10 10M1215 590l-8 9M1192 611l-12 10M1201 572l-14 8M1270 504l11 3M1154 605l-11 3M1281 528l-4 6M1276 564l-12 8M1072 605l3 15M1294 514l10 11M1288 586l-0 12M1218 647l-13 4M1206 599l-13 8M1282 508l10 4M1074 628l0 13M1221 573l-9 1M1075 602l2 12M1158 616l-16 -0M1212 545l-12 7M1313 513l10 4M1234 589l-6 4M1168 594l-10 8M1063 642l-1 11M1070 647l2 15M1149 582l-6 5M1139 596l-10 1M1291 541l1 16M1269 550l-9 0M1065 633l0 13M1290 519l10 10M1311 532l-1 11M1236 602l-8 9M1152 574l-7 3M1298 505l9 1M1285 561l-8 8M1146 606l-9 8M1102 592l-15 4M1080 649l-7 13M1236 579l-7 11M1226 585l-10 8M1325 578l-7 13M1313 516l14 6M1056 660l-4 12M1106 612l-11 3M1132 639l-8 9M1068 651l-4 11M1100 652l-10 5M1161 614l-15 5M1123 612l-14 8M1171 589l-11 -0M1279 548l-11 8M1290 454l10 5M1257 600l-11 6M1097 617l-11 4M1167 589l-11 9M1243 551l-9 5M1129 596l-10 12M1129 670l-12 -1M1290 481l13 5M1296 620l-6 6M1129 557l-11 3M1057 647l-7 8M1252 545l-14 7M1198 570l-12 1M1114 665l-6 6M1139 643l-7 6M1277 482l15 -0M1126 629l-13 6M1195 596l-8 2M1162 586l-14 -1M1250 572l-12 8M1218 509l13 10M1170 633l-13 2M1238 605l-8 6M1223 658l-6 4M1101 664l-10 7M1205 581l-4 8M1143 658l-11 2M1174 626l-9 6M1125 668l-9 3M1273 546l-13 6M1178 603l-14 -2M1176 614l-11 6M1078 633l-3 12M1208 568l-15 4M1171 587l-14 5M1087 628l-11 9M1304 549l-3 12M1124 599l-8 4M1115 624l-12 4M1153 578l-8 7M1314 528l-2 14M1316 591l1 10M1084 652l-14 -1M1284 544l-5 11M1278 533l-12 6M1324 502l9 2M1297 608l-0 7M1176 601l-7 9M1266 509l4 6M1182 584l-9 7M1156 570l-11 11M1276 588l-6 7M1286 603l-3 7M1099 619l-10 8M1303 512l11 6M1078 631l-3 15M1260 565l-5 7M1034 659l-6 11M1112 570l-12 9M1256 553l-10 -2M1297 549l-2 8M1188 657l-6 8M1269 505l9 11M1260 523l-10 7M1076 653l3 8M1161 669l-10 0M1135 601l-10 11M1137 639l-13 6M1314 544l-3 11M1076 649l6 12M1192 539l-6 6M1193 582l-8 2M1304 488l8 9M1202 612l-8 5M1156 544l-8 2M1109 625l-6 8M1320 501l7 4M1105 650l-6 6M1225 628l-9 5M1211 592l-9 7M1320 521l0 11M1288 514l13 7M1307 528l-3 7M1158 622l-15 3M1143 576l-14 2M1203 598l-11 5M1149 634l-9 10M1155 666l-12 1M1215 618l-9 9M1313 523l-15 4M1185 582l-2 13M1290 472l11 -0M1223 599l-13 4M1221 619l-9 4M1218 578l-10 5M1298 509l11 7M1238 540l-10 2M1309 512l9 8M1127 651l-8 6M1196 603l-13 5M1134 661l-10 5M1184 584l-11 -0M1255 565l-9 9M1080 643l0 8M1134 632l-10 5M1300 503l16 2M1226 614l-10 6M1219 564l-13 4M1125 602l-13 -1M1291 466l7 6M1159 630l-6 8M1246 534l-13 8M1216 637l-7 1M1300 454l10 8M1229 591l-11 10M1272 575l-4 8M1227 576l-6 5M1290 510l13 4M1086 626l-8 7M1103 668l-11 2M1181 598l-9 6M1329 545l-5 7M1238 556l-9 7M1214 643l-13 1M1279 477l10 5M1201 578l-5 4M1260 619l-8 5M1196 527l-12 -0M1305 577l-4 10M1104 670l-7 3M1295 571l-8 13M1293 518l13 8M1104 641l-11 2M1235 572l-12 0M1134 667l-15 5M1311 530l-1 10M1167 560l-7 3M1306 504l12 8M1195 556l-8 5M1164 634l-3 7M1070 635l-1 7M1133 657l-16 1M1307 533l2 16M1102 619l-12 3M1279 544l-8 4M1153 646l-7 3M1092 628l-8 2M1226 563l-8 3M1209 609l-10 9M1324 559l-3 9M1198 575l-11 2M1122 609l-11 3M1161 655l-8 8M1255 566l-9 5M1229 579l-8 9" stroke="#665d55" stroke-width="1.3" opacity="0.28"/><path d="M1339 465l15 1M1085 653l-10 9M1229 631l-13 3M1253 549l-8 4M1315 539l-3 15M1286 473l11 7M1069 633l-5 12M1202 568l-11 10M1083 658l-15 2M1137 597l-12 8M1110 646l-7 4M1149 586l-13 9M1337 626l-3 9M1256 547l-8 4M1327 515l8 7M1081 667l-10 1M1254 549l-12 3M1318 538l-7 11M1145 629l-7 3M1229 595l-9 5M1316 505l8 2M1221 588l-12 5M1132 660l-14 7M1094 577l-6 8M1214 631l-11 11M1083 595l-8 1M1308 538l-4 14M1295 525l-3 10M1252 541l-12 3M1302 507l12 -1M1307 594l-4 10M1267 546l-7 7M1091 659l-16 2M1063 663l-1 10M1118 609l-8 9M1119 634l-11 5M1162 619l-8 5M1207 584l-10 5M1154 662l-7 4M1104 630l-14 6M1106 593l-8 3M1138 605l-11 -1M1154 599l-9 11M1268 544l-12 8M1279 530l-8 7M1229 558l-7 4M1248 569l-11 10M1291 582l1 10M1197 555l-15 -1M1151 627l-13 9M1262 567l-12 3M1172 606l-9 4M1156 658l-8 3M1207 577l-8 8M1178 601l-6 4M1158 577l-13 4M1269 520l12 7M1322 608l-6 6M1239 566l-8 8M1226 555l-12 7M1153 604l-11 9M1292 479l15 -3M1238 587l-12 8M1248 571l-10 7M1228 568l-8 1M1295 533l-1 9M1241 554l-7 2M1231 668l-12 6M1141 587l-8 4M1312 561l-1 9M1299 544l-5 12M1117 605l-6 6M1329 554l10 9M1235 600l-12 8M1098 615l-7 7M1150 602l-6 12M1299 562l-4 12M1241 539l-7 7M1127 617l-13 7M1141 601l-8 12M1267 550l-7 5M1278 465l9 5M1126 627l-9 3M1164 645l-14 7M1282 495l12 4M1282 563l-2 8M1203 599l-13 1M1151 595l-13 6M1213 562l-6 4M1115 658l-11 5M1099 632l-8 5M1237 583l-6 4M1229 558l-12 1M1263 560l-13 3M1285 486l12 8M1148 626l-12 6M1118 618l-8 6M1190 600l-9 4M1246 549l-8 2M1114 601l-12 3M1301 627l-4 7M1250 524l-9 9M1249 566l-5 8M1281 557l0 11M1147 636l-8 3M1270 590l-14 2M1282 550l-1 8M1105 634l-10 4M1251 551l-10 1M1293 515l7 8M1215 608l-11 11M1293 591l-3 14M1298 524l-9 11M1154 597l-12 -0M1080 617l-9 2M1189 615l-4 6M1167 638l-12 3M1315 552l-6 10M1304 486l9 8M1067 646l1 10M1169 591l-7 4M1114 612l-10 7M1214 540l-8 5M1135 592l-4 14M1257 553l-4 8M1322 523l-4 6M1135 664l-9 4M1158 642l-7 3M1116 607l-10 8M1105 664l-6 5M1299 513l8 8M1106 644l-10 2M1263 609l-8 0M1152 588l-10 8M1215 618l-9 6M1139 607l-8 1M1310 548l-0 8M1295 559l-9 8M1161 606l-11 2M1291 508l7 5M1327 540l-2 14M1112 650l-10 5M1119 631l-7 5M1179 588l-9 2M1231 542l-14 2M1188 623l-8 7M1061 652l-5 14M1275 560l-9 5M1133 634l-9 7M1230 642l-11 9M1324 521l-6 15M1294 569l-1 13M1273 559l-10 9M1209 601l-6 5M1183 636l-6 9M1218 607l-11 6M1164 637l-12 4M1225 537l-10 1M1237 611l-12 2M1105 650l-9 6M1071 641l-3 13M1241 665l-11 6M1170 656l-6 4M1243 553l-7 4M1281 544l-3 6M1211 602l-10 7M1218 596l-11 3M1221 617l-12 6M1215 585l-8 9M1296 530l-5 7M1305 541l-5 6M1297 507l11 11M1126 609l-10 4M1127 579l-6 3M1320 509l14 0M1252 600l-11 11M1224 559l-7 4M1212 596l-13 4M1083 619l-7 5M1061 644l2 7M1139 601l-8 4M1241 607l-9 -0M1303 573l-9 11M1284 536l-3 13M1237 593l1 13M1286 564l-2 15M1144 599l-12 2M1123 609l-7 -0M1094 588l-13 6M1302 510l10 3M1170 601l-8 3M1295 558l-2 14M1229 539l-5 5M1163 643l-6 4M1101 597l-5 11M1305 546l-3 13M1240 612l-5 5M1281 558l-5 8M1285 575l-5 7M1159 624l-14 6M1189 571l-7 9M1265 586l-6 6M1117 667l-5 10M1322 467l11 4M1244 550l-14 6M1322 560l-0 12M1241 578l-7 10M1171 621l-6 4M1110 656l-12 3M1311 563l-1 13M1157 633l-15 6M1072 650l2 16M1199 624l-10 9M1229 609l-12 0M1298 522l7 11M1100 648l-12 6M1309 468l9 7M1165 649l-7 3M1105 648l-9 4M1123 598l-7 5M1106 625l-9 8M1181 588l-8 2M1093 634l-9 5M1205 584l-7 4M1169 611l-14 7M1293 571l-2 9M1219 585l-7 -2M1218 562l-13 1M1181 599l-7 5M1281 531l-6 14M1069 623l3 14M1306 559l-2 13M1272 528l-8 2M1283 474l15 6M1301 559l-4 15M1191 645l-10 7M1077 602l-1 10M1292 506l9 5M1234 641l-11 0M1224 583l-11 4M1239 555l-8 7M1181 595l-8 4M1202 605l-9 13M1299 525l-1 9M1241 587l-14 1M1218 592l-11 6M1065 633l-5 8M1181 592l-15 4M1168 594l-11 4M1158 612l-7 5M1172 569l-4 9M1225 561l-9 6M1125 639l-5 5M1191 584l-8 5M1318 533l-6 13M1225 578l-8 9M1099 595l-13 9M1206 560l-7 11M1075 652l-0 7M1121 606l-6 4M1288 599l-3 7M1116 630l-6 8M1276 539l-11 9M1196 598l-8 4M1088 635l-13 4M1100 636l-9 7M1163 565l-14 4M1145 606l-8 4M1293 625l-2 11M1138 594l-7 9M1294 573l1 9M1230 611l-7 6M1114 641l-11 10M1101 606l-7 6M1305 513l9 1M1116 621l-13 4M1170 563l-10 3M1244 588l-13 5M1209 599l-13 8M1154 628l-7 4M1252 564l-6 6M1245 550l-10 10M1300 483l15 3M1331 550l-10 11M1091 650l-8 6M1182 612l-5 7M1288 513l6 6M1251 567l-9 7M1206 555l-6 5M1327 548l-6 8M1173 552l-4 7M1160 621l-13 -1M1072 642l-5 13M1181 611l-11 -1M1291 583l2 14M1193 571l-11 6M1291 573l-4 14M1141 621l-11 11M1140 659l-7 4M1279 534l-9 7M1222 555l-16 3M1124 589l-5 8M1211 600l-11 5M1151 602l-8 4M1275 559l-11 9M1131 643l-6 4M1309 536l-7 9M1199 671l-7 2M1176 615l-9 4M1263 600l-8 3M1061 630l0 10M1245 560l-15 4M1239 596l-7 3M1221 574l-8 7M1298 474l7 4M1346 437l9 2M1101 612l-7 1M1145 665l-6 12M1168 657l-6 4M1236 581l-8 4M1152 642l-7 4M1162 608l-8 2M1214 606l-10 3M1138 600l-10 5M1163 627l-9 8M1198 674l-12 8M1205 616l-10 3M1174 568l-12 -1M1158 546l-3 8M1222 608l-12 8M1159 642l-6 4M1312 476l10 5M1282 611l-3 13M1312 528l-1 11M1300 521l-9 8M1317 577l-2 13M1238 626l-15 -3M1137 586l-4 10M1217 622l-12 4M1292 541l-1 9M1240 580l-9 2M1270 486l8 7M1234 580l-13 7M1264 578l-13 8M1065 648l-1 8M1145 605l-5 6M1190 599l-13 0M1207 660l-12 4M1291 528l-9 10M1194 609l-9 1M1279 499l3 10M1162 634l-11 6M1294 518l4 9M1310 503l14 8M1071 663l-5 10M1293 509l10 5M1260 631l-7 3M1260 540l-12 8M1298 525l-10 10M1128 609l-11 -1M1297 560l-5 12M1147 650l-9 5M1140 655l-11 2M1246 618l-9 5M1254 573l-11 1M1307 541l-1 8M1229 595l-12 8M1256 553l-8 5M1284 558l-1 8M1082 598l-12 2M1197 613l-12 6M1078 606l-6 13M1312 556l-3 14M1155 583l-8 10M1267 616l-8 10M1163 601l-12 4M1117 636l-12 1M1194 619l-7 3M1215 594l-7 7M1097 602l-12 3M1115 625l-9 -1M1106 648l-12 5M1280 484l12 5M1324 551l-4 10M1232 627l-9 5M1199 550l-7 2M1107 609l-8 7M1113 612l-9 11M1219 615l-10 9M1261 562l-8 3M1216 573l-6 8M1219 619l-3 7M1313 525l-4 11M1240 593l-6 4M1217 630l-8 1M1129 601l-13 9M1218 615l-9 0M1093 637l-13 8M1097 631l-10 3M1094 646l-9 11M1273 541l-10 10M1080 604l-2 7M1235 589l-9 2M1263 562l-9 11M1118 608l-8 3M1309 495l9 2M1079 636l3 9M1146 626l-9 7M1278 550l-13 5M1130 592l-12 1M1106 659l-9 5M1199 594l-9 10M1066 641l1 12M1262 611l-9 4M1199 568l-11 8M1204 599l-6 4M1118 648l-12 3M1163 640l-9 7M1268 543l-5 9M1221 569l-11 10M1131 654l-8 6M1066 658l-1 9M1240 522l-9 2M1186 639l-12 4M1301 556l-7 14M1311 455l14 2M1235 550l-6 7M1115 663l-15 4M1217 548l-9 5M1297 493l15 3M1143 652l-9 5M1178 616l-10 5M1140 597l-8 9M1185 632l-12 3M1195 586l-7 11M1206 573l-7 14M1300 531l-6 12M1336 572l-2 9M1199 606l-8 4M1143 613l-13 6M1097 633l-11 2M1104 647l-7 -0M1263 536l-11 11M1092 617l-13 8M1193 594l-9 8M1108 610l-12 5M1299 586l-7 13" stroke="#94887b" stroke-width="1.3" opacity="0.28"/></g>
    <!-- muzzle -->
    <ellipse cx="1005" cy="425" rx="58" ry="52" fill="#2a2726" filter="url(#p8)" transform="rotate(30 1005 425)"/>
    <ellipse cx="983" cy="418" rx="24" ry="28" fill="#38322f" filter="url(#p8)"/>
    <ellipse cx="1052" cy="432" rx="26" ry="50" fill="#43372f" filter="url(#p8)" transform="rotate(-20 1052 432)" opacity=".9"/>
    <ellipse cx="1080" cy="440" rx="12" ry="52" fill="#121314" filter="url(#p4)" transform="rotate(-12 1080 440)" opacity=".95"/>
    <path d="M950 396 C962 380 982 372 1000 374" stroke="#0e0e0e" stroke-width="6" fill="none" filter="url(#p2)"/>
    <path d="M1000 372 C1014 392 1026 420 1034 452 C1042 480 1054 500 1068 512" stroke="#56463e" stroke-width="10" fill="none" filter="url(#p4)" opacity=".95"/>
    <path d="M994 378 C1008 398 1018 426 1026 456 C1032 478 1040 494 1050 506" stroke="#15130f" stroke-width="3" fill="none" filter="url(#p2)" opacity=".9"/>
    <ellipse cx="972" cy="442" rx="26" ry="20" fill="#191818" filter="url(#p8)" opacity=".85"/>
    <path d="M991 462l-1 2M1011 452l-1 1M950 421l-1 2M989 415l-1 3M1006 438l-1 1M992 469l-1 2M949 420l-2 3M979 459l-1 1M994 476l-1 2M970 460l-2 2M994 438l-2 2M1023 415l-2 3M995 411l-2 3M977 429l-2 2M1008 414l-2 3M994 450l-1 2M980 404l-2 1M957 405l-1 2M1011 465l-1 2M1000 408l-1 2M961 413l-1 2M980 431l-1 2M1010 407l-2 1M978 388l-1 2M983 470l-2 2M1024 438l-1 2M973 419l-1 2M991 403l-1 2M1011 428l-1 2M992 430l-2 2M986 456l-2 2M990 451l-2 2M1022 443l-1 1M950 436l-1 1M1001 466l-1 2M953 436l-2 2M970 418l-1 3M976 457l-1 1M1008 412l-2 2M992 408l-1 2M958 409l-1 2M964 420l-2 3M1013 399l-2 2M991 422l-1 3M961 438l-2 2M974 461l-1 3M981 444l-2 2M1012 426l-2 3M1010 461l-2 1M969 403l-2 1M988 426l-1 2M954 417l-1 2M1024 434l-2 1M1002 459l-1 1M1017 426l-2 1M981 471l-2 2M951 439l-2 2M988 425l-2 2M1010 405l-2 2M967 445l-1 2M964 454l-1 3M988 427l-1 1M967 423l-1 3M1005 408l-1 3M1018 432l-1 2M950 430l-2 2M984 393l-2 2M969 415l-1 2M994 459l-2 2M992 472l-1 2" stroke="#6b645d" stroke-width="1.1" fill="none" stroke-linecap="round" opacity=".7"/>
    <path d="M944 404 C948 384 962 368 985 360" stroke="#4a4441" stroke-width="3" fill="none" filter="url(#p2)" opacity=".8"/>
  </g>
  <g fill="none" stroke="#77736d" stroke-width=".8" opacity=".75" filter="url(#p05)">
    <path d="M1092 452 C1110 480 1140 520 1176 562"/>
    <path d="M1100 470 C1120 510 1150 560 1190 612"/>
    <path d="M1070 500 C1082 530 1096 560 1108 600"/>
    <path d="M1060 470 C1076 500 1100 540 1132 580"/>
    <path d="M1170 330 C1176 318 1184 306 1194 298"/>
  </g>
  <!-- ear -->
  <path d="M1276.0 318.0 C1277.7 311.7 1290.0 311.7 1296.0 312.0 C1302.0 312.3 1306.8 316.2 1312.0 320.0 C1317.2 323.8 1323.0 327.5 1327.0 335.0 C1331.0 342.5 1332.5 354.5 1336.0 365.0 C1339.5 375.5 1344.0 386.5 1348.0 398.0 C1352.0 409.5 1359.0 425.0 1360.0 434.0 C1361.0 443.0 1358.0 446.5 1354.0 452.0 C1350.0 457.5 1342.0 463.0 1336.0 467.0 C1330.0 471.0 1324.0 476.5 1318.0 476.0 C1312.0 475.5 1304.5 470.0 1300.0 464.0 C1295.5 458.0 1292.8 449.0 1291.0 440.0 C1289.2 431.0 1288.5 420.0 1289.0 410.0 C1289.5 400.0 1294.5 390.0 1294.0 380.0 C1293.5 370.0 1289.0 360.3 1286.0 350.0 C1283.0 339.7 1274.3 324.3 1276.0 318.0 Z" fill="#0d0e10" filter="url(#pfur)"/>
  <ellipse cx="1322" cy="410" rx="10" ry="45" fill="#26292c" filter="url(#p8)" transform="rotate(-14 1322 410)" opacity=".8"/>
  <path d="M1284 330 C1296 370 1290 410 1292 445" stroke="#050506" stroke-width="5" fill="none" filter="url(#p2)"/>

  <!-- nose -->
  <path d="M1006 352 C1012 340 1030 332 1046 335 C1062 339 1074 352 1073 366 C1071 378 1058 380 1046 374 C1034 366 1018 360 1006 352 Z" fill="#27282b" filter="url(#p1)"/>
  <ellipse cx="1040" cy="343" rx="18" ry="5" fill="#515357" filter="url(#p2)" transform="rotate(14 1040 343)"/>
  <ellipse cx="1042" cy="356" rx="9" ry="8" fill="#070808" filter="url(#p1)"/>
  <ellipse cx="1062" cy="366" rx="8" ry="5" fill="#46484c" filter="url(#p2)"/>
  <path d="M1030 354 C1018 362 1006 372 997 380" stroke="#5a5c60" stroke-width="2" fill="none" filter="url(#p1)" opacity=".8"/>

  <!-- far eye -->
  <ellipse cx="1014" cy="324" rx="19" ry="21" fill="#09090a" filter="url(#p2)"/>
  <ellipse cx="1014" cy="329" rx="14" ry="15" fill="#231411"/>
  <ellipse cx="1012" cy="331" rx="8" ry="9" fill="#0e0706"/>
  <path d="M1004 336 C1008 342 1018 343 1024 338" stroke="#6a5550" stroke-width="1.5" fill="none" filter="url(#p1)" opacity=".8"/>
  <ellipse cx="1017" cy="322" rx="3" ry="2" fill="#7f8890" filter="url(#p1)" opacity=".7"/>
  <!-- near eye -->
  <ellipse cx="1148" cy="377" rx="34" ry="24" fill="#0a0a0b" filter="url(#p4)" transform="rotate(12 1148 377)"/>
  <path d="M1116 373 C1124 360 1140 355 1156 360 C1170 366 1176 378 1174 388 C1160 396 1140 396 1128 390 C1120 384 1116 378 1116 373 Z" fill="#a27868"/>
  <ellipse cx="1152" cy="378" rx="21" ry="17" fill="url(#iris)"/>
  <ellipse cx="1153" cy="377" rx="8" ry="8.5" fill="#0d0706"/>
  <path d="M1142 368 C1150 364 1160 366 1166 372" stroke="#b9c4d0" stroke-width="2" fill="none" filter="url(#p1)" opacity=".8"/>
  <path d="M1114 370 C1124 356 1142 350 1160 355 C1172 360 1178 372 1177 384" stroke="#0a0a0a" stroke-width="3" fill="none" filter="url(#p1)"/>
  <path d="M1118 393 C1135 405 1164 405 1182 390" stroke="#4d3d37" stroke-width="7" fill="none" filter="url(#p2)" opacity=".85"/>
  <path d="M1120 392 C1135 400 1160 400 1176 390" stroke="#5f5048" stroke-width="2" fill="none" filter="url(#p1)"/>

  <!-- shirt -->
  <g filter="url(#p05)">
    <path d="M1343.6 558.0 L1318.8 574.4 L1291.3 588.1 L1270.7 599.1 L1250.0 612.9 L1222.5 625.3 L1201.9 633.5 L1181.3 641.8 L1160.6 650.0 L1146.0 656.0 L1460 670 L1448 655 L1375 581.5 L1352.5 566.5 L1344 556 Z" fill="#c9261d"/>
    <path d="M1343.6 558.0 L1318.8 574.4 L1291.3 588.1 L1270.7 599.1 L1250.0 612.9 L1212 656 L1260 656 L1300 611 L1352.5 566.5 L1345 559 Z" fill="#e8e3d8"/>
    <path d="M1352.5 566.5 L1375 581.5 L1303 656 L1260 656 L1300 611 Z" fill="#1d2136"/>
    <path d="M1375 581.5 L1402 605.5 L1350 656 L1303 656 Z" fill="#d6291e"/>
    <path d="M1402 605.5 L1422 626.5 L1396 656 L1350 656 Z" fill="#e8e3d8"/>
    <path d="M1422 626.5 L1449 656 L1396 656 Z" fill="#1d2136"/>
    <!-- collar band -->
    <path d="M1331.0 545.0 L1305.0 553.8 L1284.4 574.4 L1270.7 595.0 L1262.0 604.0 L1270.7 599.1 L1291.3 588.1 L1318.8 574.4 L1343.6 558.0 L1344 556 Z" fill="#ebe6dc"/>
    <path d="M1140 657 L1158 651 L1172 657 Z" fill="#e8e3d8"/>
  </g>
  <path d="M1343.6 558.0 C1339.5 560.7 1327.5 569.4 1318.8 574.4 C1310.1 579.4 1299.3 584.0 1291.3 588.1 C1283.3 592.2 1277.6 595.0 1270.7 599.1 C1263.8 603.2 1258.0 608.5 1250.0 612.9 C1242.0 617.3 1230.5 621.9 1222.5 625.3 C1214.5 628.7 1208.8 630.8 1201.9 633.5 C1195.0 636.2 1188.2 639.0 1181.3 641.8 C1174.4 644.5 1166.5 647.6 1160.6 650.0 C1154.7 652.4 1148.4 655.0 1146.0 656.0" stroke="#1f2439" stroke-width="3.6" fill="none"/>
  <path d="M1343.6 558.0 C1339.5 560.7 1327.5 569.4 1318.8 574.4 C1310.1 579.4 1299.3 584.0 1291.3 588.1 C1283.3 592.2 1277.6 595.0 1270.7 599.1 C1263.8 603.2 1258.0 608.5 1250.0 612.9 C1242.0 617.3 1230.5 621.9 1222.5 625.3 C1214.5 628.7 1208.8 630.8 1201.9 633.5 C1195.0 636.2 1188.2 639.0 1181.3 641.8 C1174.4 644.5 1166.5 647.6 1160.6 650.0 C1154.7 652.4 1148.4 655.0 1146.0 656.0" stroke="#c9cdd6" stroke-width="1" stroke-dasharray="2.5 2.5" fill="none" opacity=".8"/>
  <!-- fur over collar -->
  <g filter="url(#p05)"><path d="M1326 541Q1326 546 1327 550Q1329 546 1329 542ZM1320 544Q1318 548 1315 551Q1320 550 1323 546ZM1315 545Q1314 547 1312 550Q1316 550 1318 548ZM1315 547Q1313 548 1311 550Q1314 551 1316 549ZM1313 544Q1310 547 1308 551Q1312 550 1315 547ZM1310 547Q1309 550 1309 553Q1311 550 1312 548ZM1310 547Q1308 550 1308 555Q1310 552 1312 549ZM1301 550Q1298 553 1298 558Q1300 555 1303 552ZM1299 551Q1298 554 1299 558Q1300 555 1302 552ZM1300 552Q1299 556 1301 561Q1302 557 1303 552ZM1297 554Q1294 556 1292 560Q1295 558 1298 557ZM1294 557Q1293 559 1292 562Q1294 560 1296 558ZM1287 562Q1284 566 1280 570Q1285 567 1288 564ZM1287 566Q1291 570 1297 572Q1293 569 1290 564ZM1274 582Q1270 585 1268 589Q1272 587 1275 584ZM1273 581Q1272 584 1271 588Q1275 585 1276 582ZM1270 589Q1270 592 1273 595Q1273 592 1273 590ZM1270 588Q1268 591 1268 595Q1272 593 1273 590ZM1270 590Q1269 594 1268 598Q1272 595 1274 591ZM1268 592Q1266 596 1267 601Q1268 597 1270 593ZM1267 594Q1265 597 1264 602Q1267 599 1270 596ZM1266 597Q1263 599 1260 602Q1264 601 1268 599ZM1264 597Q1263 601 1265 605Q1266 602 1267 598ZM1257 599Q1256 602 1256 605Q1258 603 1260 602ZM1256 604Q1253 608 1255 614Q1256 610 1259 606ZM1244 609Q1243 612 1241 615Q1245 613 1247 610ZM1245 610Q1244 613 1243 616Q1246 614 1248 611ZM1240 612Q1239 615 1239 618Q1242 616 1243 613ZM1236 613Q1235 616 1234 619Q1237 617 1238 615ZM1229 616Q1228 620 1229 625Q1231 621 1232 616ZM1232 615Q1228 618 1224 621Q1230 621 1234 618ZM1220 619Q1219 622 1221 626Q1222 623 1223 620ZM1218 621Q1216 625 1214 629Q1219 627 1221 622ZM1218 623Q1218 625 1220 628Q1221 625 1221 623ZM1212 624Q1213 628 1215 632Q1216 628 1215 623ZM1215 622Q1212 625 1209 628Q1214 628 1217 625ZM1208 625Q1205 627 1202 630Q1207 629 1210 627ZM1212 622Q1209 626 1209 632Q1211 628 1214 624ZM1201 628Q1200 631 1199 633Q1203 632 1204 630ZM1207 624Q1207 629 1206 634Q1209 629 1209 624ZM1192 630Q1191 635 1189 639Q1194 635 1195 631ZM1198 628Q1195 631 1194 636Q1197 633 1200 630ZM1194 631Q1193 634 1191 636Q1195 635 1196 633ZM1194 632Q1193 637 1190 641Q1196 637 1197 632ZM1194 630Q1193 633 1195 638Q1195 634 1197 630ZM1189 631Q1188 635 1186 638Q1190 636 1192 633ZM1182 636Q1185 639 1189 640Q1188 636 1186 634ZM1174 639Q1172 643 1174 649Q1175 644 1177 640ZM1173 638Q1172 640 1172 643Q1173 641 1175 639ZM1167 641Q1164 643 1161 646Q1166 646 1169 644ZM1165 641Q1164 643 1163 646Q1165 645 1167 643ZM1166 641Q1166 645 1165 649Q1169 646 1170 643ZM1161 643Q1160 647 1159 650Q1163 647 1164 643ZM1161 643Q1159 645 1158 648Q1162 647 1164 645Z" fill="#2a2724" opacity="1"/><path d="M1316 545Q1315 549 1314 554Q1317 550 1318 546ZM1304 551Q1303 556 1303 561Q1305 557 1306 552ZM1298 554Q1298 557 1299 561Q1302 558 1302 554ZM1294 560Q1295 564 1299 567Q1298 563 1297 559ZM1295 558Q1296 561 1300 563Q1300 560 1299 556ZM1294 557Q1295 561 1296 565Q1297 561 1296 556ZM1290 562Q1291 567 1292 572Q1294 567 1293 562ZM1292 559Q1293 563 1293 566Q1295 562 1294 559ZM1287 564Q1288 567 1291 570Q1290 567 1290 564ZM1287 564Q1286 567 1288 571Q1289 568 1291 565ZM1284 568Q1282 571 1282 575Q1284 572 1286 569ZM1282 572Q1283 575 1285 579Q1286 575 1285 571ZM1279 573Q1279 576 1280 579Q1281 576 1282 574ZM1278 576Q1278 579 1279 582Q1281 579 1281 576ZM1275 579Q1274 583 1275 587Q1276 583 1277 579ZM1275 579Q1273 584 1275 590Q1275 585 1277 580ZM1272 585Q1269 589 1266 592Q1271 590 1274 587ZM1267 591Q1265 594 1263 598Q1267 596 1270 593ZM1264 595Q1263 599 1264 603Q1266 600 1268 597ZM1262 598Q1260 603 1258 607Q1262 604 1264 599ZM1264 598Q1263 600 1263 603Q1265 601 1266 599ZM1261 599Q1259 602 1257 605Q1262 604 1264 601ZM1261 601Q1258 603 1256 608Q1259 605 1262 603ZM1257 601Q1253 603 1249 605Q1255 606 1259 604ZM1256 605Q1255 608 1254 611Q1257 609 1258 605ZM1256 602Q1254 604 1255 608Q1257 606 1259 605ZM1253 605Q1253 608 1255 612Q1255 609 1256 605ZM1248 609Q1246 611 1246 614Q1248 612 1249 610ZM1238 614Q1238 617 1237 621Q1240 618 1241 614ZM1240 611Q1239 613 1240 617Q1241 614 1243 612ZM1234 613Q1231 617 1228 621Q1234 619 1237 615ZM1231 615Q1227 617 1225 622Q1229 620 1232 618ZM1228 618Q1228 621 1228 623Q1230 621 1230 619ZM1225 617Q1223 619 1223 622Q1225 621 1227 619ZM1221 619Q1220 624 1220 628Q1223 624 1225 620ZM1216 623Q1215 627 1217 632Q1218 628 1219 624ZM1206 625Q1206 628 1206 632Q1208 629 1209 626ZM1198 627Q1196 630 1196 634Q1199 632 1201 629ZM1199 629Q1196 631 1195 635Q1198 633 1201 631ZM1191 632Q1191 635 1195 637Q1193 634 1193 631ZM1181 634Q1180 637 1180 641Q1182 638 1183 635ZM1183 635Q1180 638 1178 641Q1182 639 1185 636ZM1182 634Q1179 637 1179 643Q1182 640 1185 637ZM1177 637Q1175 642 1173 646Q1177 643 1179 638ZM1171 639Q1169 640 1167 644Q1170 643 1172 641ZM1174 639Q1171 640 1168 642Q1172 642 1175 641ZM1170 640Q1167 642 1165 645Q1169 645 1172 643ZM1159 645Q1158 648 1157 651Q1161 649 1163 646ZM1161 646Q1163 648 1166 650Q1166 645 1164 643Z" fill="#3a3632" opacity="1"/><path d="M1327 543Q1325 546 1326 550Q1327 547 1329 544ZM1325 543Q1323 546 1324 551Q1326 548 1328 545ZM1318 545Q1316 549 1316 553Q1319 551 1321 547ZM1318 545Q1317 548 1317 552Q1320 550 1321 547ZM1314 545Q1311 547 1308 550Q1313 550 1316 548ZM1312 545Q1310 550 1310 555Q1312 550 1314 546ZM1306 548Q1304 551 1303 556Q1306 553 1309 550ZM1308 549Q1307 551 1306 554Q1309 552 1310 549ZM1306 548Q1306 551 1306 555Q1309 552 1310 549ZM1303 548Q1302 551 1302 555Q1305 553 1306 550ZM1303 551Q1302 555 1301 559Q1304 556 1306 551ZM1299 555Q1297 557 1294 559Q1298 558 1300 556ZM1293 557Q1292 560 1292 564Q1295 562 1297 559ZM1288 562Q1287 566 1287 569Q1290 567 1292 564ZM1284 566Q1283 570 1285 574Q1286 571 1287 567ZM1278 576Q1277 579 1276 582Q1280 580 1281 577ZM1278 578Q1278 581 1280 584Q1280 581 1280 578ZM1279 576Q1279 578 1281 581Q1282 578 1281 575ZM1277 579Q1275 583 1273 588Q1277 584 1279 580ZM1270 588Q1267 591 1265 594Q1269 593 1272 590ZM1265 595Q1261 597 1259 602Q1263 600 1267 598ZM1263 595Q1261 599 1262 605Q1264 601 1266 597ZM1261 597Q1260 600 1260 603Q1262 601 1264 599ZM1262 601Q1263 604 1268 608Q1267 604 1266 600ZM1261 599Q1258 602 1258 607Q1261 604 1264 601ZM1257 603Q1257 606 1258 610Q1260 607 1261 603ZM1252 606Q1248 609 1244 611Q1249 611 1253 608ZM1241 612Q1240 616 1240 620Q1241 616 1243 613ZM1240 612Q1237 614 1234 616Q1239 617 1242 615ZM1241 611Q1239 615 1237 618Q1241 616 1244 613ZM1234 614Q1232 618 1229 622Q1235 620 1238 616ZM1232 614Q1232 618 1231 621Q1235 618 1235 615ZM1229 616Q1228 620 1227 624Q1231 620 1232 616ZM1224 619Q1222 623 1221 628Q1225 625 1227 621ZM1225 618Q1224 623 1224 628Q1227 624 1228 619ZM1222 619Q1220 622 1220 626Q1222 623 1224 620ZM1210 622Q1208 625 1207 627Q1210 626 1212 624ZM1210 624Q1210 627 1210 630Q1212 627 1212 624ZM1203 626Q1202 629 1205 634Q1205 630 1206 627ZM1202 628Q1200 632 1201 636Q1202 633 1204 629ZM1191 631Q1189 635 1191 640Q1191 636 1193 631ZM1191 630Q1189 635 1187 640Q1192 636 1194 632ZM1185 633Q1182 636 1179 639Q1183 638 1187 635ZM1176 639Q1174 641 1173 644Q1176 642 1178 640ZM1174 637Q1172 640 1172 644Q1174 642 1177 639ZM1180 636Q1181 639 1184 642Q1184 638 1183 635ZM1179 636Q1178 639 1180 643Q1181 640 1182 637ZM1171 640Q1170 643 1172 647Q1173 644 1174 641ZM1168 641Q1164 645 1161 648Q1166 646 1170 643Z" fill="#1a1918" opacity="1"/><path d="M1324 542Q1322 544 1323 547Q1324 545 1326 543ZM1323 545Q1320 547 1317 550Q1321 549 1324 546ZM1319 546Q1318 550 1320 554Q1321 550 1322 547ZM1322 545Q1321 548 1321 552Q1323 549 1324 546ZM1324 542Q1322 544 1322 548Q1324 546 1326 544ZM1314 545Q1310 546 1307 549Q1311 549 1315 548ZM1313 544Q1310 546 1306 548Q1311 549 1314 547ZM1306 550Q1307 553 1310 557Q1310 552 1309 548ZM1301 551Q1300 555 1299 558Q1303 556 1304 553ZM1296 554Q1295 559 1296 565Q1298 560 1300 555ZM1297 556Q1295 560 1295 565Q1297 561 1300 557ZM1293 560Q1291 563 1290 567Q1292 564 1294 561ZM1289 563Q1287 567 1285 572Q1289 568 1291 564ZM1290 564Q1290 568 1291 573Q1292 569 1293 564ZM1290 563Q1288 566 1287 570Q1290 567 1292 564ZM1286 566Q1282 568 1280 573Q1284 571 1288 569ZM1282 568Q1283 572 1286 576Q1287 571 1286 567ZM1280 572Q1278 576 1277 580Q1280 577 1283 574ZM1282 570Q1281 574 1278 578Q1283 575 1284 571ZM1283 570Q1281 573 1280 576Q1284 575 1286 572ZM1281 571Q1279 575 1280 581Q1281 576 1284 572ZM1281 573Q1279 577 1280 583Q1282 579 1284 575ZM1278 575Q1276 578 1275 582Q1279 580 1281 577ZM1275 578Q1273 582 1274 588Q1277 584 1279 579ZM1277 580Q1273 583 1270 588Q1274 584 1278 582ZM1273 584Q1271 587 1272 592Q1273 589 1275 585ZM1272 585Q1271 588 1272 592Q1274 589 1275 585ZM1271 586Q1267 589 1263 592Q1268 591 1272 588ZM1270 587Q1267 590 1266 594Q1269 591 1271 588ZM1268 591Q1268 593 1268 596Q1270 593 1271 591ZM1267 591Q1264 594 1262 599Q1265 595 1268 593ZM1266 595Q1264 598 1261 601Q1266 600 1268 596ZM1259 601Q1257 604 1257 610Q1258 606 1261 602ZM1253 603Q1252 607 1253 613Q1254 609 1257 605ZM1253 605Q1250 608 1248 613Q1251 610 1255 607ZM1253 603Q1250 605 1246 608Q1250 607 1254 606ZM1251 605Q1249 610 1245 613Q1250 610 1252 606ZM1248 607Q1246 610 1244 612Q1248 611 1250 609ZM1249 607Q1246 610 1245 615Q1249 613 1252 610ZM1246 608Q1245 613 1245 618Q1247 613 1248 609ZM1247 610Q1245 614 1246 619Q1248 615 1250 611ZM1240 611Q1239 614 1240 617Q1242 614 1242 612ZM1238 612Q1235 615 1231 618Q1236 617 1240 614ZM1236 614Q1233 616 1231 617Q1234 617 1237 616ZM1233 615Q1232 617 1231 620Q1235 619 1236 617ZM1224 620Q1223 623 1225 627Q1226 624 1227 621ZM1222 620Q1219 624 1217 629Q1222 626 1224 622ZM1216 622Q1215 626 1216 631Q1217 627 1218 622ZM1217 620Q1216 624 1215 629Q1219 625 1220 621ZM1214 623Q1213 626 1214 629Q1216 627 1216 624ZM1211 624Q1210 627 1210 630Q1212 628 1213 625ZM1205 627Q1201 630 1199 633Q1203 632 1207 629ZM1207 625Q1206 629 1204 633Q1208 630 1210 625ZM1196 630Q1195 635 1194 640Q1198 636 1199 631ZM1199 630Q1199 634 1203 638Q1202 634 1201 630ZM1197 629Q1197 632 1199 635Q1201 632 1201 629ZM1188 634Q1188 636 1188 639Q1191 638 1192 635ZM1191 633Q1191 636 1192 639Q1194 636 1194 633ZM1190 631Q1190 634 1191 637Q1193 634 1194 631ZM1183 635Q1185 639 1186 644Q1188 638 1186 634ZM1171 639Q1170 642 1171 646Q1172 643 1173 640ZM1168 639Q1167 642 1169 646Q1170 643 1171 640Z" fill="#4a453f" opacity="1"/></g>
  </g>
</svg>
<!--DOG2-END-->
    <div class="nm" style="left:0;top:400.5px;background:rgba(8,2,2,.68);letter-spacing:1.4px;padding:0 8.5px 0 9.5px">Toshi</div>
  </div>
  <div id="bar">
    <!--ICONS-START-->
<svg class="ic" style="left:0;top:0" width="1398" height="64" viewBox="102 824 1398 64">
  <!-- mic (muted) -->
  <g fill="none" stroke="#b9b9b9" stroke-width="1.1" stroke-linecap="round">
    <rect x="145" y="842" width="11.5" height="20.5" rx="5.75" fill="#e0e0e2" stroke="none"/>
    <path d="M142.3 855.3 v1.5 a8.45 8.45 0 0 0 16.9 0 v-1.5"/>
    <path d="M150.75 865.4 v4.1 M146.2 869.6 h9.2"/>
    <path d="M136.4 870.6 L165.3 842.2" stroke="#ad5f59" stroke-width="1.15"/>
  </g>
  <!-- camera -->
  <g fill="#dededf">
    <rect x="231.9" y="847.2" width="21.6" height="17.8" rx="3.5"/>
    <path d="M254.6 852.4 L260.2 848.7 Q261.2 848.2 261.2 849.4 V862.6 Q261.2 863.8 260.2 863.3 L254.6 859.6 Z"/>
  </g>
  <!-- shield -->
  <g>
    <path d="M561.8 844.2 C565 846.8 569.4 848.5 573.3 849 V856.5 C573.3 862.6 568.5 867.4 561.8 869.6 C555.1 867.4 550.3 862.6 550.3 856.5 V849 C554.2 848.5 558.6 846.8 561.8 844.2 Z" fill="#1c1e1f" stroke="#dededf" stroke-width="1.3" stroke-linejoin="round"/>
    <path d="M561.8 844.2 C558.6 846.8 554.2 848.5 550.3 849 V857 H561.8 Z" fill="#dededf"/>
    <path d="M561.8 857 H573.3 C573 862.8 568.4 867.4 561.8 869.6 Z" fill="#dededf"/>
  </g>
  <!-- participants -->
  <g fill="#dededf">
    <circle cx="652.6" cy="850.2" r="5.4"/>
    <circle cx="664.6" cy="852" r="4.8"/>
    <path d="M643 865.2 C643 860.5 647 857.8 652.6 857.8 C658.2 857.8 661.4 860.5 661.4 865.2 Q661.4 867 659.6 867 H644.8 Q643 867 643 865.2 Z"/>
    <path d="M662.2 860.4 C663 860 664 859.9 665.2 859.9 C669.8 859.9 672.5 862 672.5 865.4 Q672.5 867 670.9 867 H662.6 C663 866.4 663.1 865.8 663.1 865 C663.1 863.2 662.8 861.7 662.2 860.4 Z"/>
  </g>
  <!-- chat -->
  <path d="M744.8 845 H762 Q766 845 766 849 V859.2 Q766 863.2 762 863.2 H752.2 L746.8 867.8 Q745.6 868.5 745.6 867.2 V863.2 H744.8 Q740.8 863.2 740.8 859.2 V849 Q740.8 845 744.8 845 Z" fill="#dededf"/>
  <!-- share -->
  <rect x="834.1" y="845" width="30.3" height="23" rx="5" fill="#69c045"/>
  <path d="M849.2 861.6 V851.2 M845.6 854.6 L849.2 851 L852.8 854.6" fill="none" stroke="#10260a" stroke-width="1.5" stroke-linecap="round" stroke-linejoin="round"/>
  <!-- record -->
  <circle cx="945.3" cy="856" r="11.6" fill="none" stroke="#e6e6e7" stroke-width="2.3"/>
  <circle cx="945.3" cy="856" r="8.7" fill="#dededf"/>
  <!-- reactions -->
  <circle cx="1040.8" cy="857.2" r="11.3" fill="#dededf"/>
  <circle cx="1049.6" cy="848.2" r="5" fill="#1c1e1f"/>
  <path d="M1049.6 843.8 V852.2 M1045.4 848 H1053.8" stroke="#dededf" stroke-width="1.5" fill="none"/>
  <circle cx="1037.8" cy="855" r="1.25" fill="#1c1e1f"/>
  <circle cx="1043.8" cy="855" r="1.25" fill="#1c1e1f"/>
  <path d="M1035.6 859 Q1040.8 865.6 1046 859" fill="none" stroke="#1c1e1f" stroke-width="1.3" stroke-linecap="round"/>
</svg>
<!--ICONS-END-->
    <div id="end">End Meeting</div>
  </div>
</div>
</body>
</html>
